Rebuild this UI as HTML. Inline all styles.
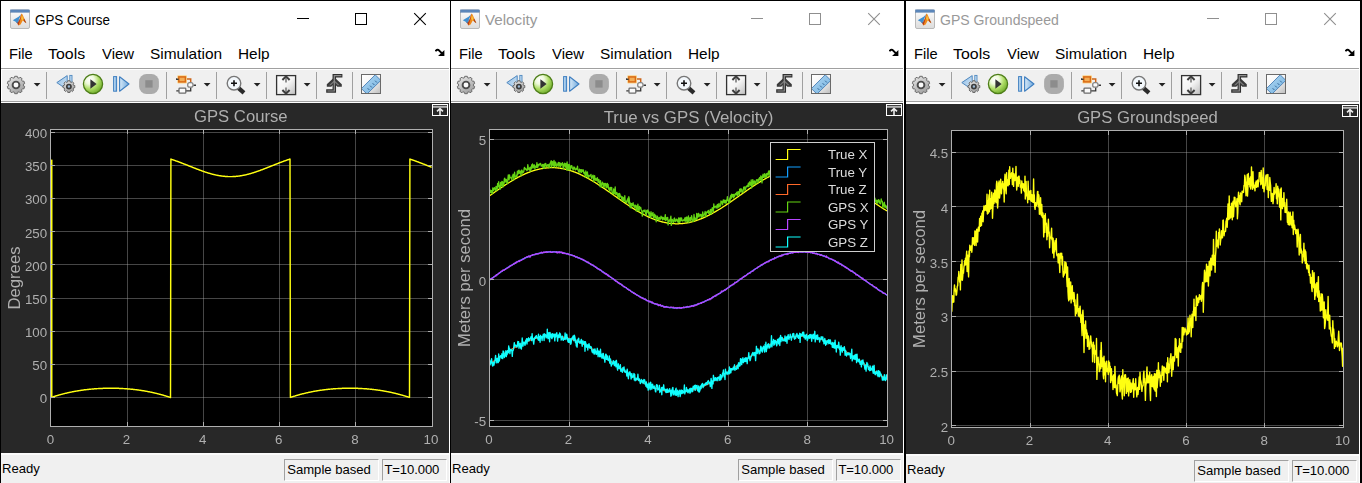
<!DOCTYPE html>
<html><head><meta charset="utf-8"><title>Scopes</title>
<style>
html,body{margin:0;padding:0;}
body{width:1362px;height:483px;overflow:hidden;background:#000;position:relative;font-family:"Liberation Sans",sans-serif;}
.win{position:absolute;top:1px;height:482px;background:#fff;overflow:hidden;}
.titlebar{position:absolute;left:0;top:0;right:0;height:37px;}
.ticon{position:absolute;left:9px;top:8px;}
.ttext{position:absolute;left:33.6px;top:9.6px;font-size:15.3px;line-height:18px;white-space:nowrap;transform-origin:0 0;transform:scaleX(0.89);color:#000;}
.inactive .ttext{color:#999;}
.ctl{position:absolute;top:0;height:36px;}
.menubar{position:absolute;left:0;right:0;top:37px;height:30px;}
.menubar span{position:absolute;top:7.2px;font-size:15px;line-height:18px;color:#000;white-space:nowrap;transform-origin:0 0;}
.mcorner{position:absolute;right:5px;top:9px;}
.tbline{position:absolute;left:0;right:1px;height:1px;}
.toolbar{position:absolute;left:0;right:1px;top:68px;height:32px;background:#f0f0f0;box-shadow:inset 1px 1px 0 #fff;}
.tbsvg{position:absolute;left:-1px;top:0;}
.figure{position:absolute;left:0;right:1px;background:#282828;will-change:transform;}
.fig{position:absolute;left:0;top:0;font-family:"Liberation Sans",sans-serif;}
.status{position:absolute;left:0;right:1px;bottom:0;background:#f0f0f0;border-top:2px solid #fbfbfb;font-size:13.1px;color:#000;}
.status .ready{position:absolute;left:1px;top:6.2px;line-height:15px;}
.panel{position:absolute;top:4px;height:20px;border:1px solid;border-color:#a0a0a0 #fff #fff #a0a0a0;line-height:19px;padding-left:2.2px;white-space:nowrap;box-sizing:content-box;}
.panel .tt{letter-spacing:-0.1px;margin-left:-0.8px;}
</style></head>
<body>
<div class="win" style="left:1px;width:449px;">
<div class="titlebar"><svg class="ticon" width="20" height="20" viewBox="0 0 20 20">
<defs><linearGradient id="mi" x1="0" y1="0" x2="0" y2="1"><stop offset="0" stop-color="#fdfdfd"/><stop offset="1" stop-color="#dcdcdc"/></linearGradient></defs>
<rect x="0.5" y="1" width="19" height="18.5" rx="1.5" fill="url(#mi)" stroke="#b9b9b9"/>
<rect x="0.6" y="0.9" width="18.8" height="2.3" fill="#5d89bc" stroke="#4d76a8" stroke-width="0.5"/>
<polygon points="2.8,11.2 9,7.6 11.2,5 9.4,9.5 7.6,13.2 5.6,12.8" fill="#3f8fd0"/>
<polygon points="5.6,12.8 7.6,13.2 9.6,9.4 8.8,12.6 7.4,14.4" fill="#2a5f9a"/>
<polygon points="11.4,4.4 12.6,5.4 14.2,9.6 16.4,14.2 14.6,13 12.8,11.6 10.6,15.4 8.6,16.6 7.4,14.4 9.2,11.6" fill="#ee8a1c"/>
<polygon points="11.4,4.4 10.4,8.6 8.8,12.6 7.4,14.4 8.4,16.4 9.6,13 10.8,9" fill="#b3371a"/>
<polygon points="12,6 13.4,10 12.4,12 11.2,9.6" fill="#f8c23a"/>
<polygon points="14.2,9.6 16.4,14.2 14.6,13 13.6,11" fill="#a8401c"/>
</svg><div class="ttext" style="transform:scaleX(0.873)">GPS Course</div>
<svg class="ctl" style="left:0" width="449" height="36" viewBox="0 1 449 36">
<path d="M296,18.5 h12" stroke="#000" stroke-width="1"/>
<rect x="354.5" y="13.5" width="11" height="11" fill="none" stroke="#000" stroke-width="1"/>
<path d="M413.2,13.2 l11.6,11.6 M424.8,13.2 l-11.6,11.6" stroke="#000" stroke-width="1.1"/>
</svg></div>
<div class="menubar">
<span style="left:8.0px;transform:scaleX(0.978)">File</span>
<span style="left:47.2px;transform:scaleX(1.060)">Tools</span>
<span style="left:100.6px;transform:scaleX(0.993)">View</span>
<span style="left:149.0px;transform:scaleX(1.029)">Simulation</span>
<span style="left:236.7px;transform:scaleX(1.025)">Help</span>
<svg class="mcorner" width="10" height="10" viewBox="0 0 10 10"><path d="M0.4,4.2 Q1.8,2.4 3.4,2.9 L7,6.4" stroke="#000" stroke-width="2" fill="none"/><polygon points="9.4,8.9 9.4,2.9 3.1,8.9" fill="#000"/></svg>
</div>
<div class="tbline" style="top:67px;background:#a0a0a0"></div>
<div class="toolbar"><svg class="tbsvg" width="449" height="32" viewBox="0 69 449 32">
<defs>
<linearGradient id="gg" x1="0" y1="0" x2="0.6" y2="1"><stop offset="0" stop-color="#ececec"/><stop offset="1" stop-color="#a2a2a2"/></linearGradient>
<radialGradient id="pg" cx="0.33" cy="0.28" r="0.78"><stop offset="0" stop-color="#ffffff"/><stop offset="0.3" stop-color="#eef9dc"/><stop offset="0.6" stop-color="#b0de68"/><stop offset="1" stop-color="#6aa826"/></radialGradient>
<linearGradient id="bg1" x1="0" y1="0" x2="1" y2="0"><stop offset="0" stop-color="#d6e9f8"/><stop offset="1" stop-color="#6fa8dc"/></linearGradient>
<linearGradient id="bg2" x1="0" y1="0" x2="1" y2="1"><stop offset="0" stop-color="#8dbbe4"/><stop offset="1" stop-color="#d9eaf8"/></linearGradient>
<linearGradient id="wg" x1="0" y1="0" x2="1" y2="1"><stop offset="0" stop-color="#ffffff"/><stop offset="0.5" stop-color="#f4f4f4"/><stop offset="1" stop-color="#bdbdbd"/></linearGradient>
<linearGradient id="rg" x1="0" y1="0" x2="1" y2="1"><stop offset="0" stop-color="#b5d9f2"/><stop offset="1" stop-color="#6fb0e0"/></linearGradient>
</defs>
<polygon points="14.68,76.30 17.32,76.30 17.41,77.63 19.19,78.21 20.04,77.18 22.18,78.74 21.47,79.87 22.57,81.39 23.87,81.05 24.68,83.57 23.44,84.06 23.44,85.94 24.68,86.43 23.87,88.95 22.57,88.61 21.47,90.13 22.18,91.26 20.04,92.82 19.19,91.79 17.41,92.37 17.32,93.70 14.68,93.70 14.59,92.37 12.81,91.79 11.96,92.82 9.82,91.26 10.53,90.13 9.43,88.61 8.13,88.95 7.32,86.43 8.56,85.94 8.56,84.06 7.32,83.57 8.13,81.05 9.43,81.39 10.53,79.87 9.82,78.74 11.96,77.18 12.81,78.21 14.59,77.63" fill="url(#gg)" stroke="#6b6b6b" stroke-width="1" stroke-linejoin="round"/><circle cx="16.0" cy="85.0" r="3.4" fill="#fbfbfb" stroke="#4c4c4c" stroke-width="1.9"/>
<polygon points="33.7,82.9 40.5,82.9 37.1,86.5" fill="#222"/>
<rect x="46" y="72" width="1" height="27" fill="#a0a0a0"/>
<polygon points="56.8,82.6 67.2,75.6 67.2,89.6" fill="url(#bg2)" stroke="#4f88bf" stroke-width="1"/>
<rect x="69.8" y="75.4" width="2.2" height="8" fill="#c4dff5" stroke="#4f88bf" stroke-width="0.9"/>
<polygon points="67.78,80.71 70.02,80.71 70.04,81.84 71.46,82.42 72.27,81.64 73.86,83.23 73.08,84.04 73.66,85.46 74.79,85.48 74.79,87.72 73.66,87.74 73.08,89.16 73.86,89.97 72.27,91.56 71.46,90.78 70.04,91.36 70.02,92.49 67.78,92.49 67.76,91.36 66.34,90.78 65.53,91.56 63.94,89.97 64.72,89.16 64.14,87.74 63.01,87.72 63.01,85.48 64.14,85.46 64.72,84.04 63.94,83.23 65.53,81.64 66.34,82.42 67.76,81.84" fill="url(#gg)" stroke="#6b6b6b" stroke-width="1" stroke-linejoin="round"/><circle cx="68.9" cy="86.6" r="2.1" fill="#9db8d2" stroke="#3c3c3c" stroke-width="1.7"/>
<circle cx="93" cy="84" r="9.6" fill="url(#pg)" stroke="#4d7d18" stroke-width="1.3"/>
<polygon points="90.4,79.3 96.6,84 90.4,88.7" fill="#333"/>
<rect x="113.6" y="76.6" width="3" height="14.6" fill="url(#bg1)" stroke="#3f7fc0" stroke-width="1"/>
<polygon points="119.6,76.8 129,84 119.6,91.2" fill="url(#bg1)" stroke="#3f7fc0" stroke-width="1.1" stroke-linejoin="round"/>
<rect x="139.1" y="74.1" width="19.8" height="19.8" rx="7.4" fill="#ababab"/>
<rect x="145.3" y="80.2" width="7.3" height="7.4" fill="#8c8c8c"/>
<rect x="166" y="72" width="1" height="27" fill="#a0a0a0"/>
<path d="M186.5,79 h4.2 v4" stroke="#cc651a" stroke-width="1.5" fill="none"/>
<path d="M176,79.2 h2.4" stroke="#333" stroke-width="1.4" fill="none"/>
<rect x="177.2" y="75.3" width="9.8" height="8.1" rx="1" fill="#fbd48c"/><rect x="178.8" y="76.9" width="6.6" height="5" fill="#f3ad55" stroke="#d96a14" stroke-width="1.5"/>
<path d="M176,79.3 h2.6" stroke="#3a3a3a" stroke-width="1.4" fill="none"/>
<path d="M176.3,90.8 h3 M186,90.8 h4.7 v-3.6 M193.4,85.2 h2.6" stroke="#383838" stroke-width="1.35" fill="none"/>
<rect x="179" y="88.2" width="6.8" height="5" rx="0.8" fill="#fafafa" stroke="#6c6c6c" stroke-width="1.3"/>
<rect x="187.7" y="82.7" width="5.3" height="4.5" rx="2" fill="#fafafa" stroke="#858585" stroke-width="1.3"/>
<polygon points="203.7,82.9 210.5,82.9 207.1,86.5" fill="#222"/>
<rect x="216" y="72" width="1" height="27" fill="#a0a0a0"/>
<line x1="238.6" y1="88.2" x2="242.4" y2="91.5" stroke="#2b2b2b" stroke-width="4.2" stroke-linecap="square"/>
<circle cx="234" cy="83.2" r="6.8" fill="#f3f8fc" stroke="#777" stroke-width="1.4"/>
<path d="M231,83.2 h6 M234,80.2 v6" stroke="#111" stroke-width="1.6" fill="none"/>
<polygon points="253.7,82.9 260.5,82.9 257.1,86.5" fill="#222"/>
<rect x="266" y="72" width="1" height="27" fill="#a0a0a0"/>
<rect x="276.6" y="75.6" width="19" height="19" fill="url(#wg)" stroke="#333" stroke-width="1.3"/>
<path d="M286,77.5 v5" stroke="#7a7a7a" stroke-width="1.6" fill="none"/><path d="M282.4,80 L286,76.4 L289.6,80" stroke="#3c3c3c" stroke-width="2" fill="none"/>
<path d="M286,87.5 v5" stroke="#7a7a7a" stroke-width="1.6" fill="none"/><path d="M282.4,90 L286,93.6 L289.6,90" stroke="#3c3c3c" stroke-width="2" fill="none"/>
<polygon points="303.7,82.9 310.5,82.9 307.1,86.5" fill="#222"/>
<rect x="316" y="72" width="1" height="27" fill="#a0a0a0"/>
<path d="M326.2,91 H334.3 V75.7 H342.4" stroke="#303030" stroke-width="3.5" fill="none" stroke-linejoin="miter"/>
<polygon points="326.8,86.8 326.8,84.2 334.3,77.2 341.8,84.2 341.8,86.8 337.4,86.8 334.3,83.8 331.2,86.8" fill="#3a3a3a"/>
<polygon points="329,85.2 334.3,80.2 339.6,85.2 337.8,85.2 334.3,82 330.8,85.2" fill="#787878"/>
<path d="M327.4,91 H334.3 V75.7 H341.4" stroke="#8e8e8e" stroke-width="1.2" fill="none"/>
<rect x="352" y="72" width="1" height="27" fill="#a0a0a0"/>
<rect x="361.5" y="74.5" width="19" height="19" fill="url(#wg)" stroke="#6a6a6a" stroke-width="1"/>
<clipPath id="rc"><rect x="362" y="75" width="18" height="18"/></clipPath>
<polygon clip-path="url(#rc)" points="361.4,88.6 375.2,74.8 380.8,80.4 367,94" fill="url(#rg)" stroke="#4a7fb5" stroke-width="0.9"/>
<path d="M367.6,88.2 l1.8,1.8 M370.1,85.7 l1.8,1.8 M372.6,83.2 l1.8,1.8 M375.1,80.7 l1.8,1.8" stroke="#2f5f8f" stroke-width="0.9"/>
</svg></div>
<div class="tbline" style="top:100px;background:#a0a0a0"></div>
<div class="figure" style="top:102px;height:350px;">
<svg class="fig" width="448" height="350" viewBox="1 103 448 350">
<rect x="50" y="129" width="383" height="298" fill="#000"/>
<path d="M127.5,129 V427 M203.5,129 V427 M279.5,129 V427 M355.5,129 V427 M50,397.5 H433 M50,364.5 H433 M50,331.5 H433 M50,298.5 H433 M50,264.5 H433 M50,231.5 H433 M50,198.5 H433 M50,165.5 H433 M50,132.5 H433" stroke="#afafaf" stroke-opacity="0.40" stroke-width="1" fill="none"/>
<clipPath id="cp1"><rect x="50" y="129" width="383" height="298"/></clipPath>
<g clip-path="url(#cp1)" fill="none" stroke-linejoin="round">
<polyline points="51.0,159.7 51.0,397.5 51.4,397.4 51.8,397.2 52.1,397.1 52.5,397.0 52.9,396.9 53.3,396.8 53.7,396.6 54.0,396.5 54.4,396.4 54.8,396.3 55.2,396.2 55.6,396.0 55.9,395.9 56.3,395.8 56.7,395.7 57.1,395.6 57.5,395.5 57.9,395.4 58.2,395.3 58.6,395.1 59.0,395.0 59.4,394.9 59.8,394.8 60.1,394.7 60.5,394.6 60.9,394.5 61.3,394.4 61.7,394.3 62.0,394.2 62.4,394.1 62.8,394.0 63.2,393.9 63.6,393.8 63.9,393.7 64.3,393.6 64.7,393.5 65.1,393.4 65.5,393.3 65.8,393.2 66.2,393.2 66.6,393.1 67.0,393.0 67.4,392.9 67.7,392.8 68.1,392.7 68.5,392.6 68.9,392.5 69.3,392.5 69.6,392.4 70.0,392.3 70.4,392.2 70.8,392.1 71.2,392.1 71.6,392.0 71.9,391.9 72.3,391.8 72.7,391.8 73.1,391.7 73.5,391.6 73.8,391.5 74.2,391.5 74.6,391.4 75.0,391.3 75.4,391.3 75.7,391.2 76.1,391.1 76.5,391.1 76.9,391.0 77.3,390.9 77.6,390.9 78.0,390.8 78.4,390.7 78.8,390.7 79.2,390.6 79.5,390.6 79.9,390.5 80.3,390.4 80.7,390.4 81.1,390.3 81.4,390.3 81.8,390.2 82.2,390.2 82.6,390.1 83.0,390.0 83.4,390.0 83.7,389.9 84.1,389.9 84.5,389.8 84.9,389.8 85.3,389.8 85.6,389.7 86.0,389.7 86.4,389.6 86.8,389.6 87.2,389.5 87.5,389.5 87.9,389.4 88.3,389.4 88.7,389.4 89.1,389.3 89.4,389.3 89.8,389.2 90.2,389.2 90.6,389.2 91.0,389.1 91.3,389.1 91.7,389.1 92.1,389.0 92.5,389.0 92.9,389.0 93.2,388.9 93.6,388.9 94.0,388.9 94.4,388.8 94.8,388.8 95.1,388.8 95.5,388.7 95.9,388.7 96.3,388.7 96.7,388.7 97.1,388.6 97.4,388.6 97.8,388.6 98.2,388.6 98.6,388.5 99.0,388.5 99.3,388.5 99.7,388.5 100.1,388.5 100.5,388.4 100.9,388.4 101.2,388.4 101.6,388.4 102.0,388.4 102.4,388.4 102.8,388.4 103.1,388.3 103.5,388.3 103.9,388.3 104.3,388.3 104.7,388.3 105.0,388.3 105.4,388.3 105.8,388.3 106.2,388.2 106.6,388.2 106.9,388.2 107.3,388.2 107.7,388.2 108.1,388.2 108.5,388.2 108.9,388.2 109.2,388.2 109.6,388.2 110.0,388.2 110.4,388.2 110.8,388.2 111.1,388.2 111.5,388.2 111.9,388.2 112.3,388.2 112.7,388.2 113.0,388.2 113.4,388.2 113.8,388.2 114.2,388.2 114.6,388.2 114.9,388.2 115.3,388.2 115.7,388.3 116.1,388.3 116.5,388.3 116.8,388.3 117.2,388.3 117.6,388.3 118.0,388.3 118.4,388.3 118.7,388.3 119.1,388.4 119.5,388.4 119.9,388.4 120.3,388.4 120.6,388.4 121.0,388.4 121.4,388.5 121.8,388.5 122.2,388.5 122.6,388.5 122.9,388.5 123.3,388.6 123.7,388.6 124.1,388.6 124.5,388.6 124.8,388.7 125.2,388.7 125.6,388.7 126.0,388.7 126.4,388.8 126.7,388.8 127.1,388.8 127.5,388.9 127.9,388.9 128.3,388.9 128.6,388.9 129.0,389.0 129.4,389.0 129.8,389.0 130.2,389.1 130.5,389.1 130.9,389.2 131.3,389.2 131.7,389.2 132.1,389.3 132.4,389.3 132.8,389.3 133.2,389.4 133.6,389.4 134.0,389.5 134.4,389.5 134.7,389.6 135.1,389.6 135.5,389.6 135.9,389.7 136.3,389.7 136.6,389.8 137.0,389.8 137.4,389.9 137.8,389.9 138.2,390.0 138.5,390.0 138.9,390.1 139.3,390.1 139.7,390.2 140.1,390.3 140.4,390.3 140.8,390.4 141.2,390.4 141.6,390.5 142.0,390.5 142.3,390.6 142.7,390.7 143.1,390.7 143.5,390.8 143.9,390.8 144.2,390.9 144.6,391.0 145.0,391.0 145.4,391.1 145.8,391.2 146.2,391.2 146.5,391.3 146.9,391.4 147.3,391.5 147.7,391.5 148.1,391.6 148.4,391.7 148.8,391.7 149.2,391.8 149.6,391.9 150.0,392.0 150.3,392.1 150.7,392.1 151.1,392.2 151.5,392.3 151.9,392.4 152.2,392.5 152.6,392.5 153.0,392.6 153.4,392.7 153.8,392.8 154.1,392.9 154.5,393.0 154.9,393.1 155.3,393.1 155.7,393.2 156.0,393.3 156.4,393.4 156.8,393.5 157.2,393.6 157.6,393.7 157.9,393.8 158.3,393.9 158.7,394.0 159.1,394.1 159.5,394.2 159.9,394.3 160.2,394.4 160.6,394.5 161.0,394.6 161.4,394.7 161.8,394.8 162.1,394.9 162.5,395.0 162.9,395.1 163.3,395.2 163.7,395.3 164.0,395.5 164.4,395.6 164.8,395.7 165.2,395.8 165.6,395.9 165.9,396.0 166.3,396.1 166.7,396.3 167.1,396.4 167.5,396.5 167.8,396.6 168.2,396.7 168.6,396.9 169.0,397.0 169.4,397.1 169.7,397.2 170.1,397.4 170.5,397.5 170.9,159.1 171.3,159.2 171.7,159.4 172.0,159.5 172.4,159.6 172.8,159.8 173.2,159.9 173.6,160.0 173.9,160.2 174.3,160.3 174.7,160.4 175.1,160.6 175.5,160.7 175.8,160.8 176.2,161.0 176.6,161.1 177.0,161.2 177.4,161.4 177.7,161.5 178.1,161.7 178.5,161.8 178.9,161.9 179.3,162.1 179.6,162.2 180.0,162.4 180.4,162.5 180.8,162.7 181.2,162.8 181.5,163.0 181.9,163.1 182.3,163.3 182.7,163.4 183.1,163.6 183.4,163.7 183.8,163.8 184.2,164.0 184.6,164.1 185.0,164.3 185.4,164.4 185.7,164.6 186.1,164.7 186.5,164.9 186.9,165.0 187.3,165.2 187.6,165.4 188.0,165.5 188.4,165.7 188.8,165.8 189.2,166.0 189.5,166.1 189.9,166.3 190.3,166.4 190.7,166.6 191.1,166.7 191.4,166.9 191.8,167.0 192.2,167.2 192.6,167.3 193.0,167.5 193.3,167.6 193.7,167.8 194.1,167.9 194.5,168.1 194.9,168.2 195.2,168.4 195.6,168.5 196.0,168.7 196.4,168.8 196.8,169.0 197.2,169.1 197.5,169.3 197.9,169.4 198.3,169.5 198.7,169.7 199.1,169.8 199.4,170.0 199.8,170.1 200.2,170.3 200.6,170.4 201.0,170.5 201.3,170.7 201.7,170.8 202.1,170.9 202.5,171.1 202.9,171.2 203.2,171.4 203.6,171.5 204.0,171.6 204.4,171.7 204.8,171.9 205.1,172.0 205.5,172.1 205.9,172.3 206.3,172.4 206.7,172.5 207.0,172.6 207.4,172.7 207.8,172.9 208.2,173.0 208.6,173.1 208.9,173.2 209.3,173.3 209.7,173.4 210.1,173.5 210.5,173.6 210.9,173.8 211.2,173.9 211.6,174.0 212.0,174.1 212.4,174.2 212.8,174.3 213.1,174.4 213.5,174.5 213.9,174.5 214.3,174.6 214.7,174.7 215.0,174.8 215.4,174.9 215.8,175.0 216.2,175.1 216.6,175.1 216.9,175.2 217.3,175.3 217.7,175.4 218.1,175.4 218.5,175.5 218.8,175.6 219.2,175.6 219.6,175.7 220.0,175.8 220.4,175.8 220.7,175.9 221.1,175.9 221.5,176.0 221.9,176.0 222.3,176.1 222.7,176.1 223.0,176.2 223.4,176.2 223.8,176.3 224.2,176.3 224.6,176.3 224.9,176.4 225.3,176.4 225.7,176.4 226.1,176.5 226.5,176.5 226.8,176.5 227.2,176.5 227.6,176.5 228.0,176.6 228.4,176.6 228.7,176.6 229.1,176.6 229.5,176.6 229.9,176.6 230.3,176.6 230.6,176.6 231.0,176.6 231.4,176.6 231.8,176.6 232.2,176.6 232.5,176.6 232.9,176.5 233.3,176.5 233.7,176.5 234.1,176.5 234.4,176.5 234.8,176.4 235.2,176.4 235.6,176.4 236.0,176.4 236.4,176.3 236.7,176.3 237.1,176.2 237.5,176.2 237.9,176.2 238.3,176.1 238.6,176.1 239.0,176.0 239.4,176.0 239.8,175.9 240.2,175.9 240.5,175.8 240.9,175.7 241.3,175.7 241.7,175.6 242.1,175.5 242.4,175.5 242.8,175.4 243.2,175.3 243.6,175.3 244.0,175.2 244.3,175.1 244.7,175.0 245.1,174.9 245.5,174.9 245.9,174.8 246.2,174.7 246.6,174.6 247.0,174.5 247.4,174.4 247.8,174.3 248.2,174.2 248.5,174.1 248.9,174.0 249.3,173.9 249.7,173.8 250.1,173.7 250.4,173.6 250.8,173.5 251.2,173.4 251.6,173.3 252.0,173.1 252.3,173.0 252.7,172.9 253.1,172.8 253.5,172.7 253.9,172.6 254.2,172.4 254.6,172.3 255.0,172.2 255.4,172.1 255.8,171.9 256.1,171.8 256.5,171.7 256.9,171.5 257.3,171.4 257.7,171.3 258.0,171.1 258.4,171.0 258.8,170.9 259.2,170.7 259.6,170.6 259.9,170.5 260.3,170.3 260.7,170.2 261.1,170.0 261.5,169.9 261.9,169.8 262.2,169.6 262.6,169.5 263.0,169.3 263.4,169.2 263.8,169.0 264.1,168.9 264.5,168.7 264.9,168.6 265.3,168.4 265.7,168.3 266.0,168.1 266.4,168.0 266.8,167.8 267.2,167.7 267.6,167.5 267.9,167.4 268.3,167.2 268.7,167.1 269.1,166.9 269.5,166.8 269.8,166.6 270.2,166.5 270.6,166.3 271.0,166.2 271.4,166.0 271.7,165.9 272.1,165.7 272.5,165.6 272.9,165.4 273.3,165.3 273.7,165.1 274.0,165.0 274.4,164.8 274.8,164.7 275.2,164.5 275.6,164.4 275.9,164.2 276.3,164.1 276.7,163.9 277.1,163.8 277.5,163.6 277.8,163.5 278.2,163.3 278.6,163.2 279.0,163.0 279.4,162.9 279.7,162.7 280.1,162.6 280.5,162.4 280.9,162.3 281.3,162.2 281.6,162.0 282.0,161.9 282.4,161.7 282.8,161.6 283.2,161.5 283.5,161.3 283.9,161.2 284.3,161.0 284.7,160.9 285.1,160.8 285.4,160.6 285.8,160.5 286.2,160.3 286.6,160.2 287.0,160.1 287.4,159.9 287.7,159.8 288.1,159.7 288.5,159.6 288.9,159.4 289.3,159.3 289.6,159.2 290.0,159.0 290.4,397.4 290.8,397.3 291.2,397.2 291.5,397.0 291.9,396.9 292.3,396.8 292.7,396.7 293.1,396.6 293.4,396.4 293.8,396.3 294.2,396.2 294.6,396.1 295.0,396.0 295.3,395.9 295.7,395.7 296.1,395.6 296.5,395.5 296.9,395.4 297.2,395.3 297.6,395.2 298.0,395.1 298.4,395.0 298.8,394.9 299.2,394.8 299.5,394.6 299.9,394.5 300.3,394.4 300.7,394.3 301.1,394.2 301.4,394.1 301.8,394.0 302.2,393.9 302.6,393.8 303.0,393.7 303.3,393.7 303.7,393.6 304.1,393.5 304.5,393.4 304.9,393.3 305.2,393.2 305.6,393.1 306.0,393.0 306.4,392.9 306.8,392.8 307.1,392.7 307.5,392.7 307.9,392.6 308.3,392.5 308.7,392.4 309.0,392.3 309.4,392.2 309.8,392.2 310.2,392.1 310.6,392.0 310.9,391.9 311.3,391.9 311.7,391.8 312.1,391.7 312.5,391.6 312.9,391.6 313.2,391.5 313.6,391.4 314.0,391.3 314.4,391.3 314.8,391.2 315.1,391.1 315.5,391.1 315.9,391.0 316.3,390.9 316.7,390.9 317.0,390.8 317.4,390.8 317.8,390.7 318.2,390.6 318.6,390.6 318.9,390.5 319.3,390.5 319.7,390.4 320.1,390.3 320.5,390.3 320.8,390.2 321.2,390.2 321.6,390.1 322.0,390.1 322.4,390.0 322.7,390.0 323.1,389.9 323.5,389.9 323.9,389.8 324.3,389.8 324.7,389.7 325.0,389.7 325.4,389.6 325.8,389.6 326.2,389.5 326.6,389.5 326.9,389.5 327.3,389.4 327.7,389.4 328.1,389.3 328.5,389.3 328.8,389.2 329.2,389.2 329.6,389.2 330.0,389.1 330.4,389.1 330.7,389.1 331.1,389.0 331.5,389.0 331.9,389.0 332.3,388.9 332.6,388.9 333.0,388.9 333.4,388.8 333.8,388.8 334.2,388.8 334.5,388.8 334.9,388.7 335.3,388.7 335.7,388.7 336.1,388.6 336.5,388.6 336.8,388.6 337.2,388.6 337.6,388.6 338.0,388.5 338.4,388.5 338.7,388.5 339.1,388.5 339.5,388.5 339.9,388.4 340.3,388.4 340.6,388.4 341.0,388.4 341.4,388.4 341.8,388.4 342.2,388.3 342.5,388.3 342.9,388.3 343.3,388.3 343.7,388.3 344.1,388.3 344.4,388.3 344.8,388.3 345.2,388.3 345.6,388.2 346.0,388.2 346.3,388.2 346.7,388.2 347.1,388.2 347.5,388.2 347.9,388.2 348.2,388.2 348.6,388.2 349.0,388.2 349.4,388.2 349.8,388.2 350.2,388.2 350.5,388.2 350.9,388.2 351.3,388.2 351.7,388.2 352.1,388.2 352.4,388.2 352.8,388.2 353.2,388.2 353.6,388.2 354.0,388.2 354.3,388.2 354.7,388.3 355.1,388.3 355.5,388.3 355.9,388.3 356.2,388.3 356.6,388.3 357.0,388.3 357.4,388.3 357.8,388.3 358.1,388.4 358.5,388.4 358.9,388.4 359.3,388.4 359.7,388.4 360.0,388.4 360.4,388.5 360.8,388.5 361.2,388.5 361.6,388.5 362.0,388.5 362.3,388.6 362.7,388.6 363.1,388.6 363.5,388.6 363.9,388.7 364.2,388.7 364.6,388.7 365.0,388.7 365.4,388.8 365.8,388.8 366.1,388.8 366.5,388.8 366.9,388.9 367.3,388.9 367.7,388.9 368.0,389.0 368.4,389.0 368.8,389.0 369.2,389.1 369.6,389.1 369.9,389.1 370.3,389.2 370.7,389.2 371.1,389.3 371.5,389.3 371.8,389.3 372.2,389.4 372.6,389.4 373.0,389.5 373.4,389.5 373.7,389.5 374.1,389.6 374.5,389.6 374.9,389.7 375.3,389.7 375.7,389.8 376.0,389.8 376.4,389.9 376.8,389.9 377.2,390.0 377.6,390.0 377.9,390.1 378.3,390.1 378.7,390.2 379.1,390.2 379.5,390.3 379.8,390.3 380.2,390.4 380.6,390.5 381.0,390.5 381.4,390.6 381.7,390.6 382.1,390.7 382.5,390.8 382.9,390.8 383.3,390.9 383.6,391.0 384.0,391.0 384.4,391.1 384.8,391.2 385.2,391.2 385.5,391.3 385.9,391.4 386.3,391.4 386.7,391.5 387.1,391.6 387.5,391.6 387.8,391.7 388.2,391.8 388.6,391.9 389.0,391.9 389.4,392.0 389.7,392.1 390.1,392.2 390.5,392.3 390.9,392.3 391.3,392.4 391.6,392.5 392.0,392.6 392.4,392.7 392.8,392.8 393.2,392.9 393.5,392.9 393.9,393.0 394.3,393.1 394.7,393.2 395.1,393.3 395.4,393.4 395.8,393.5 396.2,393.6 396.6,393.7 397.0,393.8 397.3,393.9 397.7,394.0 398.1,394.1 398.5,394.2 398.9,394.3 399.2,394.4 399.6,394.5 400.0,394.6 400.4,394.7 400.8,394.8 401.2,394.9 401.5,395.0 401.9,395.1 402.3,395.2 402.7,395.3 403.1,395.4 403.4,395.5 403.8,395.6 404.2,395.8 404.6,395.9 405.0,396.0 405.3,396.1 405.7,396.2 406.1,396.3 406.5,396.5 406.9,396.6 407.2,396.7 407.6,396.8 408.0,396.9 408.4,397.1 408.8,397.2 409.1,397.3 409.5,397.4 409.9,159.1 410.3,159.2 410.7,159.3 411.0,159.5 411.4,159.6 411.8,159.7 412.2,159.8 412.6,160.0 413.0,160.1 413.3,160.2 413.7,160.4 414.1,160.5 414.5,160.6 414.9,160.8 415.2,160.9 415.6,161.1 416.0,161.2 416.4,161.3 416.8,161.5 417.1,161.6 417.5,161.8 417.9,161.9 418.3,162.0 418.7,162.2 419.0,162.3 419.4,162.5 419.8,162.6 420.2,162.8 420.6,162.9 420.9,163.1 421.3,163.2 421.7,163.4 422.1,163.5 422.5,163.7 422.8,163.8 423.2,163.9 423.6,164.1 424.0,164.2 424.4,164.4 424.7,164.5 425.1,164.7 425.5,164.9 425.9,165.0 426.3,165.2 426.7,165.3 427.0,165.5 427.4,165.6 427.8,165.8 428.2,165.9 428.6,166.1 428.9,166.2 429.3,166.4 429.7,166.5 430.1,166.7 430.5,166.8 430.8,167.0 431.2,167.1 431.6,167.3" stroke="#ffff11" stroke-width="1.45"/>
<polyline points="51.5,159.7 51.5,397.5" stroke="#ffff11" stroke-width="2.0"/>
</g>
<rect x="50.5" y="129.5" width="382" height="297" fill="none" stroke="#afafaf" stroke-width="1"/>
<path d="M127.5,426 v-4 M127.5,130 v4 M203.5,426 v-4 M203.5,130 v4 M279.5,426 v-4 M279.5,130 v4 M355.5,426 v-4 M355.5,130 v4 M51,397.5 h4 M432,397.5 h-4 M51,364.5 h4 M432,364.5 h-4 M51,331.5 h4 M432,331.5 h-4 M51,298.5 h4 M432,298.5 h-4 M51,264.5 h4 M432,264.5 h-4 M51,231.5 h4 M432,231.5 h-4 M51,198.5 h4 M432,198.5 h-4 M51,165.5 h4 M432,165.5 h-4 M51,132.5 h4 M432,132.5 h-4" stroke="#afafaf" stroke-width="1" fill="none"/>
<g fill="#afafaf" font-size="13.33px">
<text x="50.4" y="444.1" text-anchor="middle">0</text>
<text x="126.5" y="444.1" text-anchor="middle">2</text>
<text x="202.6" y="444.1" text-anchor="middle">4</text>
<text x="278.8" y="444.1" text-anchor="middle">6</text>
<text x="354.9" y="444.1" text-anchor="middle">8</text>
<text x="431.0" y="444.1" text-anchor="middle">10</text>
<text x="47.2" y="403.1" text-anchor="end">0</text>
<text x="47.2" y="370.0" text-anchor="end">50</text>
<text x="47.2" y="336.9" text-anchor="end">100</text>
<text x="47.2" y="303.7" text-anchor="end">150</text>
<text x="47.2" y="270.6" text-anchor="end">200</text>
<text x="47.2" y="237.5" text-anchor="end">250</text>
<text x="47.2" y="204.3" text-anchor="end">300</text>
<text x="47.2" y="171.2" text-anchor="end">350</text>
<text x="47.2" y="138.1" text-anchor="end">400</text>
</g>
<text x="240.8" y="122.2" text-anchor="middle" fill="#afafaf" font-size="16.67px">GPS Course</text>
<text transform="translate(20.2,278.0) rotate(-90)" text-anchor="middle" fill="#afafaf" font-size="16.67px">Degrees</text>
<rect x="432.5" y="104.5" width="15" height="11" fill="#282828" stroke="#fff" stroke-width="1"/>
<rect x="433" y="105.8" width="14" height="2" fill="#b4b4b4"/>
<path d="M440.0,115.0 v-6.6 M437.0,111.4 l3,-2.8 l3,2.8" stroke="#eee" stroke-width="1.6" fill="none"/>
</svg>
</div>
<div class="status" style="top:452px;">
<div class="ready">Ready</div>
<div class="panel" style="left:283px;width:91px;">Sample based</div>
<div class="panel" style="left:381px;width:61px;"><span class="tt">T=10.000</span></div>
</div>
</div>
<div class="win inactive" style="left:451px;width:453px;">
<div class="titlebar"><svg class="ticon" width="20" height="20" viewBox="0 0 20 20">
<defs><linearGradient id="mi" x1="0" y1="0" x2="0" y2="1"><stop offset="0" stop-color="#fdfdfd"/><stop offset="1" stop-color="#dcdcdc"/></linearGradient></defs>
<rect x="0.5" y="1" width="19" height="18.5" rx="1.5" fill="url(#mi)" stroke="#b9b9b9"/>
<rect x="0.6" y="0.9" width="18.8" height="2.3" fill="#5d89bc" stroke="#4d76a8" stroke-width="0.5"/>
<polygon points="2.8,11.2 9,7.6 11.2,5 9.4,9.5 7.6,13.2 5.6,12.8" fill="#3f8fd0"/>
<polygon points="5.6,12.8 7.6,13.2 9.6,9.4 8.8,12.6 7.4,14.4" fill="#2a5f9a"/>
<polygon points="11.4,4.4 12.6,5.4 14.2,9.6 16.4,14.2 14.6,13 12.8,11.6 10.6,15.4 8.6,16.6 7.4,14.4 9.2,11.6" fill="#ee8a1c"/>
<polygon points="11.4,4.4 10.4,8.6 8.8,12.6 7.4,14.4 8.4,16.4 9.6,13 10.8,9" fill="#b3371a"/>
<polygon points="12,6 13.4,10 12.4,12 11.2,9.6" fill="#f8c23a"/>
<polygon points="14.2,9.6 16.4,14.2 14.6,13 13.6,11" fill="#a8401c"/>
</svg><div class="ttext" style="transform:scaleX(0.993)">Velocity</div>
<svg class="ctl" style="left:0" width="453" height="36" viewBox="0 1 453 36">
<path d="M300,18.5 h12" stroke="#8f8f8f" stroke-width="1"/>
<rect x="358.5" y="13.5" width="11" height="11" fill="none" stroke="#8f8f8f" stroke-width="1"/>
<path d="M417.2,13.2 l11.6,11.6 M428.8,13.2 l-11.6,11.6" stroke="#8f8f8f" stroke-width="1.1"/>
</svg></div>
<div class="menubar">
<span style="left:8.0px;transform:scaleX(0.978)">File</span>
<span style="left:47.2px;transform:scaleX(1.060)">Tools</span>
<span style="left:100.6px;transform:scaleX(0.993)">View</span>
<span style="left:149.0px;transform:scaleX(1.029)">Simulation</span>
<span style="left:236.7px;transform:scaleX(1.025)">Help</span>
<svg class="mcorner" width="10" height="10" viewBox="0 0 10 10"><path d="M0.4,4.2 Q1.8,2.4 3.4,2.9 L7,6.4" stroke="#000" stroke-width="2" fill="none"/><polygon points="9.4,8.9 9.4,2.9 3.1,8.9" fill="#000"/></svg>
</div>
<div class="tbline" style="top:67px;background:#a0a0a0"></div>
<div class="toolbar"><svg class="tbsvg" width="453" height="32" viewBox="0 69 453 32">
<defs>
<linearGradient id="gg" x1="0" y1="0" x2="0.6" y2="1"><stop offset="0" stop-color="#ececec"/><stop offset="1" stop-color="#a2a2a2"/></linearGradient>
<radialGradient id="pg" cx="0.33" cy="0.28" r="0.78"><stop offset="0" stop-color="#ffffff"/><stop offset="0.3" stop-color="#eef9dc"/><stop offset="0.6" stop-color="#b0de68"/><stop offset="1" stop-color="#6aa826"/></radialGradient>
<linearGradient id="bg1" x1="0" y1="0" x2="1" y2="0"><stop offset="0" stop-color="#d6e9f8"/><stop offset="1" stop-color="#6fa8dc"/></linearGradient>
<linearGradient id="bg2" x1="0" y1="0" x2="1" y2="1"><stop offset="0" stop-color="#8dbbe4"/><stop offset="1" stop-color="#d9eaf8"/></linearGradient>
<linearGradient id="wg" x1="0" y1="0" x2="1" y2="1"><stop offset="0" stop-color="#ffffff"/><stop offset="0.5" stop-color="#f4f4f4"/><stop offset="1" stop-color="#bdbdbd"/></linearGradient>
<linearGradient id="rg" x1="0" y1="0" x2="1" y2="1"><stop offset="0" stop-color="#b5d9f2"/><stop offset="1" stop-color="#6fb0e0"/></linearGradient>
</defs>
<polygon points="14.68,76.30 17.32,76.30 17.41,77.63 19.19,78.21 20.04,77.18 22.18,78.74 21.47,79.87 22.57,81.39 23.87,81.05 24.68,83.57 23.44,84.06 23.44,85.94 24.68,86.43 23.87,88.95 22.57,88.61 21.47,90.13 22.18,91.26 20.04,92.82 19.19,91.79 17.41,92.37 17.32,93.70 14.68,93.70 14.59,92.37 12.81,91.79 11.96,92.82 9.82,91.26 10.53,90.13 9.43,88.61 8.13,88.95 7.32,86.43 8.56,85.94 8.56,84.06 7.32,83.57 8.13,81.05 9.43,81.39 10.53,79.87 9.82,78.74 11.96,77.18 12.81,78.21 14.59,77.63" fill="url(#gg)" stroke="#6b6b6b" stroke-width="1" stroke-linejoin="round"/><circle cx="16.0" cy="85.0" r="3.4" fill="#fbfbfb" stroke="#4c4c4c" stroke-width="1.9"/>
<polygon points="33.7,82.9 40.5,82.9 37.1,86.5" fill="#222"/>
<rect x="46" y="72" width="1" height="27" fill="#a0a0a0"/>
<polygon points="56.8,82.6 67.2,75.6 67.2,89.6" fill="url(#bg2)" stroke="#4f88bf" stroke-width="1"/>
<rect x="69.8" y="75.4" width="2.2" height="8" fill="#c4dff5" stroke="#4f88bf" stroke-width="0.9"/>
<polygon points="67.78,80.71 70.02,80.71 70.04,81.84 71.46,82.42 72.27,81.64 73.86,83.23 73.08,84.04 73.66,85.46 74.79,85.48 74.79,87.72 73.66,87.74 73.08,89.16 73.86,89.97 72.27,91.56 71.46,90.78 70.04,91.36 70.02,92.49 67.78,92.49 67.76,91.36 66.34,90.78 65.53,91.56 63.94,89.97 64.72,89.16 64.14,87.74 63.01,87.72 63.01,85.48 64.14,85.46 64.72,84.04 63.94,83.23 65.53,81.64 66.34,82.42 67.76,81.84" fill="url(#gg)" stroke="#6b6b6b" stroke-width="1" stroke-linejoin="round"/><circle cx="68.9" cy="86.6" r="2.1" fill="#9db8d2" stroke="#3c3c3c" stroke-width="1.7"/>
<circle cx="93" cy="84" r="9.6" fill="url(#pg)" stroke="#4d7d18" stroke-width="1.3"/>
<polygon points="90.4,79.3 96.6,84 90.4,88.7" fill="#333"/>
<rect x="113.6" y="76.6" width="3" height="14.6" fill="url(#bg1)" stroke="#3f7fc0" stroke-width="1"/>
<polygon points="119.6,76.8 129,84 119.6,91.2" fill="url(#bg1)" stroke="#3f7fc0" stroke-width="1.1" stroke-linejoin="round"/>
<rect x="139.1" y="74.1" width="19.8" height="19.8" rx="7.4" fill="#ababab"/>
<rect x="145.3" y="80.2" width="7.3" height="7.4" fill="#8c8c8c"/>
<rect x="166" y="72" width="1" height="27" fill="#a0a0a0"/>
<path d="M186.5,79 h4.2 v4" stroke="#cc651a" stroke-width="1.5" fill="none"/>
<path d="M176,79.2 h2.4" stroke="#333" stroke-width="1.4" fill="none"/>
<rect x="177.2" y="75.3" width="9.8" height="8.1" rx="1" fill="#fbd48c"/><rect x="178.8" y="76.9" width="6.6" height="5" fill="#f3ad55" stroke="#d96a14" stroke-width="1.5"/>
<path d="M176,79.3 h2.6" stroke="#3a3a3a" stroke-width="1.4" fill="none"/>
<path d="M176.3,90.8 h3 M186,90.8 h4.7 v-3.6 M193.4,85.2 h2.6" stroke="#383838" stroke-width="1.35" fill="none"/>
<rect x="179" y="88.2" width="6.8" height="5" rx="0.8" fill="#fafafa" stroke="#6c6c6c" stroke-width="1.3"/>
<rect x="187.7" y="82.7" width="5.3" height="4.5" rx="2" fill="#fafafa" stroke="#858585" stroke-width="1.3"/>
<polygon points="203.7,82.9 210.5,82.9 207.1,86.5" fill="#222"/>
<rect x="216" y="72" width="1" height="27" fill="#a0a0a0"/>
<line x1="238.6" y1="88.2" x2="242.4" y2="91.5" stroke="#2b2b2b" stroke-width="4.2" stroke-linecap="square"/>
<circle cx="234" cy="83.2" r="6.8" fill="#f3f8fc" stroke="#777" stroke-width="1.4"/>
<path d="M231,83.2 h6 M234,80.2 v6" stroke="#111" stroke-width="1.6" fill="none"/>
<polygon points="253.7,82.9 260.5,82.9 257.1,86.5" fill="#222"/>
<rect x="266" y="72" width="1" height="27" fill="#a0a0a0"/>
<rect x="276.6" y="75.6" width="19" height="19" fill="url(#wg)" stroke="#333" stroke-width="1.3"/>
<path d="M286,77.5 v5" stroke="#7a7a7a" stroke-width="1.6" fill="none"/><path d="M282.4,80 L286,76.4 L289.6,80" stroke="#3c3c3c" stroke-width="2" fill="none"/>
<path d="M286,87.5 v5" stroke="#7a7a7a" stroke-width="1.6" fill="none"/><path d="M282.4,90 L286,93.6 L289.6,90" stroke="#3c3c3c" stroke-width="2" fill="none"/>
<polygon points="303.7,82.9 310.5,82.9 307.1,86.5" fill="#222"/>
<rect x="316" y="72" width="1" height="27" fill="#a0a0a0"/>
<path d="M326.2,91 H334.3 V75.7 H342.4" stroke="#303030" stroke-width="3.5" fill="none" stroke-linejoin="miter"/>
<polygon points="326.8,86.8 326.8,84.2 334.3,77.2 341.8,84.2 341.8,86.8 337.4,86.8 334.3,83.8 331.2,86.8" fill="#3a3a3a"/>
<polygon points="329,85.2 334.3,80.2 339.6,85.2 337.8,85.2 334.3,82 330.8,85.2" fill="#787878"/>
<path d="M327.4,91 H334.3 V75.7 H341.4" stroke="#8e8e8e" stroke-width="1.2" fill="none"/>
<rect x="352" y="72" width="1" height="27" fill="#a0a0a0"/>
<rect x="361.5" y="74.5" width="19" height="19" fill="url(#wg)" stroke="#6a6a6a" stroke-width="1"/>
<clipPath id="rc"><rect x="362" y="75" width="18" height="18"/></clipPath>
<polygon clip-path="url(#rc)" points="361.4,88.6 375.2,74.8 380.8,80.4 367,94" fill="url(#rg)" stroke="#4a7fb5" stroke-width="0.9"/>
<path d="M367.6,88.2 l1.8,1.8 M370.1,85.7 l1.8,1.8 M372.6,83.2 l1.8,1.8 M375.1,80.7 l1.8,1.8" stroke="#2f5f8f" stroke-width="0.9"/>
</svg></div>
<div class="tbline" style="top:100px;background:#a0a0a0"></div>
<div class="figure" style="top:102px;height:350px;">
<svg class="fig" width="452" height="350" viewBox="451 103 452 350">
<rect x="489" y="129" width="399" height="298" fill="#000"/>
<path d="M569.5,129 V427 M648.5,129 V427 M728.5,129 V427 M807.5,129 V427 M489,420.5 H888 M489,279.5 H888 M489,139.5 H888" stroke="#afafaf" stroke-opacity="0.40" stroke-width="1" fill="none"/>
<clipPath id="cp2"><rect x="489" y="129" width="399" height="298"/></clipPath>
<g clip-path="url(#cp2)" fill="none" stroke-linejoin="round">
<polyline points="489.6,195.7 490.0,195.4 490.4,195.2 490.8,194.9 491.2,194.6 491.6,194.3 492.0,194.0 492.4,193.8 492.8,193.5 493.2,193.2 493.6,192.9 494.0,192.6 494.4,192.4 494.8,192.1 495.2,191.8 495.6,191.5 496.0,191.2 496.4,191.0 496.8,190.7 497.2,190.4 497.6,190.1 497.9,189.9 498.3,189.6 498.7,189.3 499.1,189.1 499.5,188.8 499.9,188.5 500.3,188.2 500.7,188.0 501.1,187.7 501.5,187.4 501.9,187.2 502.3,186.9 502.7,186.6 503.1,186.4 503.5,186.1 503.9,185.8 504.3,185.6 504.7,185.3 505.1,185.1 505.5,184.8 505.9,184.5 506.3,184.3 506.7,184.0 507.1,183.8 507.5,183.5 507.9,183.3 508.3,183.0 508.7,182.8 509.1,182.5 509.5,182.3 509.9,182.0 510.3,181.8 510.7,181.5 511.1,181.3 511.5,181.1 511.9,180.8 512.3,180.6 512.7,180.3 513.1,180.1 513.5,179.9 513.9,179.6 514.3,179.4 514.6,179.2 515.0,179.0 515.4,178.7 515.8,178.5 516.2,178.3 516.6,178.1 517.0,177.9 517.4,177.6 517.8,177.4 518.2,177.2 518.6,177.0 519.0,176.8 519.4,176.6 519.8,176.4 520.2,176.2 520.6,176.0 521.0,175.8 521.4,175.6 521.8,175.4 522.2,175.2 522.6,175.0 523.0,174.8 523.4,174.6 523.8,174.5 524.2,174.3 524.6,174.1 525.0,173.9 525.4,173.7 525.8,173.6 526.2,173.4 526.6,173.2 527.0,173.1 527.4,172.9 527.8,172.7 528.2,172.6 528.6,172.4 529.0,172.3 529.4,172.1 529.8,172.0 530.2,171.8 530.6,171.7 531.0,171.5 531.3,171.4 531.7,171.2 532.1,171.1 532.5,171.0 532.9,170.8 533.3,170.7 533.7,170.6 534.1,170.5 534.5,170.3 534.9,170.2 535.3,170.1 535.7,170.0 536.1,169.9 536.5,169.8 536.9,169.7 537.3,169.6 537.7,169.5 538.1,169.4 538.5,169.3 538.9,169.2 539.3,169.1 539.7,169.0 540.1,168.9 540.5,168.8 540.9,168.8 541.3,168.7 541.7,168.6 542.1,168.5 542.5,168.5 542.9,168.4 543.3,168.3 543.7,168.3 544.1,168.2 544.5,168.2 544.9,168.1 545.3,168.1 545.7,168.0 546.1,168.0 546.5,167.9 546.9,167.9 547.3,167.9 547.6,167.8 548.0,167.8 548.4,167.8 548.8,167.8 549.2,167.7 549.6,167.7 550.0,167.7 550.4,167.7 550.8,167.7 551.2,167.7 551.6,167.7 552.0,167.7 552.4,167.7 552.8,167.7 553.2,167.7 553.6,167.7 554.0,167.7 554.4,167.7 554.8,167.7 555.2,167.7 555.6,167.8 556.0,167.8 556.4,167.8 556.8,167.9 557.2,167.9 557.6,167.9 558.0,168.0 558.4,168.0 558.8,168.1 559.2,168.1 559.6,168.2 560.0,168.2 560.4,168.3 560.8,168.3 561.2,168.4 561.6,168.5 562.0,168.5 562.4,168.6 562.8,168.7 563.2,168.7 563.6,168.8 564.0,168.9 564.3,169.0 564.7,169.1 565.1,169.2 565.5,169.3 565.9,169.4 566.3,169.5 566.7,169.6 567.1,169.7 567.5,169.8 567.9,169.9 568.3,170.0 568.7,170.1 569.1,170.2 569.5,170.3 569.9,170.4 570.3,170.6 570.7,170.7 571.1,170.8 571.5,171.0 571.9,171.1 572.3,171.2 572.7,171.4 573.1,171.5 573.5,171.6 573.9,171.8 574.3,171.9 574.7,172.1 575.1,172.2 575.5,172.4 575.9,172.5 576.3,172.7 576.7,172.9 577.1,173.0 577.5,173.2 577.9,173.4 578.3,173.5 578.7,173.7 579.1,173.9 579.5,174.1 579.9,174.2 580.3,174.4 580.7,174.6 581.0,174.8 581.4,175.0 581.8,175.2 582.2,175.4 582.6,175.6 583.0,175.8 583.4,176.0 583.8,176.2 584.2,176.4 584.6,176.6 585.0,176.8 585.4,177.0 585.8,177.2 586.2,177.4 586.6,177.6 587.0,177.8 587.4,178.0 587.8,178.3 588.2,178.5 588.6,178.7 589.0,178.9 589.4,179.2 589.8,179.4 590.2,179.6 590.6,179.8 591.0,180.1 591.4,180.3 591.8,180.5 592.2,180.8 592.6,181.0 593.0,181.3 593.4,181.5 593.8,181.7 594.2,182.0 594.6,182.2 595.0,182.5 595.4,182.7 595.8,183.0 596.2,183.2 596.6,183.5 597.0,183.7 597.3,184.0 597.7,184.2 598.1,184.5 598.5,184.8 598.9,185.0 599.3,185.3 599.7,185.5 600.1,185.8 600.5,186.1 600.9,186.3 601.3,186.6 601.7,186.9 602.1,187.1 602.5,187.4 602.9,187.7 603.3,187.9 603.7,188.2 604.1,188.5 604.5,188.7 604.9,189.0 605.3,189.3 605.7,189.6 606.1,189.8 606.5,190.1 606.9,190.4 607.3,190.7 607.7,190.9 608.1,191.2 608.5,191.5 608.9,191.8 609.3,192.0 609.7,192.3 610.1,192.6 610.5,192.9 610.9,193.2 611.3,193.4 611.7,193.7 612.1,194.0 612.5,194.3 612.9,194.6 613.3,194.8 613.7,195.1 614.0,195.4 614.4,195.7 614.8,196.0 615.2,196.2 615.6,196.5 616.0,196.8 616.4,197.1 616.8,197.4 617.2,197.6 617.6,197.9 618.0,198.2 618.4,198.5 618.8,198.8 619.2,199.0 619.6,199.3 620.0,199.6 620.4,199.9 620.8,200.1 621.2,200.4 621.6,200.7 622.0,201.0 622.4,201.3 622.8,201.5 623.2,201.8 623.6,202.1 624.0,202.3 624.4,202.6 624.8,202.9 625.2,203.2 625.6,203.4 626.0,203.7 626.4,204.0 626.8,204.2 627.2,204.5 627.6,204.8 628.0,205.0 628.4,205.3 628.8,205.6 629.2,205.8 629.6,206.1 630.0,206.3 630.4,206.6 630.7,206.9 631.1,207.1 631.5,207.4 631.9,207.6 632.3,207.9 632.7,208.1 633.1,208.4 633.5,208.6 633.9,208.9 634.3,209.1 634.7,209.4 635.1,209.6 635.5,209.9 635.9,210.1 636.3,210.3 636.7,210.6 637.1,210.8 637.5,211.1 637.9,211.3 638.3,211.5 638.7,211.8 639.1,212.0 639.5,212.2 639.9,212.4 640.3,212.7 640.7,212.9 641.1,213.1 641.5,213.3 641.9,213.5 642.3,213.8 642.7,214.0 643.1,214.2 643.5,214.4 643.9,214.6 644.3,214.8 644.7,215.0 645.1,215.2 645.5,215.4 645.9,215.6 646.3,215.8 646.7,216.0 647.0,216.2 647.4,216.4 647.8,216.6 648.2,216.8 648.6,217.0 649.0,217.1 649.4,217.3 649.8,217.5 650.2,217.7 650.6,217.8 651.0,218.0 651.4,218.2 651.8,218.4 652.2,218.5 652.6,218.7 653.0,218.8 653.4,219.0 653.8,219.2 654.2,219.3 654.6,219.5 655.0,219.6 655.4,219.8 655.8,219.9 656.2,220.0 656.6,220.2 657.0,220.3 657.4,220.4 657.8,220.6 658.2,220.7 658.6,220.8 659.0,221.0 659.4,221.1 659.8,221.2 660.2,221.3 660.6,221.4 661.0,221.5 661.4,221.6 661.8,221.8 662.2,221.9 662.6,222.0 663.0,222.1 663.4,222.2 663.7,222.2 664.1,222.3 664.5,222.4 664.9,222.5 665.3,222.6 665.7,222.7 666.1,222.7 666.5,222.8 666.9,222.9 667.3,223.0 667.7,223.0 668.1,223.1 668.5,223.1 668.9,223.2 669.3,223.3 669.7,223.3 670.1,223.4 670.5,223.4 670.9,223.5 671.3,223.5 671.7,223.5 672.1,223.6 672.5,223.6 672.9,223.6 673.3,223.7 673.7,223.7 674.1,223.7 674.5,223.7 674.9,223.7 675.3,223.8 675.7,223.8 676.1,223.8 676.5,223.8 676.9,223.8 677.3,223.8 677.7,223.8 678.1,223.8 678.5,223.8 678.9,223.7 679.3,223.7 679.7,223.7 680.1,223.7 680.4,223.7 680.8,223.6 681.2,223.6 681.6,223.6 682.0,223.6 682.4,223.5 682.8,223.5 683.2,223.4 683.6,223.4 684.0,223.3 684.4,223.3 684.8,223.2 685.2,223.2 685.6,223.1 686.0,223.1 686.4,223.0 686.8,222.9 687.2,222.9 687.6,222.8 688.0,222.7 688.4,222.6 688.8,222.5 689.2,222.5 689.6,222.4 690.0,222.3 690.4,222.2 690.8,222.1 691.2,222.0 691.6,221.9 692.0,221.8 692.4,221.7 692.8,221.6 693.2,221.5 693.6,221.4 694.0,221.3 694.4,221.1 694.8,221.0 695.2,220.9 695.6,220.8 696.0,220.6 696.4,220.5 696.7,220.4 697.1,220.2 697.5,220.1 697.9,220.0 698.3,219.8 698.7,219.7 699.1,219.5 699.5,219.4 699.9,219.2 700.3,219.1 700.7,218.9 701.1,218.8 701.5,218.6 701.9,218.4 702.3,218.3 702.7,218.1 703.1,217.9 703.5,217.8 703.9,217.6 704.3,217.4 704.7,217.2 705.1,217.0 705.5,216.9 705.9,216.7 706.3,216.5 706.7,216.3 707.1,216.1 707.5,215.9 707.9,215.7 708.3,215.5 708.7,215.3 709.1,215.1 709.5,214.9 709.9,214.7 710.3,214.5 710.7,214.3 711.1,214.1 711.5,213.9 711.9,213.7 712.3,213.4 712.7,213.2 713.1,213.0 713.4,212.8 713.8,212.5 714.2,212.3 714.6,212.1 715.0,211.9 715.4,211.6 715.8,211.4 716.2,211.2 716.6,210.9 717.0,210.7 717.4,210.5 717.8,210.2 718.2,210.0 718.6,209.7 719.0,209.5 719.4,209.3 719.8,209.0 720.2,208.8 720.6,208.5 721.0,208.3 721.4,208.0 721.8,207.8 722.2,207.5 722.6,207.2 723.0,207.0 723.4,206.7 723.8,206.5 724.2,206.2 724.6,206.0 725.0,205.7 725.4,205.4 725.8,205.2 726.2,204.9 726.6,204.6 727.0,204.4 727.4,204.1 727.8,203.8 728.2,203.6 728.6,203.3 729.0,203.0 729.4,202.7 729.8,202.5 730.1,202.2 730.5,201.9 730.9,201.7 731.3,201.4 731.7,201.1 732.1,200.8 732.5,200.6 732.9,200.3 733.3,200.0 733.7,199.7 734.1,199.4 734.5,199.2 734.9,198.9 735.3,198.6 735.7,198.3 736.1,198.1 736.5,197.8 736.9,197.5 737.3,197.2 737.7,196.9 738.1,196.7 738.5,196.4 738.9,196.1 739.3,195.8 739.7,195.5 740.1,195.2 740.5,195.0 740.9,194.7 741.3,194.4 741.7,194.1 742.1,193.8 742.5,193.6 742.9,193.3 743.3,193.0 743.7,192.7 744.1,192.4 744.5,192.2 744.9,191.9 745.3,191.6 745.7,191.3 746.1,191.1 746.4,190.8 746.8,190.5 747.2,190.2 747.6,190.0 748.0,189.7 748.4,189.4 748.8,189.1 749.2,188.9 749.6,188.6 750.0,188.3 750.4,188.1 750.8,187.8 751.2,187.5 751.6,187.2 752.0,187.0 752.4,186.7 752.8,186.4 753.2,186.2 753.6,185.9 754.0,185.7 754.4,185.4 754.8,185.1 755.2,184.9 755.6,184.6 756.0,184.4 756.4,184.1 756.8,183.8 757.2,183.6 757.6,183.3 758.0,183.1 758.4,182.8 758.8,182.6 759.2,182.3 759.6,182.1 760.0,181.9 760.4,181.6 760.8,181.4 761.2,181.1 761.6,180.9 762.0,180.7 762.4,180.4 762.8,180.2 763.1,179.9 763.5,179.7 763.9,179.5 764.3,179.3 764.7,179.0 765.1,178.8 765.5,178.6 765.9,178.4 766.3,178.1 766.7,177.9 767.1,177.7 767.5,177.5 767.9,177.3 768.3,177.1 768.7,176.9 769.1,176.7 769.5,176.5 769.9,176.3 770.3,176.0 770.7,175.9 771.1,175.7 771.5,175.5 771.9,175.3 772.3,175.1 772.7,174.9 773.1,174.7 773.5,174.5 773.9,174.3 774.3,174.2 774.7,174.0 775.1,173.8 775.5,173.6 775.9,173.4 776.3,173.3 776.7,173.1 777.1,172.9 777.5,172.8 777.9,172.6 778.3,172.5 778.7,172.3 779.1,172.2 779.5,172.0 779.8,171.9 780.2,171.7 780.6,171.6 781.0,171.4 781.4,171.3 781.8,171.1 782.2,171.0 782.6,170.9 783.0,170.8 783.4,170.6 783.8,170.5 784.2,170.4 784.6,170.3 785.0,170.1 785.4,170.0 785.8,169.9 786.2,169.8 786.6,169.7 787.0,169.6 787.4,169.5 787.8,169.4 788.2,169.3 788.6,169.2 789.0,169.1 789.4,169.0 789.8,168.9 790.2,168.9 790.6,168.8 791.0,168.7 791.4,168.6 791.8,168.6 792.2,168.5 792.6,168.4 793.0,168.4 793.4,168.3 793.8,168.2 794.2,168.2 794.6,168.1 795.0,168.1 795.4,168.0 795.8,168.0 796.1,168.0 796.5,167.9 796.9,167.9 797.3,167.8 797.7,167.8 798.1,167.8 798.5,167.8 798.9,167.7 799.3,167.7 799.7,167.7 800.1,167.7 800.5,167.7 800.9,167.7 801.3,167.7 801.7,167.7 802.1,167.7 802.5,167.7 802.9,167.7 803.3,167.7 803.7,167.7 804.1,167.7 804.5,167.7 804.9,167.7 805.3,167.8 805.7,167.8 806.1,167.8 806.5,167.8 806.9,167.9 807.3,167.9 807.7,168.0 808.1,168.0 808.5,168.0 808.9,168.1 809.3,168.1 809.7,168.2 810.1,168.3 810.5,168.3 810.9,168.4 811.3,168.4 811.7,168.5 812.1,168.6 812.5,168.6 812.8,168.7 813.2,168.8 813.6,168.9 814.0,169.0 814.4,169.0 814.8,169.1 815.2,169.2 815.6,169.3 816.0,169.4 816.4,169.5 816.8,169.6 817.2,169.7 817.6,169.8 818.0,169.9 818.4,170.1 818.8,170.2 819.2,170.3 819.6,170.4 820.0,170.5 820.4,170.7 820.8,170.8 821.2,170.9 821.6,171.0 822.0,171.2 822.4,171.3 822.8,171.5 823.2,171.6 823.6,171.7 824.0,171.9 824.4,172.0 824.8,172.2 825.2,172.3 825.6,172.5 826.0,172.7 826.4,172.8 826.8,173.0 827.2,173.1 827.6,173.3 828.0,173.5 828.4,173.7 828.8,173.8 829.2,174.0 829.5,174.2 829.9,174.4 830.3,174.6 830.7,174.7 831.1,174.9 831.5,175.1 831.9,175.3 832.3,175.5 832.7,175.7 833.1,175.9 833.5,176.1 833.9,176.3 834.3,176.5 834.7,176.7 835.1,176.9 835.5,177.1 835.9,177.3 836.3,177.5 836.7,177.8 837.1,178.0 837.5,178.2 837.9,178.4 838.3,178.6 838.7,178.9 839.1,179.1 839.5,179.3 839.9,179.5 840.3,179.8 840.7,180.0 841.1,180.2 841.5,180.5 841.9,180.7 842.3,180.9 842.7,181.2 843.1,181.4 843.5,181.7 843.9,181.9 844.3,182.1 844.7,182.4 845.1,182.6 845.5,182.9 845.8,183.1 846.2,183.4 846.6,183.6 847.0,183.9 847.4,184.2 847.8,184.4 848.2,184.7 848.6,184.9 849.0,185.2 849.4,185.4 849.8,185.7 850.2,186.0 850.6,186.2 851.0,186.5 851.4,186.8 851.8,187.0 852.2,187.3 852.6,187.6 853.0,187.8 853.4,188.1 853.8,188.4 854.2,188.6 854.6,188.9 855.0,189.2 855.4,189.5 855.8,189.7 856.2,190.0 856.6,190.3 857.0,190.6 857.4,190.8 857.8,191.1 858.2,191.4 858.6,191.7 859.0,191.9 859.4,192.2 859.8,192.5 860.2,192.8 860.6,193.1 861.0,193.3 861.4,193.6 861.8,193.9 862.2,194.2 862.5,194.5 862.9,194.7 863.3,195.0 863.7,195.3 864.1,195.6 864.5,195.9 864.9,196.1 865.3,196.4 865.7,196.7 866.1,197.0 866.5,197.3 866.9,197.5 867.3,197.8 867.7,198.1 868.1,198.4 868.5,198.7 868.9,198.9 869.3,199.2 869.7,199.5 870.1,199.8 870.5,200.1 870.9,200.3 871.3,200.6 871.7,200.9 872.1,201.2 872.5,201.4 872.9,201.7 873.3,202.0 873.7,202.3 874.1,202.5 874.5,202.8 874.9,203.1 875.3,203.3 875.7,203.6 876.1,203.9 876.5,204.2 876.9,204.4 877.3,204.7 877.7,205.0 878.1,205.2 878.5,205.5 878.9,205.7 879.2,206.0 879.6,206.3 880.0,206.5 880.4,206.8 880.8,207.0 881.2,207.3 881.6,207.6 882.0,207.8 882.4,208.1 882.8,208.3 883.2,208.6 883.6,208.8 884.0,209.1 884.4,209.3 884.8,209.5 885.2,209.8 885.6,210.0 886.0,210.3 886.4,210.5 886.8,210.7 887.2,211.0" stroke="#ffff11" stroke-width="1.3"/>
<polyline points="489.6,279.9 490.0,279.6 490.4,279.3 490.8,279.1 491.2,278.8 491.6,278.5 492.0,278.2 492.4,277.9 492.8,277.7 493.2,277.4 493.6,277.1 494.0,276.8 494.4,276.5 494.8,276.3 495.2,276.0 495.6,275.7 496.0,275.4 496.4,275.2 496.8,274.9 497.2,274.6 497.6,274.3 497.9,274.1 498.3,273.8 498.7,273.5 499.1,273.2 499.5,273.0 499.9,272.7 500.3,272.4 500.7,272.1 501.1,271.9 501.5,271.6 501.9,271.3 502.3,271.1 502.7,270.8 503.1,270.5 503.5,270.3 503.9,270.0 504.3,269.8 504.7,269.5 505.1,269.2 505.5,269.0 505.9,268.7 506.3,268.5 506.7,268.2 507.1,267.9 507.5,267.7 507.9,267.4 508.3,267.2 508.7,266.9 509.1,266.7 509.5,266.4 509.9,266.2 510.3,266.0 510.7,265.7 511.1,265.5 511.5,265.2 511.9,265.0 512.3,264.8 512.7,264.5 513.1,264.3 513.5,264.1 513.9,263.8 514.3,263.6 514.6,263.4 515.0,263.1 515.4,262.9 515.8,262.7 516.2,262.5 516.6,262.3 517.0,262.0 517.4,261.8 517.8,261.6 518.2,261.4 518.6,261.2 519.0,261.0 519.4,260.8 519.8,260.6 520.2,260.4 520.6,260.2 521.0,260.0 521.4,259.8 521.8,259.6 522.2,259.4 522.6,259.2 523.0,259.0 523.4,258.8 523.8,258.6 524.2,258.5 524.6,258.3 525.0,258.1 525.4,257.9 525.8,257.7 526.2,257.6 526.6,257.4 527.0,257.2 527.4,257.1 527.8,256.9 528.2,256.8 528.6,256.6 529.0,256.4 529.4,256.3 529.8,256.1 530.2,256.0 530.6,255.8 531.0,255.7 531.3,255.6 531.7,255.4 532.1,255.3 532.5,255.2 532.9,255.0 533.3,254.9 533.7,254.8 534.1,254.6 534.5,254.5 534.9,254.4 535.3,254.3 535.7,254.2 536.1,254.1 536.5,254.0 536.9,253.8 537.3,253.7 537.7,253.6 538.1,253.5 538.5,253.5 538.9,253.4 539.3,253.3 539.7,253.2 540.1,253.1 540.5,253.0 540.9,252.9 541.3,252.9 541.7,252.8 542.1,252.7 542.5,252.6 542.9,252.6 543.3,252.5 543.7,252.5 544.1,252.4 544.5,252.3 544.9,252.3 545.3,252.2 545.7,252.2 546.1,252.2 546.5,252.1 546.9,252.1 547.3,252.0 547.6,252.0 548.0,252.0 548.4,252.0 548.8,251.9 549.2,251.9 549.6,251.9 550.0,251.9 550.4,251.9 550.8,251.9 551.2,251.8 551.6,251.8 552.0,251.8 552.4,251.8 552.8,251.8 553.2,251.9 553.6,251.9 554.0,251.9 554.4,251.9 554.8,251.9 555.2,251.9 555.6,252.0 556.0,252.0 556.4,252.0 556.8,252.0 557.2,252.1 557.6,252.1 558.0,252.2 558.4,252.2 558.8,252.2 559.2,252.3 559.6,252.3 560.0,252.4 560.4,252.5 560.8,252.5 561.2,252.6 561.6,252.6 562.0,252.7 562.4,252.8 562.8,252.9 563.2,252.9 563.6,253.0 564.0,253.1 564.3,253.2 564.7,253.3 565.1,253.3 565.5,253.4 565.9,253.5 566.3,253.6 566.7,253.7 567.1,253.8 567.5,253.9 567.9,254.0 568.3,254.2 568.7,254.3 569.1,254.4 569.5,254.5 569.9,254.6 570.3,254.7 570.7,254.9 571.1,255.0 571.5,255.1 571.9,255.3 572.3,255.4 572.7,255.5 573.1,255.7 573.5,255.8 573.9,256.0 574.3,256.1 574.7,256.3 575.1,256.4 575.5,256.6 575.9,256.7 576.3,256.9 576.7,257.0 577.1,257.2 577.5,257.4 577.9,257.5 578.3,257.7 578.7,257.9 579.1,258.1 579.5,258.2 579.9,258.4 580.3,258.6 580.7,258.8 581.0,259.0 581.4,259.2 581.8,259.4 582.2,259.5 582.6,259.7 583.0,259.9 583.4,260.1 583.8,260.3 584.2,260.5 584.6,260.7 585.0,260.9 585.4,261.2 585.8,261.4 586.2,261.6 586.6,261.8 587.0,262.0 587.4,262.2 587.8,262.4 588.2,262.7 588.6,262.9 589.0,263.1 589.4,263.3 589.8,263.6 590.2,263.8 590.6,264.0 591.0,264.3 591.4,264.5 591.8,264.7 592.2,265.0 592.6,265.2 593.0,265.4 593.4,265.7 593.8,265.9 594.2,266.2 594.6,266.4 595.0,266.7 595.4,266.9 595.8,267.2 596.2,267.4 596.6,267.7 597.0,267.9 597.3,268.2 597.7,268.4 598.1,268.7 598.5,268.9 598.9,269.2 599.3,269.5 599.7,269.7 600.1,270.0 600.5,270.2 600.9,270.5 601.3,270.8 601.7,271.0 602.1,271.3 602.5,271.6 602.9,271.8 603.3,272.1 603.7,272.4 604.1,272.6 604.5,272.9 604.9,273.2 605.3,273.5 605.7,273.7 606.1,274.0 606.5,274.3 606.9,274.6 607.3,274.8 607.7,275.1 608.1,275.4 608.5,275.7 608.9,275.9 609.3,276.2 609.7,276.5 610.1,276.8 610.5,277.1 610.9,277.3 611.3,277.6 611.7,277.9 612.1,278.2 612.5,278.5 612.9,278.7 613.3,279.0 613.7,279.3 614.0,279.6 614.4,279.9 614.8,280.1 615.2,280.4 615.6,280.7 616.0,281.0 616.4,281.3 616.8,281.5 617.2,281.8 617.6,282.1 618.0,282.4 618.4,282.7 618.8,282.9 619.2,283.2 619.6,283.5 620.0,283.8 620.4,284.0 620.8,284.3 621.2,284.6 621.6,284.9 622.0,285.2 622.4,285.4 622.8,285.7 623.2,286.0 623.6,286.3 624.0,286.5 624.4,286.8 624.8,287.1 625.2,287.3 625.6,287.6 626.0,287.9 626.4,288.1 626.8,288.4 627.2,288.7 627.6,289.0 628.0,289.2 628.4,289.5 628.8,289.7 629.2,290.0 629.6,290.3 630.0,290.5 630.4,290.8 630.7,291.0 631.1,291.3 631.5,291.6 631.9,291.8 632.3,292.1 632.7,292.3 633.1,292.6 633.5,292.8 633.9,293.1 634.3,293.3 634.7,293.6 635.1,293.8 635.5,294.0 635.9,294.3 636.3,294.5 636.7,294.8 637.1,295.0 637.5,295.2 637.9,295.5 638.3,295.7 638.7,295.9 639.1,296.2 639.5,296.4 639.9,296.6 640.3,296.8 640.7,297.1 641.1,297.3 641.5,297.5 641.9,297.7 642.3,297.9 642.7,298.2 643.1,298.4 643.5,298.6 643.9,298.8 644.3,299.0 644.7,299.2 645.1,299.4 645.5,299.6 645.9,299.8 646.3,300.0 646.7,300.2 647.0,300.4 647.4,300.6 647.8,300.8 648.2,301.0 648.6,301.1 649.0,301.3 649.4,301.5 649.8,301.7 650.2,301.9 650.6,302.0 651.0,302.2 651.4,302.4 651.8,302.5 652.2,302.7 652.6,302.9 653.0,303.0 653.4,303.2 653.8,303.3 654.2,303.5 654.6,303.6 655.0,303.8 655.4,303.9 655.8,304.1 656.2,304.2 656.6,304.4 657.0,304.5 657.4,304.6 657.8,304.8 658.2,304.9 658.6,305.0 659.0,305.1 659.4,305.3 659.8,305.4 660.2,305.5 660.6,305.6 661.0,305.7 661.4,305.8 661.8,305.9 662.2,306.0 662.6,306.1 663.0,306.2 663.4,306.3 663.7,306.4 664.1,306.5 664.5,306.6 664.9,306.7 665.3,306.8 665.7,306.8 666.1,306.9 666.5,307.0 666.9,307.1 667.3,307.1 667.7,307.2 668.1,307.3 668.5,307.3 668.9,307.4 669.3,307.4 669.7,307.5 670.1,307.5 670.5,307.6 670.9,307.6 671.3,307.7 671.7,307.7 672.1,307.8 672.5,307.8 672.9,307.8 673.3,307.8 673.7,307.9 674.1,307.9 674.5,307.9 674.9,307.9 675.3,307.9 675.7,307.9 676.1,308.0 676.5,308.0 676.9,308.0 677.3,308.0 677.7,308.0 678.1,307.9 678.5,307.9 678.9,307.9 679.3,307.9 679.7,307.9 680.1,307.9 680.4,307.9 680.8,307.8 681.2,307.8 681.6,307.8 682.0,307.7 682.4,307.7 682.8,307.7 683.2,307.6 683.6,307.6 684.0,307.5 684.4,307.5 684.8,307.4 685.2,307.4 685.6,307.3 686.0,307.2 686.4,307.2 686.8,307.1 687.2,307.0 687.6,307.0 688.0,306.9 688.4,306.8 688.8,306.7 689.2,306.6 689.6,306.6 690.0,306.5 690.4,306.4 690.8,306.3 691.2,306.2 691.6,306.1 692.0,306.0 692.4,305.9 692.8,305.8 693.2,305.7 693.6,305.5 694.0,305.4 694.4,305.3 694.8,305.2 695.2,305.1 695.6,304.9 696.0,304.8 696.4,304.7 696.7,304.6 697.1,304.4 697.5,304.3 697.9,304.1 698.3,304.0 698.7,303.9 699.1,303.7 699.5,303.6 699.9,303.4 700.3,303.3 700.7,303.1 701.1,302.9 701.5,302.8 701.9,302.6 702.3,302.4 702.7,302.3 703.1,302.1 703.5,301.9 703.9,301.8 704.3,301.6 704.7,301.4 705.1,301.2 705.5,301.0 705.9,300.9 706.3,300.7 706.7,300.5 707.1,300.3 707.5,300.1 707.9,299.9 708.3,299.7 708.7,299.5 709.1,299.3 709.5,299.1 709.9,298.9 710.3,298.7 710.7,298.5 711.1,298.3 711.5,298.0 711.9,297.8 712.3,297.6 712.7,297.4 713.1,297.2 713.4,297.0 713.8,296.7 714.2,296.5 714.6,296.3 715.0,296.0 715.4,295.8 715.8,295.6 716.2,295.4 716.6,295.1 717.0,294.9 717.4,294.6 717.8,294.4 718.2,294.2 718.6,293.9 719.0,293.7 719.4,293.4 719.8,293.2 720.2,292.9 720.6,292.7 721.0,292.4 721.4,292.2 721.8,291.9 722.2,291.7 722.6,291.4 723.0,291.2 723.4,290.9 723.8,290.7 724.2,290.4 724.6,290.1 725.0,289.9 725.4,289.6 725.8,289.3 726.2,289.1 726.6,288.8 727.0,288.5 727.4,288.3 727.8,288.0 728.2,287.7 728.6,287.5 729.0,287.2 729.4,286.9 729.8,286.7 730.1,286.4 730.5,286.1 730.9,285.8 731.3,285.6 731.7,285.3 732.1,285.0 732.5,284.7 732.9,284.5 733.3,284.2 733.7,283.9 734.1,283.6 734.5,283.3 734.9,283.1 735.3,282.8 735.7,282.5 736.1,282.2 736.5,282.0 736.9,281.7 737.3,281.4 737.7,281.1 738.1,280.8 738.5,280.6 738.9,280.3 739.3,280.0 739.7,279.7 740.1,279.4 740.5,279.1 740.9,278.9 741.3,278.6 741.7,278.3 742.1,278.0 742.5,277.7 742.9,277.5 743.3,277.2 743.7,276.9 744.1,276.6 744.5,276.4 744.9,276.1 745.3,275.8 745.7,275.5 746.1,275.2 746.4,275.0 746.8,274.7 747.2,274.4 747.6,274.1 748.0,273.9 748.4,273.6 748.8,273.3 749.2,273.0 749.6,272.8 750.0,272.5 750.4,272.2 750.8,272.0 751.2,271.7 751.6,271.4 752.0,271.2 752.4,270.9 752.8,270.6 753.2,270.4 753.6,270.1 754.0,269.8 754.4,269.6 754.8,269.3 755.2,269.1 755.6,268.8 756.0,268.5 756.4,268.3 756.8,268.0 757.2,267.8 757.6,267.5 758.0,267.3 758.4,267.0 758.8,266.8 759.2,266.5 759.6,266.3 760.0,266.0 760.4,265.8 760.8,265.6 761.2,265.3 761.6,265.1 762.0,264.8 762.4,264.6 762.8,264.4 763.1,264.1 763.5,263.9 763.9,263.7 764.3,263.4 764.7,263.2 765.1,263.0 765.5,262.8 765.9,262.5 766.3,262.3 766.7,262.1 767.1,261.9 767.5,261.7 767.9,261.5 768.3,261.3 768.7,261.0 769.1,260.8 769.5,260.6 769.9,260.4 770.3,260.2 770.7,260.0 771.1,259.8 771.5,259.6 771.9,259.4 772.3,259.3 772.7,259.1 773.1,258.9 773.5,258.7 773.9,258.5 774.3,258.3 774.7,258.2 775.1,258.0 775.5,257.8 775.9,257.6 776.3,257.5 776.7,257.3 777.1,257.1 777.5,257.0 777.9,256.8 778.3,256.6 778.7,256.5 779.1,256.3 779.5,256.2 779.8,256.0 780.2,255.9 780.6,255.7 781.0,255.6 781.4,255.5 781.8,255.3 782.2,255.2 782.6,255.1 783.0,254.9 783.4,254.8 783.8,254.7 784.2,254.6 784.6,254.4 785.0,254.3 785.4,254.2 785.8,254.1 786.2,254.0 786.6,253.9 787.0,253.8 787.4,253.7 787.8,253.6 788.2,253.5 788.6,253.4 789.0,253.3 789.4,253.2 789.8,253.1 790.2,253.0 790.6,253.0 791.0,252.9 791.4,252.8 791.8,252.7 792.2,252.7 792.6,252.6 793.0,252.5 793.4,252.5 793.8,252.4 794.2,252.4 794.6,252.3 795.0,252.3 795.4,252.2 795.8,252.2 796.1,252.1 796.5,252.1 796.9,252.1 797.3,252.0 797.7,252.0 798.1,252.0 798.5,251.9 798.9,251.9 799.3,251.9 799.7,251.9 800.1,251.9 800.5,251.9 800.9,251.8 801.3,251.8 801.7,251.8 802.1,251.8 802.5,251.8 802.9,251.8 803.3,251.9 803.7,251.9 804.1,251.9 804.5,251.9 804.9,251.9 805.3,251.9 805.7,252.0 806.1,252.0 806.5,252.0 806.9,252.1 807.3,252.1 807.7,252.1 808.1,252.2 808.5,252.2 808.9,252.3 809.3,252.3 809.7,252.4 810.1,252.4 810.5,252.5 810.9,252.6 811.3,252.6 811.7,252.7 812.1,252.8 812.5,252.8 812.8,252.9 813.2,253.0 813.6,253.1 814.0,253.1 814.4,253.2 814.8,253.3 815.2,253.4 815.6,253.5 816.0,253.6 816.4,253.7 816.8,253.8 817.2,253.9 817.6,254.0 818.0,254.1 818.4,254.2 818.8,254.3 819.2,254.5 819.6,254.6 820.0,254.7 820.4,254.8 820.8,255.0 821.2,255.1 821.6,255.2 822.0,255.4 822.4,255.5 822.8,255.6 823.2,255.8 823.6,255.9 824.0,256.1 824.4,256.2 824.8,256.4 825.2,256.5 825.6,256.7 826.0,256.8 826.4,257.0 826.8,257.2 827.2,257.3 827.6,257.5 828.0,257.7 828.4,257.8 828.8,258.0 829.2,258.2 829.5,258.4 829.9,258.5 830.3,258.7 830.7,258.9 831.1,259.1 831.5,259.3 831.9,259.5 832.3,259.7 832.7,259.9 833.1,260.1 833.5,260.3 833.9,260.5 834.3,260.7 834.7,260.9 835.1,261.1 835.5,261.3 835.9,261.5 836.3,261.7 836.7,261.9 837.1,262.2 837.5,262.4 837.9,262.6 838.3,262.8 838.7,263.0 839.1,263.3 839.5,263.5 839.9,263.7 840.3,263.9 840.7,264.2 841.1,264.4 841.5,264.6 841.9,264.9 842.3,265.1 842.7,265.4 843.1,265.6 843.5,265.8 843.9,266.1 844.3,266.3 844.7,266.6 845.1,266.8 845.5,267.1 845.8,267.3 846.2,267.6 846.6,267.8 847.0,268.1 847.4,268.3 847.8,268.6 848.2,268.8 848.6,269.1 849.0,269.4 849.4,269.6 849.8,269.9 850.2,270.2 850.6,270.4 851.0,270.7 851.4,270.9 851.8,271.2 852.2,271.5 852.6,271.7 853.0,272.0 853.4,272.3 853.8,272.6 854.2,272.8 854.6,273.1 855.0,273.4 855.4,273.6 855.8,273.9 856.2,274.2 856.6,274.5 857.0,274.7 857.4,275.0 857.8,275.3 858.2,275.6 858.6,275.9 859.0,276.1 859.4,276.4 859.8,276.7 860.2,277.0 860.6,277.2 861.0,277.5 861.4,277.8 861.8,278.1 862.2,278.4 862.5,278.6 862.9,278.9 863.3,279.2 863.7,279.5 864.1,279.8 864.5,280.0 864.9,280.3 865.3,280.6 865.7,280.9 866.1,281.2 866.5,281.4 866.9,281.7 867.3,282.0 867.7,282.3 868.1,282.6 868.5,282.8 868.9,283.1 869.3,283.4 869.7,283.7 870.1,284.0 870.5,284.2 870.9,284.5 871.3,284.8 871.7,285.1 872.1,285.3 872.5,285.6 872.9,285.9 873.3,286.2 873.7,286.4 874.1,286.7 874.5,287.0 874.9,287.3 875.3,287.5 875.7,287.8 876.1,288.1 876.5,288.3 876.9,288.6 877.3,288.9 877.7,289.1 878.1,289.4 878.5,289.7 878.9,289.9 879.2,290.2 879.6,290.4 880.0,290.7 880.4,291.0 880.8,291.2 881.2,291.5 881.6,291.7 882.0,292.0 882.4,292.2 882.8,292.5 883.2,292.7 883.6,293.0 884.0,293.2 884.4,293.5 884.8,293.7 885.2,294.0 885.6,294.2 886.0,294.5 886.4,294.7 886.8,294.9 887.2,295.2" stroke="#139fff" stroke-width="1.3"/>
<polyline points="489.6,364.1 490.0,363.8 490.4,363.5 490.8,363.2 491.2,363.0 491.6,362.7 492.0,362.4 492.4,362.1 492.8,361.8 493.2,361.6 493.6,361.3 494.0,361.0 494.4,360.7 494.8,360.4 495.2,360.2 495.6,359.9 496.0,359.6 496.4,359.3 496.8,359.1 497.2,358.8 497.6,358.5 497.9,358.2 498.3,358.0 498.7,357.7 499.1,357.4 499.5,357.1 499.9,356.9 500.3,356.6 500.7,356.3 501.1,356.1 501.5,355.8 501.9,355.5 502.3,355.3 502.7,355.0 503.1,354.7 503.5,354.5 503.9,354.2 504.3,353.9 504.7,353.7 505.1,353.4 505.5,353.2 505.9,352.9 506.3,352.6 506.7,352.4 507.1,352.1 507.5,351.9 507.9,351.6 508.3,351.4 508.7,351.1 509.1,350.9 509.5,350.6 509.9,350.4 510.3,350.1 510.7,349.9 511.1,349.7 511.5,349.4 511.9,349.2 512.3,348.9 512.7,348.7 513.1,348.5 513.5,348.2 513.9,348.0 514.3,347.8 514.6,347.5 515.0,347.3 515.4,347.1 515.8,346.9 516.2,346.7 516.6,346.4 517.0,346.2 517.4,346.0 517.8,345.8 518.2,345.6 518.6,345.4 519.0,345.2 519.4,345.0 519.8,344.7 520.2,344.5 520.6,344.3 521.0,344.1 521.4,344.0 521.8,343.8 522.2,343.6 522.6,343.4 523.0,343.2 523.4,343.0 523.8,342.8 524.2,342.6 524.6,342.5 525.0,342.3 525.4,342.1 525.8,341.9 526.2,341.8 526.6,341.6 527.0,341.4 527.4,341.3 527.8,341.1 528.2,340.9 528.6,340.8 529.0,340.6 529.4,340.5 529.8,340.3 530.2,340.2 530.6,340.0 531.0,339.9 531.3,339.7 531.7,339.6 532.1,339.5 532.5,339.3 532.9,339.2 533.3,339.1 533.7,338.9 534.1,338.8 534.5,338.7 534.9,338.6 535.3,338.5 535.7,338.4 536.1,338.2 536.5,338.1 536.9,338.0 537.3,337.9 537.7,337.8 538.1,337.7 538.5,337.6 538.9,337.5 539.3,337.5 539.7,337.4 540.1,337.3 540.5,337.2 540.9,337.1 541.3,337.0 541.7,337.0 542.1,336.9 542.5,336.8 542.9,336.8 543.3,336.7 543.7,336.6 544.1,336.6 544.5,336.5 544.9,336.5 545.3,336.4 545.7,336.4 546.1,336.3 546.5,336.3 546.9,336.3 547.3,336.2 547.6,336.2 548.0,336.2 548.4,336.1 548.8,336.1 549.2,336.1 549.6,336.1 550.0,336.1 550.4,336.0 550.8,336.0 551.2,336.0 551.6,336.0 552.0,336.0 552.4,336.0 552.8,336.0 553.2,336.0 553.6,336.0 554.0,336.1 554.4,336.1 554.8,336.1 555.2,336.1 555.6,336.1 556.0,336.2 556.4,336.2 556.8,336.2 557.2,336.3 557.6,336.3 558.0,336.3 558.4,336.4 558.8,336.4 559.2,336.5 559.6,336.5 560.0,336.6 560.4,336.6 560.8,336.7 561.2,336.8 561.6,336.8 562.0,336.9 562.4,337.0 562.8,337.0 563.2,337.1 563.6,337.2 564.0,337.3 564.3,337.4 564.7,337.4 565.1,337.5 565.5,337.6 565.9,337.7 566.3,337.8 566.7,337.9 567.1,338.0 567.5,338.1 567.9,338.2 568.3,338.3 568.7,338.4 569.1,338.6 569.5,338.7 569.9,338.8 570.3,338.9 570.7,339.1 571.1,339.2 571.5,339.3 571.9,339.4 572.3,339.6 572.7,339.7 573.1,339.9 573.5,340.0 573.9,340.1 574.3,340.3 574.7,340.4 575.1,340.6 575.5,340.8 575.9,340.9 576.3,341.1 576.7,341.2 577.1,341.4 577.5,341.6 577.9,341.7 578.3,341.9 578.7,342.1 579.1,342.2 579.5,342.4 579.9,342.6 580.3,342.8 580.7,343.0 581.0,343.2 581.4,343.3 581.8,343.5 582.2,343.7 582.6,343.9 583.0,344.1 583.4,344.3 583.8,344.5 584.2,344.7 584.6,344.9 585.0,345.1 585.4,345.3 585.8,345.5 586.2,345.8 586.6,346.0 587.0,346.2 587.4,346.4 587.8,346.6 588.2,346.8 588.6,347.1 589.0,347.3 589.4,347.5 589.8,347.7 590.2,348.0 590.6,348.2 591.0,348.4 591.4,348.7 591.8,348.9 592.2,349.1 592.6,349.4 593.0,349.6 593.4,349.9 593.8,350.1 594.2,350.3 594.6,350.6 595.0,350.8 595.4,351.1 595.8,351.3 596.2,351.6 596.6,351.8 597.0,352.1 597.3,352.3 597.7,352.6 598.1,352.9 598.5,353.1 598.9,353.4 599.3,353.6 599.7,353.9 600.1,354.2 600.5,354.4 600.9,354.7 601.3,354.9 601.7,355.2 602.1,355.5 602.5,355.7 602.9,356.0 603.3,356.3 603.7,356.6 604.1,356.8 604.5,357.1 604.9,357.4 605.3,357.6 605.7,357.9 606.1,358.2 606.5,358.5 606.9,358.7 607.3,359.0 607.7,359.3 608.1,359.6 608.5,359.8 608.9,360.1 609.3,360.4 609.7,360.7 610.1,361.0 610.5,361.2 610.9,361.5 611.3,361.8 611.7,362.1 612.1,362.4 612.5,362.6 612.9,362.9 613.3,363.2 613.7,363.5 614.0,363.8 614.4,364.0 614.8,364.3 615.2,364.6 615.6,364.9 616.0,365.2 616.4,365.4 616.8,365.7 617.2,366.0 617.6,366.3 618.0,366.6 618.4,366.8 618.8,367.1 619.2,367.4 619.6,367.7 620.0,368.0 620.4,368.2 620.8,368.5 621.2,368.8 621.6,369.1 622.0,369.3 622.4,369.6 622.8,369.9 623.2,370.2 623.6,370.4 624.0,370.7 624.4,371.0 624.8,371.3 625.2,371.5 625.6,371.8 626.0,372.1 626.4,372.3 626.8,372.6 627.2,372.9 627.6,373.1 628.0,373.4 628.4,373.7 628.8,373.9 629.2,374.2 629.6,374.4 630.0,374.7 630.4,375.0 630.7,375.2 631.1,375.5 631.5,375.7 631.9,376.0 632.3,376.2 632.7,376.5 633.1,376.7 633.5,377.0 633.9,377.2 634.3,377.5 634.7,377.7 635.1,378.0 635.5,378.2 635.9,378.5 636.3,378.7 636.7,378.9 637.1,379.2 637.5,379.4 637.9,379.7 638.3,379.9 638.7,380.1 639.1,380.3 639.5,380.6 639.9,380.8 640.3,381.0 640.7,381.2 641.1,381.5 641.5,381.7 641.9,381.9 642.3,382.1 642.7,382.3 643.1,382.5 643.5,382.8 643.9,383.0 644.3,383.2 644.7,383.4 645.1,383.6 645.5,383.8 645.9,384.0 646.3,384.2 646.7,384.4 647.0,384.6 647.4,384.8 647.8,384.9 648.2,385.1 648.6,385.3 649.0,385.5 649.4,385.7 649.8,385.9 650.2,386.0 650.6,386.2 651.0,386.4 651.4,386.5 651.8,386.7 652.2,386.9 652.6,387.0 653.0,387.2 653.4,387.4 653.8,387.5 654.2,387.7 654.6,387.8 655.0,388.0 655.4,388.1 655.8,388.3 656.2,388.4 656.6,388.5 657.0,388.7 657.4,388.8 657.8,388.9 658.2,389.1 658.6,389.2 659.0,389.3 659.4,389.4 659.8,389.6 660.2,389.7 660.6,389.8 661.0,389.9 661.4,390.0 661.8,390.1 662.2,390.2 662.6,390.3 663.0,390.4 663.4,390.5 663.7,390.6 664.1,390.7 664.5,390.8 664.9,390.9 665.3,390.9 665.7,391.0 666.1,391.1 666.5,391.2 666.9,391.3 667.3,391.3 667.7,391.4 668.1,391.4 668.5,391.5 668.9,391.6 669.3,391.6 669.7,391.7 670.1,391.7 670.5,391.8 670.9,391.8 671.3,391.9 671.7,391.9 672.1,391.9 672.5,392.0 672.9,392.0 673.3,392.0 673.7,392.0 674.1,392.1 674.5,392.1 674.9,392.1 675.3,392.1 675.7,392.1 676.1,392.1 676.5,392.1 676.9,392.1 677.3,392.1 677.7,392.1 678.1,392.1 678.5,392.1 678.9,392.1 679.3,392.1 679.7,392.1 680.1,392.1 680.4,392.0 680.8,392.0 681.2,392.0 681.6,391.9 682.0,391.9 682.4,391.9 682.8,391.8 683.2,391.8 683.6,391.7 684.0,391.7 684.4,391.6 684.8,391.6 685.2,391.5 685.6,391.5 686.0,391.4 686.4,391.4 686.8,391.3 687.2,391.2 687.6,391.1 688.0,391.1 688.4,391.0 688.8,390.9 689.2,390.8 689.6,390.7 690.0,390.6 690.4,390.6 690.8,390.5 691.2,390.4 691.6,390.3 692.0,390.2 692.4,390.1 692.8,390.0 693.2,389.8 693.6,389.7 694.0,389.6 694.4,389.5 694.8,389.4 695.2,389.3 695.6,389.1 696.0,389.0 696.4,388.9 696.7,388.7 697.1,388.6 697.5,388.5 697.9,388.3 698.3,388.2 698.7,388.0 699.1,387.9 699.5,387.7 699.9,387.6 700.3,387.4 700.7,387.3 701.1,387.1 701.5,387.0 701.9,386.8 702.3,386.6 702.7,386.5 703.1,386.3 703.5,386.1 703.9,385.9 704.3,385.8 704.7,385.6 705.1,385.4 705.5,385.2 705.9,385.0 706.3,384.8 706.7,384.7 707.1,384.5 707.5,384.3 707.9,384.1 708.3,383.9 708.7,383.7 709.1,383.5 709.5,383.3 709.9,383.1 710.3,382.9 710.7,382.6 711.1,382.4 711.5,382.2 711.9,382.0 712.3,381.8 712.7,381.6 713.1,381.4 713.4,381.1 713.8,380.9 714.2,380.7 714.6,380.5 715.0,380.2 715.4,380.0 715.8,379.8 716.2,379.5 716.6,379.3 717.0,379.1 717.4,378.8 717.8,378.6 718.2,378.3 718.6,378.1 719.0,377.9 719.4,377.6 719.8,377.4 720.2,377.1 720.6,376.9 721.0,376.6 721.4,376.4 721.8,376.1 722.2,375.9 722.6,375.6 723.0,375.3 723.4,375.1 723.8,374.8 724.2,374.6 724.6,374.3 725.0,374.0 725.4,373.8 725.8,373.5 726.2,373.3 726.6,373.0 727.0,372.7 727.4,372.5 727.8,372.2 728.2,371.9 728.6,371.7 729.0,371.4 729.4,371.1 729.8,370.8 730.1,370.6 730.5,370.3 730.9,370.0 731.3,369.7 731.7,369.5 732.1,369.2 732.5,368.9 732.9,368.6 733.3,368.4 733.7,368.1 734.1,367.8 734.5,367.5 734.9,367.2 735.3,367.0 735.7,366.7 736.1,366.4 736.5,366.1 736.9,365.9 737.3,365.6 737.7,365.3 738.1,365.0 738.5,364.7 738.9,364.4 739.3,364.2 739.7,363.9 740.1,363.6 740.5,363.3 740.9,363.0 741.3,362.8 741.7,362.5 742.1,362.2 742.5,361.9 742.9,361.6 743.3,361.4 743.7,361.1 744.1,360.8 744.5,360.5 744.9,360.3 745.3,360.0 745.7,359.7 746.1,359.4 746.4,359.1 746.8,358.9 747.2,358.6 747.6,358.3 748.0,358.0 748.4,357.8 748.8,357.5 749.2,357.2 749.6,357.0 750.0,356.7 750.4,356.4 750.8,356.1 751.2,355.9 751.6,355.6 752.0,355.3 752.4,355.1 752.8,354.8 753.2,354.5 753.6,354.3 754.0,354.0 754.4,353.8 754.8,353.5 755.2,353.2 755.6,353.0 756.0,352.7 756.4,352.5 756.8,352.2 757.2,352.0 757.6,351.7 758.0,351.5 758.4,351.2 758.8,351.0 759.2,350.7 759.6,350.5 760.0,350.2 760.4,350.0 760.8,349.7 761.2,349.5 761.6,349.3 762.0,349.0 762.4,348.8 762.8,348.5 763.1,348.3 763.5,348.1 763.9,347.8 764.3,347.6 764.7,347.4 765.1,347.2 765.5,346.9 765.9,346.7 766.3,346.5 766.7,346.3 767.1,346.1 767.5,345.9 767.9,345.6 768.3,345.4 768.7,345.2 769.1,345.0 769.5,344.8 769.9,344.6 770.3,344.4 770.7,344.2 771.1,344.0 771.5,343.8 771.9,343.6 772.3,343.4 772.7,343.2 773.1,343.1 773.5,342.9 773.9,342.7 774.3,342.5 774.7,342.3 775.1,342.2 775.5,342.0 775.9,341.8 776.3,341.6 776.7,341.5 777.1,341.3 777.5,341.1 777.9,341.0 778.3,340.8 778.7,340.7 779.1,340.5 779.5,340.4 779.8,340.2 780.2,340.1 780.6,339.9 781.0,339.8 781.4,339.6 781.8,339.5 782.2,339.4 782.6,339.2 783.0,339.1 783.4,339.0 783.8,338.9 784.2,338.7 784.6,338.6 785.0,338.5 785.4,338.4 785.8,338.3 786.2,338.2 786.6,338.1 787.0,338.0 787.4,337.9 787.8,337.8 788.2,337.7 788.6,337.6 789.0,337.5 789.4,337.4 789.8,337.3 790.2,337.2 790.6,337.1 791.0,337.1 791.4,337.0 791.8,336.9 792.2,336.9 792.6,336.8 793.0,336.7 793.4,336.7 793.8,336.6 794.2,336.5 794.6,336.5 795.0,336.4 795.4,336.4 795.8,336.4 796.1,336.3 796.5,336.3 796.9,336.2 797.3,336.2 797.7,336.2 798.1,336.1 798.5,336.1 798.9,336.1 799.3,336.1 799.7,336.1 800.1,336.0 800.5,336.0 800.9,336.0 801.3,336.0 801.7,336.0 802.1,336.0 802.5,336.0 802.9,336.0 803.3,336.0 803.7,336.0 804.1,336.1 804.5,336.1 804.9,336.1 805.3,336.1 805.7,336.1 806.1,336.2 806.5,336.2 806.9,336.2 807.3,336.3 807.7,336.3 808.1,336.4 808.5,336.4 808.9,336.5 809.3,336.5 809.7,336.6 810.1,336.6 810.5,336.7 810.9,336.7 811.3,336.8 811.7,336.9 812.1,336.9 812.5,337.0 812.8,337.1 813.2,337.2 813.6,337.2 814.0,337.3 814.4,337.4 814.8,337.5 815.2,337.6 815.6,337.7 816.0,337.8 816.4,337.9 816.8,338.0 817.2,338.1 817.6,338.2 818.0,338.3 818.4,338.4 818.8,338.5 819.2,338.6 819.6,338.8 820.0,338.9 820.4,339.0 820.8,339.1 821.2,339.3 821.6,339.4 822.0,339.5 822.4,339.7 822.8,339.8 823.2,340.0 823.6,340.1 824.0,340.2 824.4,340.4 824.8,340.5 825.2,340.7 825.6,340.9 826.0,341.0 826.4,341.2 826.8,341.3 827.2,341.5 827.6,341.7 828.0,341.8 828.4,342.0 828.8,342.2 829.2,342.4 829.5,342.5 829.9,342.7 830.3,342.9 830.7,343.1 831.1,343.3 831.5,343.5 831.9,343.7 832.3,343.9 832.7,344.1 833.1,344.3 833.5,344.5 833.9,344.7 834.3,344.9 834.7,345.1 835.1,345.3 835.5,345.5 835.9,345.7 836.3,345.9 836.7,346.1 837.1,346.3 837.5,346.6 837.9,346.8 838.3,347.0 838.7,347.2 839.1,347.4 839.5,347.7 839.9,347.9 840.3,348.1 840.7,348.4 841.1,348.6 841.5,348.8 841.9,349.1 842.3,349.3 842.7,349.5 843.1,349.8 843.5,350.0 843.9,350.3 844.3,350.5 844.7,350.8 845.1,351.0 845.5,351.3 845.8,351.5 846.2,351.8 846.6,352.0 847.0,352.3 847.4,352.5 847.8,352.8 848.2,353.0 848.6,353.3 849.0,353.5 849.4,353.8 849.8,354.1 850.2,354.3 850.6,354.6 851.0,354.9 851.4,355.1 851.8,355.4 852.2,355.7 852.6,355.9 853.0,356.2 853.4,356.5 853.8,356.7 854.2,357.0 854.6,357.3 855.0,357.6 855.4,357.8 855.8,358.1 856.2,358.4 856.6,358.6 857.0,358.9 857.4,359.2 857.8,359.5 858.2,359.8 858.6,360.0 859.0,360.3 859.4,360.6 859.8,360.9 860.2,361.1 860.6,361.4 861.0,361.7 861.4,362.0 861.8,362.3 862.2,362.5 862.5,362.8 862.9,363.1 863.3,363.4 863.7,363.7 864.1,363.9 864.5,364.2 864.9,364.5 865.3,364.8 865.7,365.1 866.1,365.3 866.5,365.6 866.9,365.9 867.3,366.2 867.7,366.5 868.1,366.7 868.5,367.0 868.9,367.3 869.3,367.6 869.7,367.9 870.1,368.1 870.5,368.4 870.9,368.7 871.3,369.0 871.7,369.2 872.1,369.5 872.5,369.8 872.9,370.1 873.3,370.3 873.7,370.6 874.1,370.9 874.5,371.2 874.9,371.4 875.3,371.7 875.7,372.0 876.1,372.2 876.5,372.5 876.9,372.8 877.3,373.0 877.7,373.3 878.1,373.6 878.5,373.8 878.9,374.1 879.2,374.4 879.6,374.6 880.0,374.9 880.4,375.1 880.8,375.4 881.2,375.7 881.6,375.9 882.0,376.2 882.4,376.4 882.8,376.7 883.2,376.9 883.6,377.2 884.0,377.4 884.4,377.7 884.8,377.9 885.2,378.1 885.6,378.4 886.0,378.6 886.4,378.9 886.8,379.1 887.2,379.3" stroke="#ff6929" stroke-width="1.3"/>
<polyline points="489.6,188.8 490.0,192.7 490.4,191.4 490.8,190.4 491.2,192.5 491.6,190.7 492.0,190.4 492.4,193.6 492.8,187.8 493.2,188.4 493.6,190.5 494.0,189.3 494.4,187.7 494.8,188.9 495.2,188.6 495.6,190.7 496.0,186.5 496.4,187.1 496.8,186.5 497.2,189.8 497.6,183.3 497.9,185.9 498.3,186.7 498.7,181.7 499.1,185.5 499.5,188.0 499.9,185.7 500.3,189.1 500.7,182.3 501.1,184.9 501.5,185.2 501.9,181.4 502.3,186.5 502.7,181.9 503.1,186.8 503.5,183.8 503.9,184.6 504.3,179.1 504.7,178.2 505.1,182.1 505.5,179.5 505.9,181.2 506.3,179.5 506.7,181.9 507.1,183.5 507.5,183.4 507.9,178.9 508.3,174.9 508.7,178.6 509.1,179.9 509.5,174.9 509.9,177.9 510.3,177.9 510.7,177.4 511.1,177.9 511.5,178.0 511.9,180.0 512.3,175.9 512.7,176.9 513.1,174.1 513.5,177.0 513.9,179.7 514.3,176.0 514.6,172.2 515.0,176.1 515.4,176.8 515.8,177.2 516.2,176.7 516.6,175.0 517.0,176.5 517.4,171.1 517.8,174.3 518.2,173.4 518.6,170.5 519.0,170.2 519.4,173.4 519.8,172.1 520.2,171.1 520.6,172.7 521.0,175.6 521.4,170.7 521.8,170.0 522.2,170.7 522.6,173.2 523.0,171.6 523.4,172.2 523.8,171.4 524.2,168.1 524.6,167.4 525.0,169.0 525.4,169.0 525.8,168.6 526.2,169.8 526.6,169.7 527.0,170.7 527.4,169.4 527.8,164.6 528.2,167.2 528.6,169.4 529.0,169.5 529.4,170.2 529.8,167.6 530.2,167.4 530.6,170.9 531.0,166.9 531.3,168.9 531.7,164.8 532.1,167.1 532.5,164.0 532.9,168.1 533.3,167.6 533.7,166.4 534.1,164.7 534.5,165.6 534.9,169.0 535.3,166.1 535.7,166.3 536.1,167.1 536.5,167.4 536.9,162.6 537.3,166.7 537.7,167.5 538.1,164.5 538.5,165.4 538.9,165.7 539.3,163.9 539.7,164.4 540.1,164.6 540.5,163.3 540.9,164.6 541.3,166.2 541.7,165.7 542.1,165.9 542.5,164.4 542.9,166.9 543.3,168.3 543.7,164.5 544.1,167.2 544.5,168.4 544.9,163.7 545.3,165.8 545.7,163.4 546.1,165.4 546.5,166.5 546.9,166.7 547.3,165.2 547.6,164.7 548.0,165.8 548.4,164.7 548.8,167.1 549.2,164.1 549.6,167.6 550.0,164.4 550.4,162.7 550.8,161.9 551.2,160.7 551.6,167.1 552.0,162.5 552.4,161.6 552.8,162.1 553.2,165.8 553.6,163.2 554.0,160.4 554.4,167.0 554.8,163.1 555.2,161.9 555.6,165.5 556.0,163.0 556.4,166.3 556.8,165.8 557.2,165.9 557.6,163.9 558.0,164.5 558.4,162.5 558.8,166.3 559.2,164.7 559.6,162.6 560.0,163.5 560.4,167.2 560.8,163.4 561.2,165.7 561.6,164.1 562.0,164.3 562.4,162.6 562.8,164.8 563.2,168.7 563.6,167.9 564.0,163.8 564.3,165.9 564.7,163.2 565.1,165.0 565.5,167.1 565.9,163.6 566.3,167.4 566.7,169.9 567.1,162.0 567.5,169.9 567.9,165.0 568.3,164.5 568.7,166.2 569.1,169.9 569.5,164.7 569.9,169.6 570.3,169.6 570.7,167.8 571.1,165.6 571.5,166.7 571.9,165.8 572.3,168.4 572.7,168.0 573.1,170.1 573.5,168.6 573.9,167.0 574.3,168.9 574.7,167.5 575.1,169.7 575.5,169.9 575.9,168.8 576.3,169.4 576.7,168.1 577.1,169.0 577.5,166.1 577.9,170.2 578.3,170.3 578.7,172.1 579.1,170.2 579.5,169.1 579.9,172.1 580.3,170.9 580.7,169.6 581.0,171.4 581.4,172.4 581.8,169.6 582.2,171.5 582.6,171.1 583.0,169.8 583.4,170.1 583.8,173.2 584.2,173.7 584.6,172.4 585.0,173.4 585.4,177.1 585.8,171.0 586.2,173.7 586.6,172.5 587.0,176.5 587.4,171.9 587.8,175.8 588.2,175.0 588.6,177.8 589.0,175.6 589.4,176.0 589.8,176.1 590.2,175.1 590.6,176.1 591.0,174.5 591.4,177.6 591.8,178.8 592.2,177.2 592.6,176.1 593.0,175.2 593.4,176.2 593.8,181.6 594.2,177.6 594.6,175.7 595.0,178.7 595.4,180.1 595.8,178.7 596.2,180.6 596.6,178.6 597.0,180.1 597.3,177.6 597.7,179.6 598.1,182.3 598.5,179.9 598.9,179.5 599.3,182.7 599.7,182.7 600.1,186.7 600.5,180.6 600.9,183.8 601.3,187.1 601.7,186.7 602.1,183.9 602.5,182.2 602.9,184.2 603.3,183.3 603.7,186.7 604.1,187.5 604.5,183.3 604.9,184.4 605.3,185.7 605.7,183.4 606.1,188.0 606.5,187.3 606.9,184.7 607.3,183.4 607.7,187.3 608.1,184.3 608.5,189.0 608.9,187.5 609.3,188.7 609.7,191.8 610.1,188.4 610.5,187.4 610.9,189.8 611.3,189.9 611.7,187.3 612.1,192.8 612.5,193.6 612.9,192.2 613.3,193.5 613.7,188.8 614.0,191.1 614.4,193.7 614.8,193.5 615.2,187.0 615.6,194.1 616.0,194.6 616.4,192.8 616.8,192.5 617.2,193.6 617.6,196.1 618.0,196.8 618.4,193.7 618.8,195.2 619.2,198.6 619.6,193.4 620.0,194.4 620.4,196.7 620.8,197.0 621.2,196.3 621.6,198.4 622.0,200.0 622.4,197.0 622.8,200.7 623.2,197.4 623.6,201.3 624.0,198.9 624.4,199.2 624.8,195.7 625.2,201.6 625.6,202.6 626.0,201.3 626.4,202.5 626.8,201.7 627.2,200.0 627.6,199.6 628.0,198.1 628.4,203.1 628.8,196.7 629.2,198.3 629.6,202.8 630.0,207.2 630.4,203.1 630.7,203.1 631.1,208.0 631.5,203.6 631.9,204.4 632.3,205.8 632.7,203.3 633.1,202.8 633.5,205.9 633.9,204.8 634.3,206.8 634.7,207.3 635.1,205.8 635.5,205.2 635.9,207.6 636.3,211.0 636.7,205.8 637.1,210.3 637.5,207.2 637.9,204.2 638.3,207.9 638.7,210.4 639.1,211.2 639.5,206.3 639.9,208.8 640.3,208.0 640.7,207.4 641.1,209.6 641.5,210.3 641.9,211.8 642.3,216.2 642.7,213.3 643.1,210.7 643.5,211.1 643.9,210.2 644.3,211.4 644.7,211.1 645.1,210.0 645.5,213.5 645.9,212.5 646.3,215.3 646.7,210.5 647.0,212.5 647.4,211.8 647.8,209.9 648.2,211.0 648.6,213.4 649.0,211.9 649.4,216.5 649.8,213.0 650.2,213.8 650.6,217.4 651.0,211.7 651.4,215.9 651.8,213.4 652.2,215.7 652.6,213.1 653.0,212.6 653.4,217.0 653.8,218.5 654.2,215.9 654.6,214.1 655.0,216.7 655.4,217.3 655.8,215.3 656.2,221.8 656.6,217.8 657.0,219.4 657.4,216.2 657.8,218.4 658.2,219.2 658.6,217.9 659.0,220.2 659.4,217.5 659.8,218.9 660.2,218.4 660.6,219.2 661.0,216.1 661.4,218.2 661.8,217.1 662.2,217.3 662.6,219.9 663.0,217.3 663.4,217.8 663.7,218.0 664.1,219.5 664.5,219.6 664.9,217.3 665.3,214.7 665.7,220.7 666.1,218.0 666.5,219.9 666.9,217.7 667.3,218.5 667.7,217.3 668.1,224.9 668.5,220.7 668.9,221.5 669.3,219.8 669.7,221.1 670.1,221.0 670.5,218.4 670.9,216.1 671.3,225.4 671.7,220.5 672.1,219.3 672.5,219.9 672.9,220.7 673.3,222.7 673.7,221.9 674.1,218.6 674.5,218.0 674.9,219.9 675.3,221.7 675.7,219.9 676.1,220.6 676.5,219.1 676.9,219.9 677.3,221.4 677.7,219.8 678.1,222.4 678.5,218.5 678.9,217.8 679.3,222.4 679.7,219.2 680.1,222.0 680.4,217.9 680.8,218.2 681.2,220.4 681.6,218.0 682.0,220.8 682.4,221.1 682.8,220.9 683.2,220.1 683.6,220.4 684.0,219.4 684.4,220.8 684.8,218.1 685.2,217.5 685.6,220.4 686.0,222.2 686.4,217.9 686.8,217.0 687.2,219.5 687.6,221.7 688.0,218.5 688.4,216.0 688.8,222.6 689.2,217.9 689.6,219.3 690.0,220.3 690.4,217.6 690.8,221.0 691.2,217.8 691.6,215.7 692.0,217.8 692.4,219.8 692.8,221.4 693.2,220.4 693.6,221.3 694.0,214.5 694.4,218.0 694.8,219.4 695.2,219.8 695.6,219.2 696.0,217.7 696.4,219.4 696.7,213.4 697.1,218.1 697.5,218.0 697.9,215.7 698.3,213.3 698.7,213.4 699.1,216.8 699.5,215.2 699.9,215.3 700.3,214.4 700.7,214.8 701.1,217.0 701.5,217.4 701.9,214.4 702.3,216.9 702.7,211.8 703.1,214.2 703.5,216.1 703.9,214.6 704.3,214.8 704.7,213.8 705.1,211.5 705.5,216.0 705.9,216.7 706.3,212.2 706.7,213.0 707.1,212.1 707.5,211.4 707.9,212.4 708.3,210.3 708.7,213.4 709.1,211.3 709.5,212.9 709.9,213.3 710.3,209.6 710.7,209.5 711.1,214.2 711.5,212.4 711.9,209.4 712.3,207.7 712.7,210.9 713.1,209.7 713.4,211.9 713.8,204.0 714.2,207.7 714.6,206.7 715.0,206.9 715.4,206.2 715.8,206.6 716.2,208.2 716.6,205.8 717.0,206.9 717.4,204.3 717.8,208.0 718.2,207.4 718.6,204.8 719.0,203.3 719.4,205.3 719.8,206.8 720.2,205.3 720.6,205.8 721.0,200.9 721.4,202.6 721.8,201.6 722.2,203.3 722.6,204.7 723.0,201.0 723.4,199.8 723.8,201.7 724.2,202.6 724.6,200.2 725.0,202.8 725.4,200.3 725.8,202.9 726.2,203.2 726.6,199.9 727.0,200.1 727.4,196.7 727.8,200.7 728.2,199.9 728.6,201.9 729.0,203.0 729.4,202.6 729.8,197.9 730.1,200.9 730.5,196.1 730.9,195.2 731.3,198.3 731.7,194.2 732.1,196.7 732.5,194.7 732.9,197.1 733.3,194.5 733.7,197.9 734.1,194.6 734.5,196.4 734.9,195.5 735.3,193.7 735.7,194.3 736.1,194.5 736.5,192.7 736.9,192.3 737.3,196.3 737.7,192.2 738.1,191.7 738.5,194.2 738.9,191.7 739.3,194.8 739.7,189.1 740.1,192.1 740.5,191.5 740.9,188.7 741.3,191.0 741.7,189.3 742.1,192.3 742.5,191.0 742.9,192.4 743.3,189.8 743.7,187.1 744.1,188.4 744.5,186.8 744.9,190.3 745.3,189.7 745.7,188.6 746.1,186.3 746.4,186.4 746.8,186.9 747.2,185.4 747.6,186.6 748.0,186.1 748.4,183.2 748.8,186.6 749.2,184.9 749.6,181.8 750.0,184.5 750.4,183.0 750.8,185.3 751.2,180.0 751.6,188.0 752.0,185.6 752.4,185.1 752.8,179.6 753.2,181.8 753.6,182.8 754.0,184.5 754.4,181.0 754.8,181.3 755.2,182.6 755.6,183.9 756.0,182.9 756.4,180.0 756.8,179.6 757.2,179.8 757.6,180.0 758.0,182.9 758.4,179.1 758.8,181.0 759.2,178.6 759.6,177.5 760.0,179.5 760.4,180.0 760.8,175.8 761.2,176.8 761.6,178.5 762.0,182.9 762.4,176.9 762.8,175.3 763.1,174.1 763.5,177.4 763.9,177.1 764.3,176.5 764.7,173.7 765.1,177.5 765.5,175.2 765.9,176.5 766.3,174.0 766.7,177.3 767.1,173.3 767.5,174.8 767.9,174.1 768.3,172.4 768.7,171.0 769.1,176.3 769.5,170.8 769.9,171.5 770.3,173.0 770.7,169.4 771.1,171.6 771.5,169.3 771.9,172.8 772.3,173.1 772.7,168.8 773.1,166.8 773.5,169.6 773.9,168.9 774.3,171.4 774.7,172.9 775.1,170.6 775.5,167.0 775.9,173.5 776.3,170.6 776.7,173.2 777.1,169.1 777.5,167.4 777.9,171.4 778.3,169.6 778.7,166.1 779.1,168.7 779.5,170.8 779.8,170.8 780.2,172.0 780.6,166.4 781.0,169.2 781.4,165.6 781.8,165.8 782.2,168.7 782.6,168.3 783.0,165.6 783.4,166.7 783.8,166.3 784.2,170.0 784.6,164.9 785.0,168.2 785.4,170.8 785.8,167.5 786.2,165.3 786.6,161.9 787.0,166.7 787.4,168.5 787.8,161.6 788.2,165.3 788.6,166.1 789.0,167.6 789.4,167.4 789.8,162.4 790.2,165.7 790.6,166.2 791.0,166.1 791.4,161.9 791.8,166.1 792.2,163.6 792.6,164.3 793.0,164.2 793.4,166.4 793.8,163.3 794.2,161.4 794.6,164.6 795.0,166.2 795.4,166.9 795.8,164.0 796.1,164.8 796.5,164.5 796.9,164.2 797.3,167.1 797.7,162.6 798.1,163.7 798.5,164.3 798.9,163.6 799.3,162.3 799.7,163.9 800.1,165.7 800.5,161.7 800.9,164.9 801.3,165.4 801.7,167.1 802.1,164.0 802.5,166.1 802.9,165.0 803.3,163.1 803.7,164.0 804.1,162.1 804.5,163.5 804.9,164.9 805.3,164.8 805.7,165.1 806.1,162.9 806.5,164.2 806.9,165.0 807.3,162.6 807.7,164.1 808.1,165.3 808.5,167.4 808.9,163.6 809.3,164.0 809.7,164.4 810.1,165.5 810.5,166.3 810.9,165.2 811.3,164.3 811.7,165.1 812.1,165.2 812.5,165.9 812.8,164.4 813.2,164.7 813.6,166.7 814.0,163.8 814.4,163.8 814.8,163.9 815.2,165.8 815.6,166.1 816.0,168.0 816.4,164.4 816.8,170.2 817.2,166.8 817.6,166.9 818.0,164.6 818.4,166.4 818.8,168.4 819.2,169.4 819.6,168.2 820.0,166.7 820.4,166.9 820.8,167.5 821.2,168.6 821.6,167.8 822.0,165.6 822.4,169.8 822.8,167.7 823.2,164.8 823.6,167.0 824.0,169.1 824.4,167.1 824.8,170.0 825.2,168.7 825.6,165.8 826.0,165.3 826.4,172.5 826.8,168.0 827.2,165.7 827.6,170.7 828.0,169.3 828.4,167.0 828.8,171.2 829.2,169.5 829.5,170.7 829.9,174.5 830.3,170.2 830.7,171.4 831.1,169.5 831.5,167.4 831.9,170.3 832.3,172.6 832.7,171.2 833.1,171.8 833.5,170.4 833.9,175.5 834.3,175.1 834.7,177.1 835.1,172.1 835.5,173.5 835.9,174.9 836.3,175.3 836.7,175.2 837.1,176.1 837.5,175.2 837.9,175.7 838.3,172.3 838.7,174.6 839.1,177.0 839.5,176.8 839.9,173.5 840.3,175.2 840.7,175.8 841.1,175.2 841.5,173.7 841.9,179.4 842.3,178.8 842.7,180.9 843.1,176.8 843.5,178.8 843.9,179.6 844.3,180.0 844.7,177.4 845.1,179.3 845.5,180.3 845.8,177.0 846.2,181.8 846.6,182.5 847.0,175.2 847.4,181.2 847.8,181.8 848.2,182.5 848.6,181.5 849.0,180.0 849.4,180.3 849.8,181.0 850.2,182.9 850.6,185.5 851.0,182.3 851.4,180.1 851.8,181.3 852.2,184.0 852.6,182.3 853.0,184.9 853.4,184.6 853.8,187.2 854.2,185.6 854.6,185.0 855.0,185.9 855.4,184.3 855.8,182.4 856.2,183.8 856.6,187.2 857.0,188.4 857.4,188.5 857.8,189.4 858.2,187.7 858.6,187.2 859.0,187.9 859.4,188.2 859.8,188.5 860.2,189.4 860.6,190.9 861.0,186.3 861.4,187.9 861.8,192.0 862.2,192.3 862.5,192.0 862.9,191.0 863.3,188.9 863.7,189.7 864.1,189.8 864.5,190.1 864.9,190.3 865.3,191.3 865.7,192.2 866.1,193.6 866.5,197.0 866.9,194.2 867.3,190.6 867.7,195.5 868.1,196.0 868.5,193.0 868.9,195.1 869.3,196.5 869.7,192.8 870.1,194.9 870.5,194.9 870.9,197.8 871.3,196.0 871.7,196.5 872.1,196.0 872.5,195.5 872.9,195.9 873.3,198.0 873.7,197.3 874.1,201.1 874.5,197.9 874.9,198.1 875.3,200.5 875.7,201.5 876.1,200.4 876.5,202.9 876.9,200.1 877.3,200.5 877.7,203.2 878.1,201.5 878.5,199.7 878.9,200.0 879.2,200.4 879.6,202.9 880.0,203.5 880.4,203.9 880.8,202.2 881.2,199.0 881.6,201.1 882.0,201.0 882.4,201.8 882.8,207.8 883.2,205.3 883.6,206.0 884.0,203.0 884.4,202.3 884.8,207.2 885.2,206.1 885.6,205.3 886.0,207.6 886.4,208.1 886.8,208.4 887.2,205.6" stroke="#64d413" stroke-width="1.3"/>
<polyline points="489.6,280.2 490.0,279.2 490.4,279.3 490.8,278.8 491.2,278.3 491.6,278.7 492.0,278.5 492.4,277.8 492.8,278.0 493.2,277.6 493.6,277.1 494.0,276.8 494.4,277.0 494.8,276.4 495.2,275.8 495.6,275.3 496.0,276.1 496.4,274.7 496.8,274.6 497.2,275.0 497.6,274.8 497.9,273.9 498.3,273.9 498.7,273.5 499.1,272.9 499.5,273.1 499.9,272.6 500.3,272.3 500.7,271.8 501.1,271.3 501.5,271.0 501.9,271.3 502.3,271.2 502.7,270.0 503.1,270.3 503.5,270.1 503.9,270.4 504.3,269.5 504.7,269.8 505.1,269.4 505.5,269.4 505.9,268.9 506.3,268.4 506.7,268.7 507.1,268.2 507.5,267.7 507.9,267.9 508.3,267.6 508.7,267.2 509.1,267.2 509.5,266.2 509.9,266.5 510.3,265.7 510.7,265.4 511.1,265.9 511.5,265.2 511.9,265.2 512.3,265.1 512.7,264.6 513.1,264.4 513.5,263.8 513.9,263.5 514.3,264.0 514.6,263.5 515.0,263.0 515.4,262.5 515.8,263.5 516.2,262.0 516.6,262.3 517.0,261.5 517.4,262.0 517.8,261.9 518.2,261.4 518.6,260.8 519.0,261.0 519.4,261.6 519.8,260.3 520.2,260.9 520.6,260.5 521.0,260.4 521.4,260.4 521.8,260.0 522.2,259.7 522.6,259.4 523.0,259.0 523.4,258.9 523.8,259.1 524.2,258.5 524.6,257.9 525.0,257.8 525.4,257.9 525.8,257.5 526.2,257.3 526.6,256.9 527.0,256.7 527.4,257.2 527.8,257.0 528.2,256.3 528.6,256.1 529.0,255.9 529.4,257.1 529.8,256.2 530.2,257.1 530.6,255.6 531.0,255.7 531.3,255.5 531.7,255.5 532.1,254.8 532.5,255.3 532.9,254.7 533.3,254.7 533.7,254.6 534.1,254.5 534.5,254.5 534.9,254.8 535.3,254.0 535.7,253.9 536.1,254.1 536.5,253.7 536.9,253.5 537.3,254.2 537.7,253.7 538.1,253.7 538.5,253.8 538.9,253.3 539.3,253.6 539.7,253.3 540.1,253.0 540.5,252.9 540.9,252.8 541.3,252.1 541.7,253.0 542.1,252.6 542.5,253.1 542.9,252.4 543.3,252.1 543.7,252.1 544.1,252.6 544.5,252.4 544.9,251.9 545.3,252.3 545.7,251.9 546.1,252.5 546.5,251.7 546.9,251.7 547.3,251.9 547.6,252.3 548.0,252.0 548.4,251.9 548.8,251.8 549.2,251.9 549.6,252.0 550.0,251.8 550.4,251.4 550.8,252.5 551.2,252.3 551.6,252.4 552.0,252.1 552.4,252.4 552.8,251.7 553.2,251.8 553.6,251.9 554.0,252.1 554.4,251.8 554.8,251.8 555.2,251.8 555.6,252.2 556.0,251.8 556.4,252.5 556.8,251.6 557.2,253.1 557.6,252.3 558.0,252.6 558.4,251.9 558.8,252.7 559.2,251.7 559.6,252.9 560.0,251.7 560.4,252.3 560.8,252.5 561.2,252.4 561.6,251.9 562.0,252.4 562.4,253.5 562.8,252.4 563.2,252.8 563.6,253.5 564.0,252.8 564.3,253.6 564.7,253.2 565.1,253.3 565.5,253.7 565.9,253.3 566.3,254.0 566.7,253.7 567.1,254.0 567.5,254.0 567.9,253.4 568.3,254.1 568.7,254.6 569.1,254.4 569.5,254.8 569.9,254.6 570.3,254.7 570.7,254.8 571.1,255.0 571.5,255.3 571.9,255.1 572.3,255.0 572.7,255.7 573.1,255.7 573.5,255.8 573.9,255.5 574.3,255.8 574.7,256.5 575.1,256.4 575.5,257.1 575.9,257.1 576.3,256.9 576.7,256.8 577.1,256.9 577.5,257.5 577.9,258.0 578.3,257.6 578.7,258.0 579.1,257.9 579.5,258.2 579.9,258.2 580.3,258.4 580.7,258.5 581.0,259.1 581.4,258.8 581.8,259.5 582.2,259.5 582.6,259.1 583.0,259.8 583.4,260.5 583.8,259.8 584.2,260.2 584.6,260.4 585.0,260.9 585.4,261.0 585.8,261.4 586.2,261.8 586.6,261.3 587.0,262.1 587.4,262.4 587.8,262.6 588.2,262.0 588.6,262.6 589.0,263.2 589.4,263.3 589.8,263.4 590.2,263.5 590.6,264.6 591.0,263.9 591.4,264.6 591.8,265.0 592.2,265.1 592.6,264.9 593.0,264.8 593.4,265.6 593.8,265.7 594.2,266.4 594.6,266.2 595.0,266.4 595.4,267.4 595.8,267.3 596.2,267.1 596.6,268.2 597.0,268.0 597.3,268.0 597.7,269.0 598.1,268.8 598.5,268.9 598.9,268.9 599.3,269.9 599.7,269.3 600.1,269.9 600.5,269.8 600.9,270.1 601.3,270.7 601.7,270.9 602.1,271.9 602.5,272.0 602.9,272.2 603.3,272.2 603.7,272.1 604.1,273.2 604.5,273.0 604.9,273.6 605.3,274.0 605.7,273.2 606.1,274.0 606.5,273.7 606.9,274.2 607.3,275.1 607.7,275.7 608.1,274.7 608.5,275.8 608.9,276.3 609.3,276.0 609.7,276.5 610.1,277.0 610.5,277.2 610.9,277.3 611.3,277.6 611.7,277.6 612.1,278.3 612.5,278.6 612.9,278.5 613.3,278.9 613.7,278.9 614.0,279.7 614.4,279.9 614.8,280.5 615.2,279.9 615.6,281.2 616.0,280.9 616.4,281.6 616.8,281.4 617.2,281.6 617.6,282.6 618.0,282.4 618.4,283.2 618.8,282.5 619.2,283.4 619.6,284.0 620.0,284.0 620.4,283.6 620.8,283.8 621.2,284.2 621.6,285.1 622.0,285.2 622.4,284.9 622.8,286.0 623.2,286.1 623.6,286.6 624.0,286.9 624.4,286.4 624.8,286.9 625.2,287.2 625.6,287.4 626.0,287.5 626.4,287.6 626.8,288.4 627.2,288.8 627.6,289.3 628.0,288.9 628.4,289.7 628.8,290.2 629.2,290.1 629.6,290.3 630.0,290.2 630.4,290.4 630.7,291.3 631.1,291.6 631.5,291.7 631.9,292.2 632.3,292.1 632.7,292.2 633.1,292.6 633.5,293.4 633.9,293.5 634.3,292.9 634.7,293.9 635.1,293.6 635.5,293.8 635.9,294.4 636.3,294.9 636.7,294.7 637.1,295.3 637.5,295.3 637.9,295.4 638.3,295.9 638.7,296.0 639.1,296.3 639.5,296.8 639.9,296.7 640.3,297.1 640.7,297.7 641.1,297.4 641.5,297.6 641.9,297.9 642.3,298.6 642.7,297.9 643.1,298.1 643.5,298.4 643.9,298.7 644.3,299.4 644.7,299.2 645.1,299.7 645.5,298.9 645.9,300.0 646.3,299.8 646.7,300.7 647.0,300.8 647.4,300.8 647.8,300.5 648.2,300.8 648.6,301.0 649.0,301.9 649.4,301.1 649.8,302.0 650.2,301.3 650.6,301.4 651.0,301.9 651.4,302.0 651.8,303.0 652.2,301.8 652.6,302.8 653.0,302.7 653.4,303.5 653.8,303.4 654.2,303.9 654.6,303.7 655.0,303.8 655.4,303.8 655.8,303.6 656.2,304.1 656.6,304.3 657.0,304.5 657.4,303.9 657.8,305.0 658.2,304.5 658.6,305.7 659.0,305.4 659.4,305.1 659.8,305.4 660.2,304.5 660.6,304.7 661.0,306.2 661.4,306.2 661.8,306.0 662.2,305.5 662.6,305.8 663.0,306.1 663.4,306.8 663.7,306.7 664.1,307.4 664.5,307.1 664.9,306.5 665.3,306.5 665.7,307.3 666.1,306.9 666.5,306.5 666.9,307.0 667.3,307.2 667.7,307.0 668.1,307.1 668.5,307.3 668.9,307.6 669.3,307.6 669.7,307.5 670.1,307.7 670.5,307.1 670.9,307.3 671.3,307.3 671.7,307.0 672.1,307.2 672.5,307.3 672.9,307.7 673.3,307.9 673.7,307.1 674.1,308.1 674.5,308.1 674.9,308.2 675.3,307.9 675.7,307.8 676.1,307.6 676.5,308.0 676.9,308.5 677.3,307.9 677.7,307.6 678.1,307.9 678.5,308.0 678.9,307.7 679.3,307.4 679.7,307.9 680.1,308.4 680.4,308.0 680.8,307.9 681.2,308.4 681.6,307.5 682.0,308.0 682.4,307.5 682.8,307.6 683.2,307.7 683.6,307.0 684.0,307.7 684.4,307.7 684.8,307.3 685.2,307.1 685.6,307.3 686.0,307.6 686.4,306.9 686.8,306.9 687.2,306.3 687.6,307.0 688.0,306.8 688.4,307.0 688.8,307.2 689.2,306.6 689.6,306.3 690.0,306.8 690.4,306.6 690.8,306.7 691.2,305.7 691.6,306.3 692.0,305.8 692.4,306.2 692.8,305.7 693.2,305.9 693.6,306.3 694.0,305.4 694.4,305.1 694.8,305.9 695.2,305.1 695.6,305.1 696.0,305.2 696.4,304.8 696.7,305.2 697.1,304.3 697.5,303.9 697.9,304.6 698.3,304.0 698.7,303.4 699.1,303.7 699.5,303.7 699.9,303.7 700.3,303.2 700.7,303.1 701.1,302.7 701.5,303.3 701.9,302.3 702.3,302.6 702.7,302.1 703.1,302.4 703.5,302.4 703.9,302.0 704.3,301.9 704.7,301.5 705.1,301.0 705.5,300.7 705.9,300.8 706.3,300.8 706.7,300.6 707.1,300.1 707.5,299.7 707.9,300.0 708.3,299.7 708.7,299.8 709.1,299.2 709.5,298.8 709.9,299.9 710.3,298.6 710.7,298.7 711.1,299.0 711.5,297.9 711.9,297.9 712.3,297.5 712.7,297.9 713.1,296.5 713.4,296.9 713.8,296.8 714.2,296.0 714.6,296.1 715.0,295.8 715.4,295.4 715.8,296.3 716.2,294.8 716.6,295.2 717.0,294.8 717.4,294.3 717.8,294.6 718.2,294.1 718.6,293.7 719.0,293.7 719.4,293.3 719.8,293.7 720.2,293.3 720.6,293.1 721.0,292.3 721.4,290.9 721.8,291.8 722.2,291.7 722.6,291.4 723.0,290.8 723.4,290.7 723.8,291.0 724.2,290.0 724.6,290.1 725.0,289.6 725.4,290.3 725.8,289.9 726.2,288.9 726.6,289.4 727.0,288.4 727.4,288.2 727.8,288.0 728.2,287.6 728.6,287.4 729.0,287.0 729.4,287.1 729.8,286.7 730.1,285.4 730.5,285.7 730.9,285.6 731.3,285.4 731.7,285.5 732.1,284.9 732.5,284.8 732.9,284.1 733.3,284.5 733.7,284.7 734.1,283.8 734.5,283.1 734.9,282.2 735.3,282.4 735.7,282.8 736.1,282.3 736.5,282.3 736.9,281.7 737.3,281.7 737.7,281.7 738.1,280.7 738.5,280.5 738.9,280.3 739.3,279.9 739.7,279.0 740.1,279.4 740.5,279.3 740.9,278.6 741.3,279.1 741.7,278.1 742.1,278.3 742.5,278.0 742.9,277.4 743.3,276.6 743.7,277.2 744.1,276.3 744.5,276.2 744.9,276.5 745.3,275.5 745.7,275.8 746.1,275.7 746.4,275.2 746.8,274.9 747.2,274.2 747.6,274.4 748.0,273.4 748.4,273.5 748.8,273.6 749.2,273.3 749.6,272.7 750.0,273.2 750.4,273.0 750.8,272.3 751.2,271.5 751.6,271.4 752.0,271.2 752.4,271.0 752.8,271.4 753.2,270.5 753.6,270.7 754.0,269.6 754.4,269.6 754.8,269.3 755.2,268.9 755.6,268.7 756.0,268.5 756.4,268.2 756.8,268.2 757.2,268.2 757.6,267.4 758.0,266.8 758.4,266.7 758.8,266.8 759.2,266.3 759.6,266.4 760.0,265.9 760.4,266.0 760.8,265.5 761.2,264.6 761.6,264.8 762.0,264.3 762.4,264.9 762.8,264.6 763.1,264.1 763.5,263.7 763.9,263.7 764.3,263.1 764.7,263.4 765.1,262.5 765.5,262.4 765.9,262.9 766.3,262.1 766.7,262.2 767.1,261.5 767.5,261.9 767.9,261.4 768.3,261.1 768.7,262.0 769.1,261.5 769.5,260.6 769.9,260.5 770.3,259.9 770.7,260.0 771.1,260.3 771.5,259.5 771.9,259.7 772.3,259.3 772.7,259.2 773.1,258.8 773.5,259.2 773.9,258.9 774.3,259.1 774.7,257.4 775.1,258.3 775.5,258.1 775.9,258.0 776.3,257.7 776.7,257.4 777.1,256.9 777.5,256.9 777.9,256.7 778.3,256.8 778.7,256.5 779.1,255.9 779.5,256.2 779.8,255.9 780.2,256.6 780.6,255.6 781.0,255.5 781.4,255.0 781.8,256.3 782.2,255.2 782.6,255.1 783.0,254.9 783.4,255.0 783.8,254.6 784.2,254.3 784.6,254.4 785.0,254.4 785.4,254.3 785.8,254.2 786.2,254.0 786.6,254.1 787.0,254.5 787.4,253.2 787.8,254.2 788.2,253.5 788.6,253.8 789.0,253.4 789.4,253.5 789.8,253.2 790.2,253.3 790.6,253.4 791.0,252.8 791.4,252.4 791.8,252.6 792.2,252.6 792.6,253.0 793.0,252.6 793.4,252.3 793.8,252.7 794.2,252.1 794.6,252.3 795.0,252.2 795.4,252.4 795.8,252.4 796.1,252.1 796.5,252.0 796.9,252.0 797.3,252.4 797.7,252.3 798.1,252.0 798.5,252.6 798.9,251.6 799.3,251.8 799.7,251.9 800.1,252.1 800.5,251.6 800.9,252.0 801.3,251.2 801.7,251.7 802.1,252.4 802.5,251.6 802.9,252.0 803.3,252.1 803.7,252.0 804.1,251.9 804.5,251.8 804.9,251.7 805.3,251.8 805.7,252.2 806.1,252.5 806.5,252.3 806.9,252.0 807.3,251.8 807.7,251.6 808.1,252.7 808.5,252.2 808.9,252.4 809.3,252.5 809.7,252.4 810.1,252.5 810.5,252.6 810.9,252.8 811.3,252.5 811.7,252.3 812.1,252.2 812.5,253.0 812.8,253.3 813.2,253.1 813.6,253.4 814.0,252.8 814.4,253.5 814.8,253.3 815.2,253.9 815.6,253.6 816.0,253.6 816.4,253.2 816.8,254.1 817.2,253.8 817.6,254.7 818.0,254.5 818.4,254.5 818.8,254.5 819.2,254.3 819.6,254.4 820.0,255.3 820.4,254.7 820.8,255.4 821.2,254.5 821.6,255.1 822.0,255.3 822.4,255.6 822.8,255.7 823.2,255.8 823.6,256.2 824.0,255.8 824.4,256.1 824.8,256.1 825.2,256.6 825.6,256.5 826.0,257.1 826.4,255.8 826.8,257.4 827.2,257.5 827.6,257.2 828.0,257.3 828.4,258.1 828.8,258.6 829.2,258.7 829.5,258.7 829.9,258.8 830.3,258.8 830.7,258.6 831.1,258.8 831.5,259.5 831.9,259.3 832.3,259.4 832.7,259.4 833.1,260.1 833.5,260.5 833.9,260.2 834.3,260.2 834.7,261.1 835.1,260.5 835.5,260.7 835.9,261.6 836.3,262.3 836.7,262.2 837.1,262.3 837.5,262.2 837.9,263.2 838.3,262.0 838.7,262.3 839.1,263.5 839.5,264.1 839.9,263.8 840.3,263.8 840.7,263.7 841.1,264.2 841.5,264.7 841.9,265.6 842.3,265.0 842.7,265.1 843.1,265.7 843.5,265.8 843.9,266.0 844.3,266.4 844.7,267.0 845.1,266.7 845.5,267.6 845.8,266.9 846.2,267.9 846.6,267.7 847.0,268.4 847.4,268.2 847.8,268.7 848.2,268.7 848.6,269.4 849.0,269.9 849.4,269.7 849.8,270.0 850.2,270.7 850.6,270.7 851.0,271.3 851.4,270.9 851.8,271.4 852.2,271.5 852.6,270.9 853.0,272.0 853.4,272.2 853.8,272.4 854.2,272.9 854.6,273.3 855.0,273.1 855.4,273.3 855.8,274.9 856.2,274.3 856.6,274.6 857.0,275.0 857.4,274.6 857.8,275.5 858.2,275.3 858.6,276.1 859.0,276.3 859.4,276.2 859.8,277.0 860.2,277.0 860.6,277.6 861.0,277.8 861.4,277.6 861.8,277.9 862.2,278.8 862.5,279.1 862.9,278.1 863.3,279.4 863.7,279.8 864.1,279.6 864.5,280.3 864.9,280.5 865.3,280.3 865.7,280.6 866.1,281.3 866.5,281.0 866.9,281.8 867.3,282.1 867.7,282.3 868.1,282.7 868.5,282.7 868.9,283.1 869.3,283.7 869.7,283.6 870.1,284.2 870.5,284.5 870.9,284.6 871.3,284.5 871.7,285.0 872.1,284.9 872.5,285.1 872.9,285.9 873.3,286.4 873.7,286.7 874.1,286.6 874.5,286.7 874.9,286.7 875.3,288.0 875.7,287.5 876.1,287.7 876.5,287.5 876.9,288.6 877.3,288.9 877.7,289.7 878.1,289.7 878.5,290.1 878.9,290.3 879.2,290.5 879.6,291.0 880.0,290.8 880.4,290.9 880.8,291.0 881.2,291.5 881.6,291.4 882.0,291.6 882.4,292.8 882.8,292.6 883.2,293.2 883.6,293.3 884.0,293.2 884.4,293.5 884.8,293.3 885.2,293.3 885.6,294.1 886.0,294.5 886.4,294.8 886.8,295.0 887.2,295.0" stroke="#b746ff" stroke-width="1.2"/>
<polyline points="489.6,366.0 490.0,362.6 490.4,364.2 490.8,360.9 491.2,359.9 491.6,358.7 492.0,362.9 492.4,365.5 492.8,366.0 493.2,362.4 493.6,364.8 494.0,365.1 494.4,361.7 494.8,362.9 495.2,358.7 495.6,355.4 496.0,360.3 496.4,358.7 496.8,362.9 497.2,358.5 497.6,360.3 497.9,361.0 498.3,362.5 498.7,354.0 499.1,361.4 499.5,360.1 499.9,357.0 500.3,356.0 500.7,355.7 501.1,355.9 501.5,358.0 501.9,353.8 502.3,354.9 502.7,358.6 503.1,351.0 503.5,355.4 503.9,352.0 504.3,357.5 504.7,356.6 505.1,354.9 505.5,354.9 505.9,350.6 506.3,356.6 506.7,352.1 507.1,354.6 507.5,350.7 507.9,351.2 508.3,352.8 508.7,345.9 509.1,351.1 509.5,348.1 509.9,353.6 510.3,350.5 510.7,349.8 511.1,349.4 511.5,350.3 511.9,351.2 512.3,356.4 512.7,350.1 513.1,350.7 513.5,348.9 513.9,346.0 514.3,342.6 514.6,346.3 515.0,345.0 515.4,345.7 515.8,345.2 516.2,345.3 516.6,347.1 517.0,347.0 517.4,345.3 517.8,341.5 518.2,343.8 518.6,341.6 519.0,348.3 519.4,344.4 519.8,343.8 520.2,343.3 520.6,347.7 521.0,348.6 521.4,349.0 521.8,344.7 522.2,338.0 522.6,342.9 523.0,346.1 523.4,342.2 523.8,343.6 524.2,342.2 524.6,343.5 525.0,345.4 525.4,343.4 525.8,340.2 526.2,341.0 526.6,338.7 527.0,344.0 527.4,338.8 527.8,340.9 528.2,340.5 528.6,337.8 529.0,340.9 529.4,339.8 529.8,338.8 530.2,338.6 530.6,338.0 531.0,336.8 531.3,338.4 531.7,340.6 532.1,333.6 532.5,339.3 532.9,338.2 533.3,340.8 533.7,344.1 534.1,340.6 534.5,338.5 534.9,337.2 535.3,338.3 535.7,336.4 536.1,335.8 536.5,335.7 536.9,337.9 537.3,337.6 537.7,338.2 538.1,339.7 538.5,334.1 538.9,340.4 539.3,337.5 539.7,336.7 540.1,342.3 540.5,335.3 540.9,337.9 541.3,336.4 541.7,337.7 542.1,340.5 542.5,336.3 542.9,336.4 543.3,334.2 543.7,335.4 544.1,340.5 544.5,333.8 544.9,334.5 545.3,334.5 545.7,335.1 546.1,337.9 546.5,334.9 546.9,337.0 547.3,329.2 547.6,336.7 548.0,338.7 548.4,336.8 548.8,332.6 549.2,337.3 549.6,341.8 550.0,332.4 550.4,335.2 550.8,337.1 551.2,334.2 551.6,338.1 552.0,338.7 552.4,333.6 552.8,337.2 553.2,334.7 553.6,335.9 554.0,334.0 554.4,335.7 554.8,340.9 555.2,334.4 555.6,337.2 556.0,333.9 556.4,335.8 556.8,332.7 557.2,336.9 557.6,341.1 558.0,337.0 558.4,335.0 558.8,337.1 559.2,337.5 559.6,332.9 560.0,336.8 560.4,334.0 560.8,336.2 561.2,340.1 561.6,339.0 562.0,337.5 562.4,336.1 562.8,338.9 563.2,340.4 563.6,339.5 564.0,338.4 564.3,339.4 564.7,338.7 565.1,333.0 565.5,336.9 565.9,339.6 566.3,337.7 566.7,334.1 567.1,336.4 567.5,338.3 567.9,341.4 568.3,342.3 568.7,339.2 569.1,338.7 569.5,342.5 569.9,341.9 570.3,338.9 570.7,344.3 571.1,343.2 571.5,339.4 571.9,338.0 572.3,338.7 572.7,337.3 573.1,336.0 573.5,337.8 573.9,340.7 574.3,335.1 574.7,336.3 575.1,338.3 575.5,342.6 575.9,339.9 576.3,346.0 576.7,341.9 577.1,347.2 577.5,342.5 577.9,339.2 578.3,341.7 578.7,338.1 579.1,342.1 579.5,342.1 579.9,343.2 580.3,341.4 580.7,342.9 581.0,340.2 581.4,339.4 581.8,342.5 582.2,346.3 582.6,342.5 583.0,340.8 583.4,342.6 583.8,343.7 584.2,342.3 584.6,341.6 585.0,351.2 585.4,341.6 585.8,343.6 586.2,344.5 586.6,347.2 587.0,345.5 587.4,344.8 587.8,350.0 588.2,344.9 588.6,346.8 589.0,343.6 589.4,345.8 589.8,348.0 590.2,347.7 590.6,346.5 591.0,347.9 591.4,347.2 591.8,350.5 592.2,352.0 592.6,350.6 593.0,352.9 593.4,351.6 593.8,349.1 594.2,354.1 594.6,353.4 595.0,348.9 595.4,352.2 595.8,351.2 596.2,354.4 596.6,354.2 597.0,352.7 597.3,348.3 597.7,351.4 598.1,356.7 598.5,351.9 598.9,351.0 599.3,351.8 599.7,356.7 600.1,354.2 600.5,349.2 600.9,356.8 601.3,354.0 601.7,356.9 602.1,358.4 602.5,356.6 602.9,353.4 603.3,353.4 603.7,358.5 604.1,357.8 604.5,359.1 604.9,362.2 605.3,356.0 605.7,354.1 606.1,354.5 606.5,359.4 606.9,355.4 607.3,356.3 607.7,359.9 608.1,359.4 608.5,360.6 608.9,359.4 609.3,355.9 609.7,362.7 610.1,363.6 610.5,359.0 610.9,361.2 611.3,366.1 611.7,364.3 612.1,364.2 612.5,363.9 612.9,362.0 613.3,360.6 613.7,363.7 614.0,363.2 614.4,365.6 614.8,361.7 615.2,361.2 615.6,365.3 616.0,366.7 616.4,360.3 616.8,363.3 617.2,367.9 617.6,370.1 618.0,367.1 618.4,363.8 618.8,368.2 619.2,367.8 619.6,368.7 620.0,366.2 620.4,364.7 620.8,371.3 621.2,369.3 621.6,369.3 622.0,370.6 622.4,372.3 622.8,367.7 623.2,369.6 623.6,368.5 624.0,366.9 624.4,371.6 624.8,369.8 625.2,372.3 625.6,371.8 626.0,371.1 626.4,372.5 626.8,376.0 627.2,369.1 627.6,372.6 628.0,375.9 628.4,378.7 628.8,373.8 629.2,372.4 629.6,371.8 630.0,371.8 630.4,375.7 630.7,373.5 631.1,379.0 631.5,375.2 631.9,373.6 632.3,377.5 632.7,376.7 633.1,376.3 633.5,376.5 633.9,373.5 634.3,379.9 634.7,374.3 635.1,380.8 635.5,379.6 635.9,380.1 636.3,378.7 636.7,379.9 637.1,377.8 637.5,379.2 637.9,374.2 638.3,378.8 638.7,380.5 639.1,379.2 639.5,378.9 639.9,381.0 640.3,383.5 640.7,383.0 641.1,380.8 641.5,379.5 641.9,380.5 642.3,382.1 642.7,380.8 643.1,383.5 643.5,381.9 643.9,379.4 644.3,380.3 644.7,379.9 645.1,384.3 645.5,383.1 645.9,386.2 646.3,381.8 646.7,385.2 647.0,387.5 647.4,385.7 647.8,384.1 648.2,390.2 648.6,388.5 649.0,382.9 649.4,385.2 649.8,385.8 650.2,389.7 650.6,382.2 651.0,383.7 651.4,384.7 651.8,389.2 652.2,385.3 652.6,384.1 653.0,387.8 653.4,387.8 653.8,388.4 654.2,386.0 654.6,388.2 655.0,388.5 655.4,391.4 655.8,392.0 656.2,386.0 656.6,384.6 657.0,386.4 657.4,385.2 657.8,390.0 658.2,389.0 658.6,388.1 659.0,389.5 659.4,385.3 659.8,392.5 660.2,390.9 660.6,390.4 661.0,391.4 661.4,387.8 661.8,394.7 662.2,387.3 662.6,388.0 663.0,389.5 663.4,387.0 663.7,384.8 664.1,390.1 664.5,388.8 664.9,389.7 665.3,389.5 665.7,392.0 666.1,392.6 666.5,389.5 666.9,392.3 667.3,388.9 667.7,389.3 668.1,392.3 668.5,390.4 668.9,391.2 669.3,391.7 669.7,388.7 670.1,391.4 670.5,391.0 670.9,396.2 671.3,390.2 671.7,395.1 672.1,392.6 672.5,387.9 672.9,387.5 673.3,392.7 673.7,394.8 674.1,390.9 674.5,392.8 674.9,391.0 675.3,395.1 675.7,389.2 676.1,388.2 676.5,395.3 676.9,393.7 677.3,393.5 677.7,390.1 678.1,396.6 678.5,391.4 678.9,392.4 679.3,393.7 679.7,390.1 680.1,396.5 680.4,395.0 680.8,393.6 681.2,390.0 681.6,392.5 682.0,393.6 682.4,390.5 682.8,392.7 683.2,393.1 683.6,392.2 684.0,390.6 684.4,385.0 684.8,393.9 685.2,390.6 685.6,391.6 686.0,391.8 686.4,387.5 686.8,389.2 687.2,389.3 687.6,391.9 688.0,392.8 688.4,390.0 688.8,391.3 689.2,391.9 689.6,388.8 690.0,393.2 690.4,392.0 690.8,388.3 691.2,390.3 691.6,388.4 692.0,391.9 692.4,388.1 692.8,391.3 693.2,386.3 693.6,387.5 694.0,388.2 694.4,385.5 694.8,388.2 695.2,390.4 695.6,385.1 696.0,387.8 696.4,385.6 696.7,388.0 697.1,385.5 697.5,390.2 697.9,391.0 698.3,391.2 698.7,385.9 699.1,392.2 699.5,391.6 699.9,390.6 700.3,386.5 700.7,385.9 701.1,388.7 701.5,384.7 701.9,385.7 702.3,383.4 702.7,383.8 703.1,387.6 703.5,385.3 703.9,386.0 704.3,384.3 704.7,384.7 705.1,385.0 705.5,383.1 705.9,384.5 706.3,382.7 706.7,384.2 707.1,384.5 707.5,381.7 707.9,381.4 708.3,380.5 708.7,381.8 709.1,383.6 709.5,382.4 709.9,382.3 710.3,386.7 710.7,384.9 711.1,378.4 711.5,382.0 711.9,388.4 712.3,381.7 712.7,380.8 713.1,383.9 713.4,375.3 713.8,377.8 714.2,378.4 714.6,380.5 715.0,378.7 715.4,377.6 715.8,378.2 716.2,380.7 716.6,378.5 717.0,378.4 717.4,377.7 717.8,380.7 718.2,377.3 718.6,377.7 719.0,376.9 719.4,376.8 719.8,380.4 720.2,374.7 720.6,374.7 721.0,379.5 721.4,376.2 721.8,377.8 722.2,376.6 722.6,372.9 723.0,373.8 723.4,370.0 723.8,374.3 724.2,376.9 724.6,373.7 725.0,379.5 725.4,369.2 725.8,372.6 726.2,371.9 726.6,372.3 727.0,374.5 727.4,372.5 727.8,373.8 728.2,372.9 728.6,370.6 729.0,374.0 729.4,367.0 729.8,373.2 730.1,368.4 730.5,371.6 730.9,372.8 731.3,368.6 731.7,368.9 732.1,369.6 732.5,368.9 732.9,370.0 733.3,367.2 733.7,369.1 734.1,367.6 734.5,364.8 734.9,370.3 735.3,368.2 735.7,368.2 736.1,368.2 736.5,369.3 736.9,366.4 737.3,365.2 737.7,365.5 738.1,368.7 738.5,363.1 738.9,362.7 739.3,364.0 739.7,366.2 740.1,365.6 740.5,358.7 740.9,358.9 741.3,361.6 741.7,364.6 742.1,359.2 742.5,361.5 742.9,357.7 743.3,362.7 743.7,360.0 744.1,361.3 744.5,358.7 744.9,361.7 745.3,357.8 745.7,360.6 746.1,361.5 746.4,357.8 746.8,358.3 747.2,363.6 747.6,358.4 748.0,357.8 748.4,357.3 748.8,352.6 749.2,358.7 749.6,357.0 750.0,360.7 750.4,359.9 750.8,357.5 751.2,356.2 751.6,356.1 752.0,353.8 752.4,353.3 752.8,352.4 753.2,354.9 753.6,353.1 754.0,355.7 754.4,352.9 754.8,352.4 755.2,354.4 755.6,360.6 756.0,354.3 756.4,346.3 756.8,352.4 757.2,353.5 757.6,351.5 758.0,348.8 758.4,350.4 758.8,351.4 759.2,353.8 759.6,351.2 760.0,353.1 760.4,349.1 760.8,346.2 761.2,347.0 761.6,350.7 762.0,351.4 762.4,352.1 762.8,347.5 763.1,347.0 763.5,346.2 763.9,347.1 764.3,350.5 764.7,352.0 765.1,344.5 765.5,349.0 765.9,342.2 766.3,351.6 766.7,348.9 767.1,348.3 767.5,345.3 767.9,344.1 768.3,346.8 768.7,343.8 769.1,348.2 769.5,346.0 769.9,347.5 770.3,345.8 770.7,345.8 771.1,343.3 771.5,335.7 771.9,346.9 772.3,344.0 772.7,341.7 773.1,342.9 773.5,339.5 773.9,345.2 774.3,340.7 774.7,344.2 775.1,340.3 775.5,341.6 775.9,341.3 776.3,343.1 776.7,345.9 777.1,344.0 777.5,339.5 777.9,341.7 778.3,339.1 778.7,343.9 779.1,339.0 779.5,338.0 779.8,345.5 780.2,339.4 780.6,335.4 781.0,341.6 781.4,337.3 781.8,339.5 782.2,337.4 782.6,340.2 783.0,341.0 783.4,340.0 783.8,339.8 784.2,340.2 784.6,340.8 785.0,335.9 785.4,339.8 785.8,341.2 786.2,340.4 786.6,336.9 787.0,343.3 787.4,336.7 787.8,336.1 788.2,334.7 788.6,338.7 789.0,339.5 789.4,337.0 789.8,337.0 790.2,334.1 790.6,337.0 791.0,338.1 791.4,340.2 791.8,337.4 792.2,336.7 792.6,334.0 793.0,336.5 793.4,333.5 793.8,333.7 794.2,338.4 794.6,339.2 795.0,338.0 795.4,337.0 795.8,338.3 796.1,334.7 796.5,334.7 796.9,333.4 797.3,335.5 797.7,337.2 798.1,335.2 798.5,338.3 798.9,335.7 799.3,337.9 799.7,333.3 800.1,342.4 800.5,334.0 800.9,333.9 801.3,336.1 801.7,335.2 802.1,335.5 802.5,332.9 802.9,332.1 803.3,336.0 803.7,332.2 804.1,337.6 804.5,335.1 804.9,335.1 805.3,339.1 805.7,335.4 806.1,337.8 806.5,334.3 806.9,338.4 807.3,340.5 807.7,339.4 808.1,336.3 808.5,335.7 808.9,335.6 809.3,338.3 809.7,334.7 810.1,337.9 810.5,337.2 810.9,334.4 811.3,337.2 811.7,341.3 812.1,335.2 812.5,337.0 812.8,338.0 813.2,334.1 813.6,338.7 814.0,335.8 814.4,337.1 814.8,331.3 815.2,341.9 815.6,337.2 816.0,337.0 816.4,335.3 816.8,339.0 817.2,339.6 817.6,334.9 818.0,339.3 818.4,337.8 818.8,338.7 819.2,337.7 819.6,342.0 820.0,340.2 820.4,339.1 820.8,338.9 821.2,336.7 821.6,338.2 822.0,338.2 822.4,339.8 822.8,336.8 823.2,341.4 823.6,340.3 824.0,343.8 824.4,342.9 824.8,338.5 825.2,340.8 825.6,345.3 826.0,341.1 826.4,341.8 826.8,344.1 827.2,340.7 827.6,342.3 828.0,341.8 828.4,339.8 828.8,343.7 829.2,339.8 829.5,343.2 829.9,343.4 830.3,339.9 830.7,342.2 831.1,344.3 831.5,343.8 831.9,343.2 832.3,347.3 832.7,342.5 833.1,344.3 833.5,347.6 833.9,346.9 834.3,342.8 834.7,348.1 835.1,340.2 835.5,348.0 835.9,345.2 836.3,352.0 836.7,346.3 837.1,347.6 837.5,345.4 837.9,346.3 838.3,347.8 838.7,342.1 839.1,345.7 839.5,349.5 839.9,347.1 840.3,355.1 840.7,349.8 841.1,345.7 841.5,350.2 841.9,348.8 842.3,352.1 842.7,347.7 843.1,349.6 843.5,350.1 843.9,348.1 844.3,346.7 844.7,348.9 845.1,355.2 845.5,350.4 845.8,351.0 846.2,354.6 846.6,356.0 847.0,353.4 847.4,353.4 847.8,353.1 848.2,354.9 848.6,353.0 849.0,353.0 849.4,354.6 849.8,353.3 850.2,355.9 850.6,358.5 851.0,355.0 851.4,353.2 851.8,349.1 852.2,360.9 852.6,357.3 853.0,358.4 853.4,356.0 853.8,359.0 854.2,356.9 854.6,355.1 855.0,359.5 855.4,358.1 855.8,354.4 856.2,356.4 856.6,362.6 857.0,354.1 857.4,361.0 857.8,358.9 858.2,360.9 858.6,361.2 859.0,362.1 859.4,359.2 859.8,362.8 860.2,364.3 860.6,362.9 861.0,361.8 861.4,366.9 861.8,360.5 862.2,364.4 862.5,361.2 862.9,359.9 863.3,362.7 863.7,362.5 864.1,365.1 864.5,365.9 864.9,369.1 865.3,365.4 865.7,366.5 866.1,371.1 866.5,365.1 866.9,362.4 867.3,365.3 867.7,363.8 868.1,367.5 868.5,369.6 868.9,367.3 869.3,368.5 869.7,370.7 870.1,365.8 870.5,368.1 870.9,370.4 871.3,368.6 871.7,369.7 872.1,368.2 872.5,366.1 872.9,371.6 873.3,373.3 873.7,367.4 874.1,365.3 874.5,372.7 874.9,373.7 875.3,374.7 875.7,372.1 876.1,372.1 876.5,373.2 876.9,370.9 877.3,375.1 877.7,374.8 878.1,376.6 878.5,370.6 878.9,371.6 879.2,371.3 879.6,376.7 880.0,371.8 880.4,374.5 880.8,373.8 881.2,374.3 881.6,376.7 882.0,376.6 882.4,380.1 882.8,378.0 883.2,377.5 883.6,380.0 884.0,377.2 884.4,374.7 884.8,379.1 885.2,380.5 885.6,380.5 886.0,378.2 886.4,374.8 886.8,378.8 887.2,379.3" stroke="#0fffff" stroke-width="1.35"/>
</g>
<rect x="489.5" y="129.5" width="398" height="297" fill="none" stroke="#afafaf" stroke-width="1"/>
<path d="M569.5,426 v-4 M569.5,130 v4 M648.5,426 v-4 M648.5,130 v4 M728.5,426 v-4 M728.5,130 v4 M807.5,426 v-4 M807.5,130 v4 M490,420.5 h4 M887,420.5 h-4 M490,279.5 h4 M887,279.5 h-4 M490,139.5 h4 M887,139.5 h-4" stroke="#afafaf" stroke-width="1" fill="none"/>
<g fill="#afafaf" font-size="13.33px">
<text x="489.0" y="444.1" text-anchor="middle">0</text>
<text x="568.5" y="444.1" text-anchor="middle">2</text>
<text x="648.0" y="444.1" text-anchor="middle">4</text>
<text x="727.6" y="444.1" text-anchor="middle">6</text>
<text x="807.1" y="444.1" text-anchor="middle">8</text>
<text x="886.6" y="444.1" text-anchor="middle">10</text>
<text x="486.2" y="425.8" text-anchor="end">-5</text>
<text x="486.2" y="285.5" text-anchor="end">0</text>
<text x="486.2" y="145.2" text-anchor="end">5</text>
</g>
<text x="688.5" y="122.9" text-anchor="middle" fill="#afafaf" font-size="16.85px">True vs GPS (Velocity)</text>
<text transform="translate(470.2,278.0) rotate(-90)" text-anchor="middle" fill="#afafaf" font-size="16.67px">Meters per second</text>
<rect x="770.5" y="142.5" width="104" height="109" fill="#000" stroke="#cfcfcf" stroke-width="1"/>
<g font-size="13.33px" fill="#dcdcdc">
<path d="M775.6,159.5 H787.6 V149.5 H800.6" stroke="#ffff11" stroke-width="1.2" fill="none"/>
<text x="828.0" y="159.2">True X</text>
<path d="M775.6,177.0 H787.6 V167.0 H800.6" stroke="#139fff" stroke-width="1.2" fill="none"/>
<text x="828.0" y="176.7">True Y</text>
<path d="M775.6,194.5 H787.6 V184.5 H800.6" stroke="#ff6929" stroke-width="1.2" fill="none"/>
<text x="828.0" y="194.2">True Z</text>
<path d="M775.6,212.0 H787.6 V202.0 H800.6" stroke="#64d413" stroke-width="1.2" fill="none"/>
<text x="828.0" y="211.7">GPS X</text>
<path d="M775.6,229.5 H787.6 V219.5 H800.6" stroke="#b746ff" stroke-width="1.2" fill="none"/>
<text x="828.0" y="229.2">GPS Y</text>
<path d="M775.6,247.0 H787.6 V237.0 H800.6" stroke="#0fffff" stroke-width="1.2" fill="none"/>
<text x="828.0" y="246.7">GPS Z</text>
</g>
<rect x="886.5" y="104.5" width="15" height="11" fill="#282828" stroke="#fff" stroke-width="1"/>
<rect x="887" y="105.8" width="14" height="2" fill="#b4b4b4"/>
<path d="M894.0,115.0 v-6.6 M891.0,111.4 l3,-2.8 l3,2.8" stroke="#eee" stroke-width="1.6" fill="none"/>
</svg>
</div>
<div class="status" style="top:452px;">
<div class="ready">Ready</div>
<div class="panel" style="left:287px;width:91px;">Sample based</div>
<div class="panel" style="left:385px;width:61px;"><span class="tt">T=10.000</span></div>
</div>
</div>
<div class="win inactive" style="left:906px;width:454px;">
<div class="titlebar"><svg class="ticon" width="20" height="20" viewBox="0 0 20 20">
<defs><linearGradient id="mi" x1="0" y1="0" x2="0" y2="1"><stop offset="0" stop-color="#fdfdfd"/><stop offset="1" stop-color="#dcdcdc"/></linearGradient></defs>
<rect x="0.5" y="1" width="19" height="18.5" rx="1.5" fill="url(#mi)" stroke="#b9b9b9"/>
<rect x="0.6" y="0.9" width="18.8" height="2.3" fill="#5d89bc" stroke="#4d76a8" stroke-width="0.5"/>
<polygon points="2.8,11.2 9,7.6 11.2,5 9.4,9.5 7.6,13.2 5.6,12.8" fill="#3f8fd0"/>
<polygon points="5.6,12.8 7.6,13.2 9.6,9.4 8.8,12.6 7.4,14.4" fill="#2a5f9a"/>
<polygon points="11.4,4.4 12.6,5.4 14.2,9.6 16.4,14.2 14.6,13 12.8,11.6 10.6,15.4 8.6,16.6 7.4,14.4 9.2,11.6" fill="#ee8a1c"/>
<polygon points="11.4,4.4 10.4,8.6 8.8,12.6 7.4,14.4 8.4,16.4 9.6,13 10.8,9" fill="#b3371a"/>
<polygon points="12,6 13.4,10 12.4,12 11.2,9.6" fill="#f8c23a"/>
<polygon points="14.2,9.6 16.4,14.2 14.6,13 13.6,11" fill="#a8401c"/>
</svg><div class="ttext" style="transform:scaleX(0.919)">GPS Groundspeed</div>
<svg class="ctl" style="left:0" width="454" height="36" viewBox="0 1 454 36">
<path d="M301,18.5 h12" stroke="#8f8f8f" stroke-width="1"/>
<rect x="359.5" y="13.5" width="11" height="11" fill="none" stroke="#8f8f8f" stroke-width="1"/>
<path d="M418.2,13.2 l11.6,11.6 M429.8,13.2 l-11.6,11.6" stroke="#8f8f8f" stroke-width="1.1"/>
</svg></div>
<div class="menubar">
<span style="left:8.0px;transform:scaleX(0.978)">File</span>
<span style="left:47.2px;transform:scaleX(1.060)">Tools</span>
<span style="left:100.6px;transform:scaleX(0.993)">View</span>
<span style="left:149.0px;transform:scaleX(1.029)">Simulation</span>
<span style="left:236.7px;transform:scaleX(1.025)">Help</span>
<svg class="mcorner" width="10" height="10" viewBox="0 0 10 10"><path d="M0.4,4.2 Q1.8,2.4 3.4,2.9 L7,6.4" stroke="#000" stroke-width="2" fill="none"/><polygon points="9.4,8.9 9.4,2.9 3.1,8.9" fill="#000"/></svg>
</div>
<div class="tbline" style="top:67px;background:#a0a0a0"></div>
<div class="toolbar"><svg class="tbsvg" width="454" height="32" viewBox="0 69 454 32">
<defs>
<linearGradient id="gg" x1="0" y1="0" x2="0.6" y2="1"><stop offset="0" stop-color="#ececec"/><stop offset="1" stop-color="#a2a2a2"/></linearGradient>
<radialGradient id="pg" cx="0.33" cy="0.28" r="0.78"><stop offset="0" stop-color="#ffffff"/><stop offset="0.3" stop-color="#eef9dc"/><stop offset="0.6" stop-color="#b0de68"/><stop offset="1" stop-color="#6aa826"/></radialGradient>
<linearGradient id="bg1" x1="0" y1="0" x2="1" y2="0"><stop offset="0" stop-color="#d6e9f8"/><stop offset="1" stop-color="#6fa8dc"/></linearGradient>
<linearGradient id="bg2" x1="0" y1="0" x2="1" y2="1"><stop offset="0" stop-color="#8dbbe4"/><stop offset="1" stop-color="#d9eaf8"/></linearGradient>
<linearGradient id="wg" x1="0" y1="0" x2="1" y2="1"><stop offset="0" stop-color="#ffffff"/><stop offset="0.5" stop-color="#f4f4f4"/><stop offset="1" stop-color="#bdbdbd"/></linearGradient>
<linearGradient id="rg" x1="0" y1="0" x2="1" y2="1"><stop offset="0" stop-color="#b5d9f2"/><stop offset="1" stop-color="#6fb0e0"/></linearGradient>
</defs>
<polygon points="14.68,76.30 17.32,76.30 17.41,77.63 19.19,78.21 20.04,77.18 22.18,78.74 21.47,79.87 22.57,81.39 23.87,81.05 24.68,83.57 23.44,84.06 23.44,85.94 24.68,86.43 23.87,88.95 22.57,88.61 21.47,90.13 22.18,91.26 20.04,92.82 19.19,91.79 17.41,92.37 17.32,93.70 14.68,93.70 14.59,92.37 12.81,91.79 11.96,92.82 9.82,91.26 10.53,90.13 9.43,88.61 8.13,88.95 7.32,86.43 8.56,85.94 8.56,84.06 7.32,83.57 8.13,81.05 9.43,81.39 10.53,79.87 9.82,78.74 11.96,77.18 12.81,78.21 14.59,77.63" fill="url(#gg)" stroke="#6b6b6b" stroke-width="1" stroke-linejoin="round"/><circle cx="16.0" cy="85.0" r="3.4" fill="#fbfbfb" stroke="#4c4c4c" stroke-width="1.9"/>
<polygon points="33.7,82.9 40.5,82.9 37.1,86.5" fill="#222"/>
<rect x="46" y="72" width="1" height="27" fill="#a0a0a0"/>
<polygon points="56.8,82.6 67.2,75.6 67.2,89.6" fill="url(#bg2)" stroke="#4f88bf" stroke-width="1"/>
<rect x="69.8" y="75.4" width="2.2" height="8" fill="#c4dff5" stroke="#4f88bf" stroke-width="0.9"/>
<polygon points="67.78,80.71 70.02,80.71 70.04,81.84 71.46,82.42 72.27,81.64 73.86,83.23 73.08,84.04 73.66,85.46 74.79,85.48 74.79,87.72 73.66,87.74 73.08,89.16 73.86,89.97 72.27,91.56 71.46,90.78 70.04,91.36 70.02,92.49 67.78,92.49 67.76,91.36 66.34,90.78 65.53,91.56 63.94,89.97 64.72,89.16 64.14,87.74 63.01,87.72 63.01,85.48 64.14,85.46 64.72,84.04 63.94,83.23 65.53,81.64 66.34,82.42 67.76,81.84" fill="url(#gg)" stroke="#6b6b6b" stroke-width="1" stroke-linejoin="round"/><circle cx="68.9" cy="86.6" r="2.1" fill="#9db8d2" stroke="#3c3c3c" stroke-width="1.7"/>
<circle cx="93" cy="84" r="9.6" fill="url(#pg)" stroke="#4d7d18" stroke-width="1.3"/>
<polygon points="90.4,79.3 96.6,84 90.4,88.7" fill="#333"/>
<rect x="113.6" y="76.6" width="3" height="14.6" fill="url(#bg1)" stroke="#3f7fc0" stroke-width="1"/>
<polygon points="119.6,76.8 129,84 119.6,91.2" fill="url(#bg1)" stroke="#3f7fc0" stroke-width="1.1" stroke-linejoin="round"/>
<rect x="139.1" y="74.1" width="19.8" height="19.8" rx="7.4" fill="#ababab"/>
<rect x="145.3" y="80.2" width="7.3" height="7.4" fill="#8c8c8c"/>
<rect x="166" y="72" width="1" height="27" fill="#a0a0a0"/>
<path d="M186.5,79 h4.2 v4" stroke="#cc651a" stroke-width="1.5" fill="none"/>
<path d="M176,79.2 h2.4" stroke="#333" stroke-width="1.4" fill="none"/>
<rect x="177.2" y="75.3" width="9.8" height="8.1" rx="1" fill="#fbd48c"/><rect x="178.8" y="76.9" width="6.6" height="5" fill="#f3ad55" stroke="#d96a14" stroke-width="1.5"/>
<path d="M176,79.3 h2.6" stroke="#3a3a3a" stroke-width="1.4" fill="none"/>
<path d="M176.3,90.8 h3 M186,90.8 h4.7 v-3.6 M193.4,85.2 h2.6" stroke="#383838" stroke-width="1.35" fill="none"/>
<rect x="179" y="88.2" width="6.8" height="5" rx="0.8" fill="#fafafa" stroke="#6c6c6c" stroke-width="1.3"/>
<rect x="187.7" y="82.7" width="5.3" height="4.5" rx="2" fill="#fafafa" stroke="#858585" stroke-width="1.3"/>
<polygon points="203.7,82.9 210.5,82.9 207.1,86.5" fill="#222"/>
<rect x="216" y="72" width="1" height="27" fill="#a0a0a0"/>
<line x1="238.6" y1="88.2" x2="242.4" y2="91.5" stroke="#2b2b2b" stroke-width="4.2" stroke-linecap="square"/>
<circle cx="234" cy="83.2" r="6.8" fill="#f3f8fc" stroke="#777" stroke-width="1.4"/>
<path d="M231,83.2 h6 M234,80.2 v6" stroke="#111" stroke-width="1.6" fill="none"/>
<polygon points="253.7,82.9 260.5,82.9 257.1,86.5" fill="#222"/>
<rect x="266" y="72" width="1" height="27" fill="#a0a0a0"/>
<rect x="276.6" y="75.6" width="19" height="19" fill="url(#wg)" stroke="#333" stroke-width="1.3"/>
<path d="M286,77.5 v5" stroke="#7a7a7a" stroke-width="1.6" fill="none"/><path d="M282.4,80 L286,76.4 L289.6,80" stroke="#3c3c3c" stroke-width="2" fill="none"/>
<path d="M286,87.5 v5" stroke="#7a7a7a" stroke-width="1.6" fill="none"/><path d="M282.4,90 L286,93.6 L289.6,90" stroke="#3c3c3c" stroke-width="2" fill="none"/>
<polygon points="303.7,82.9 310.5,82.9 307.1,86.5" fill="#222"/>
<rect x="316" y="72" width="1" height="27" fill="#a0a0a0"/>
<path d="M326.2,91 H334.3 V75.7 H342.4" stroke="#303030" stroke-width="3.5" fill="none" stroke-linejoin="miter"/>
<polygon points="326.8,86.8 326.8,84.2 334.3,77.2 341.8,84.2 341.8,86.8 337.4,86.8 334.3,83.8 331.2,86.8" fill="#3a3a3a"/>
<polygon points="329,85.2 334.3,80.2 339.6,85.2 337.8,85.2 334.3,82 330.8,85.2" fill="#787878"/>
<path d="M327.4,91 H334.3 V75.7 H341.4" stroke="#8e8e8e" stroke-width="1.2" fill="none"/>
<rect x="352" y="72" width="1" height="27" fill="#a0a0a0"/>
<rect x="361.5" y="74.5" width="19" height="19" fill="url(#wg)" stroke="#6a6a6a" stroke-width="1"/>
<clipPath id="rc"><rect x="362" y="75" width="18" height="18"/></clipPath>
<polygon clip-path="url(#rc)" points="361.4,88.6 375.2,74.8 380.8,80.4 367,94" fill="url(#rg)" stroke="#4a7fb5" stroke-width="0.9"/>
<path d="M367.6,88.2 l1.8,1.8 M370.1,85.7 l1.8,1.8 M372.6,83.2 l1.8,1.8 M375.1,80.7 l1.8,1.8" stroke="#2f5f8f" stroke-width="0.9"/>
</svg></div>
<div class="tbline" style="top:100px;background:#a0a0a0"></div>
<div class="figure" style="top:103px;height:350px;">
<svg class="fig" width="453" height="350" viewBox="906 104 453 350">
<rect x="951" y="130" width="393" height="298" fill="#000"/>
<path d="M1030.5,130 V428 M1108.5,130 V428 M1186.5,130 V428 M1264.5,130 V428 M951,425.5 H1344 M951,371.5 H1344 M951,316.5 H1344 M951,261.5 H1344 M951,206.5 H1344 M951,152.5 H1344" stroke="#afafaf" stroke-opacity="0.40" stroke-width="1" fill="none"/>
<clipPath id="cp3"><rect x="951" y="130" width="393" height="298"/></clipPath>
<g clip-path="url(#cp3)" fill="none" stroke-linejoin="round">
<polyline points="951.8,311.8 952.2,299.0 952.6,295.7 953.0,302.3 953.4,298.4 953.8,302.0 954.1,290.5 954.5,284.9 954.9,290.9 955.3,288.8 955.7,291.1 956.1,295.1 956.5,295.0 956.9,291.1 957.3,286.1 957.7,285.9 958.1,277.2 958.5,278.1 958.8,271.4 959.2,275.6 959.6,282.0 960.0,278.3 960.4,289.9 960.8,264.4 961.2,280.0 961.6,277.5 962.0,259.9 962.4,280.2 962.8,275.7 963.1,270.4 963.5,273.1 963.9,267.0 964.3,264.8 964.7,260.7 965.1,265.1 965.5,258.1 965.9,264.5 966.3,256.4 966.7,251.1 967.1,271.5 967.4,259.3 967.8,255.1 968.2,269.3 968.6,276.9 969.0,250.9 969.4,256.8 969.8,245.2 970.2,250.0 970.6,248.9 971.0,250.3 971.4,245.9 971.8,252.3 972.1,248.3 972.5,237.6 972.9,244.2 973.3,237.6 973.7,240.3 974.1,241.7 974.5,245.3 974.9,230.9 975.3,242.2 975.7,232.3 976.1,245.6 976.4,231.0 976.8,229.2 977.2,235.8 977.6,242.0 978.0,230.2 978.4,227.3 978.8,231.0 979.2,231.1 979.6,218.4 980.0,225.0 980.4,226.3 980.7,216.1 981.1,221.5 981.5,225.6 981.9,213.1 982.3,221.3 982.7,210.9 983.1,221.8 983.5,213.6 983.9,206.0 984.3,210.9 984.7,209.7 985.1,209.2 985.4,205.4 985.8,210.2 986.2,206.7 986.6,210.9 987.0,194.2 987.4,214.1 987.8,200.7 988.2,213.3 988.6,201.3 989.0,194.8 989.4,211.8 989.7,190.1 990.1,209.4 990.5,207.6 990.9,198.5 991.3,208.3 991.7,192.3 992.1,195.2 992.5,218.2 992.9,208.0 993.3,202.2 993.7,193.2 994.0,203.5 994.4,200.3 994.8,189.9 995.2,201.2 995.6,191.1 996.0,202.8 996.4,184.8 996.8,181.2 997.2,199.6 997.6,208.0 998.0,202.5 998.4,182.6 998.7,193.4 999.1,181.0 999.5,198.1 999.9,194.7 1000.3,188.3 1000.7,179.2 1001.1,188.2 1001.5,193.7 1001.9,183.6 1002.3,184.8 1002.7,181.4 1003.0,186.1 1003.4,189.0 1003.8,183.9 1004.2,202.0 1004.6,181.5 1005.0,174.2 1005.4,178.9 1005.8,189.7 1006.2,193.7 1006.6,172.6 1007.0,185.7 1007.4,183.3 1007.7,180.0 1008.1,185.8 1008.5,181.0 1008.9,170.1 1009.3,184.6 1009.7,166.8 1010.1,177.9 1010.5,178.3 1010.9,173.6 1011.3,173.7 1011.7,172.7 1012.0,176.3 1012.4,184.6 1012.8,168.3 1013.2,181.4 1013.6,186.4 1014.0,173.7 1014.4,175.6 1014.8,180.6 1015.2,179.9 1015.6,176.2 1016.0,166.5 1016.3,181.2 1016.7,190.0 1017.1,185.1 1017.5,177.3 1017.9,182.7 1018.3,186.2 1018.7,176.2 1019.1,176.3 1019.5,183.4 1019.9,180.1 1020.3,187.1 1020.7,187.1 1021.0,185.4 1021.4,193.1 1021.8,181.0 1022.2,184.3 1022.6,187.8 1023.0,183.6 1023.4,183.8 1023.8,190.6 1024.2,189.8 1024.6,191.7 1025.0,176.3 1025.3,199.0 1025.7,187.7 1026.1,181.4 1026.5,195.9 1026.9,195.5 1027.3,196.1 1027.7,202.7 1028.1,181.3 1028.5,192.3 1028.9,199.3 1029.3,196.4 1029.6,191.1 1030.0,195.3 1030.4,200.1 1030.8,190.4 1031.2,201.2 1031.6,198.2 1032.0,194.7 1032.4,201.9 1032.8,196.6 1033.2,202.5 1033.6,178.9 1034.0,202.2 1034.3,194.8 1034.7,206.8 1035.1,209.4 1035.5,202.8 1035.9,205.2 1036.3,205.9 1036.7,204.3 1037.1,198.4 1037.5,191.6 1037.9,191.5 1038.3,206.7 1038.6,194.5 1039.0,196.2 1039.4,214.2 1039.8,214.0 1040.2,212.0 1040.6,197.7 1041.0,214.0 1041.4,215.6 1041.8,204.5 1042.2,216.9 1042.6,217.6 1042.9,212.9 1043.3,216.9 1043.7,236.9 1044.1,229.2 1044.5,215.8 1044.9,232.4 1045.3,213.8 1045.7,224.3 1046.1,222.9 1046.5,223.6 1046.9,239.8 1047.3,232.8 1047.6,236.3 1048.0,227.8 1048.4,219.3 1048.8,233.1 1049.2,232.0 1049.6,247.8 1050.0,237.2 1050.4,237.3 1050.8,237.9 1051.2,233.1 1051.6,228.2 1051.9,239.7 1052.3,237.7 1052.7,253.1 1053.1,238.2 1053.5,243.5 1053.9,257.7 1054.3,243.4 1054.7,251.8 1055.1,240.6 1055.5,245.7 1055.9,249.6 1056.3,238.6 1056.6,253.5 1057.0,255.7 1057.4,254.2 1057.8,254.7 1058.2,262.9 1058.6,253.6 1059.0,255.8 1059.4,263.8 1059.8,272.5 1060.2,253.3 1060.6,253.5 1060.9,257.6 1061.3,258.1 1061.7,253.2 1062.1,265.0 1062.5,256.5 1062.9,270.6 1063.3,277.0 1063.7,271.6 1064.1,275.1 1064.5,270.2 1064.9,261.6 1065.2,273.0 1065.6,269.4 1066.0,262.6 1066.4,266.1 1066.8,279.8 1067.2,286.6 1067.6,267.0 1068.0,291.8 1068.4,298.4 1068.8,300.8 1069.2,278.5 1069.6,299.2 1069.9,291.3 1070.3,291.5 1070.7,282.0 1071.1,302.9 1071.5,293.5 1071.9,292.8 1072.3,285.7 1072.7,299.0 1073.1,296.3 1073.5,301.5 1073.9,292.4 1074.2,294.6 1074.6,305.6 1075.0,299.7 1075.4,315.8 1075.8,305.4 1076.2,313.6 1076.6,311.2 1077.0,301.7 1077.4,294.3 1077.8,309.7 1078.2,313.3 1078.5,315.8 1078.9,308.8 1079.3,316.7 1079.7,309.2 1080.1,306.1 1080.5,313.8 1080.9,322.4 1081.3,314.9 1081.7,326.6 1082.1,335.6 1082.5,315.1 1082.9,310.3 1083.2,315.7 1083.6,329.1 1084.0,352.6 1084.4,333.9 1084.8,324.8 1085.2,333.3 1085.6,321.0 1086.0,338.3 1086.4,329.6 1086.8,332.5 1087.2,333.2 1087.5,346.5 1087.9,337.7 1088.3,335.9 1088.7,341.7 1089.1,349.4 1089.5,344.1 1089.9,348.5 1090.3,339.7 1090.7,335.9 1091.1,341.5 1091.5,342.1 1091.8,347.0 1092.2,345.0 1092.6,361.8 1093.0,347.6 1093.4,342.3 1093.8,353.6 1094.2,345.3 1094.6,362.5 1095.0,351.7 1095.4,354.2 1095.8,350.1 1096.2,353.2 1096.5,338.4 1096.9,379.4 1097.3,367.2 1097.7,362.2 1098.1,357.1 1098.5,363.3 1098.9,364.2 1099.3,371.6 1099.7,370.7 1100.1,367.7 1100.5,350.5 1100.8,368.5 1101.2,342.5 1101.6,355.8 1102.0,366.5 1102.4,358.8 1102.8,357.9 1103.2,375.0 1103.6,378.7 1104.0,356.2 1104.4,374.9 1104.8,361.8 1105.2,363.7 1105.5,381.8 1105.9,365.0 1106.3,366.2 1106.7,361.3 1107.1,371.6 1107.5,368.4 1107.9,369.5 1108.3,374.5 1108.7,361.0 1109.1,366.5 1109.5,362.6 1109.8,371.9 1110.2,366.3 1110.6,382.5 1111.0,380.5 1111.4,368.7 1111.8,378.3 1112.2,380.0 1112.6,376.2 1113.0,389.6 1113.4,376.9 1113.8,374.8 1114.1,381.2 1114.5,387.6 1114.9,366.4 1115.3,376.7 1115.7,387.8 1116.1,384.9 1116.5,392.8 1116.9,394.1 1117.3,395.6 1117.7,387.9 1118.1,378.8 1118.5,376.7 1118.8,383.3 1119.2,375.1 1119.6,378.7 1120.0,391.8 1120.4,389.7 1120.8,381.5 1121.2,378.8 1121.6,376.0 1122.0,394.5 1122.4,399.0 1122.8,369.6 1123.1,386.9 1123.5,377.6 1123.9,384.9 1124.3,395.7 1124.7,375.0 1125.1,382.1 1125.5,374.7 1125.9,381.4 1126.3,393.4 1126.7,386.4 1127.1,378.8 1127.4,391.5 1127.8,385.1 1128.2,377.9 1128.6,395.9 1129.0,389.6 1129.4,385.6 1129.8,379.8 1130.2,387.7 1130.6,392.4 1131.0,383.0 1131.4,391.8 1131.8,384.2 1132.1,384.7 1132.5,388.8 1132.9,381.0 1133.3,378.7 1133.7,397.2 1134.1,383.6 1134.5,388.8 1134.9,389.8 1135.3,386.9 1135.7,378.8 1136.1,388.6 1136.4,389.9 1136.8,396.9 1137.2,388.7 1137.6,387.5 1138.0,394.5 1138.4,389.7 1138.8,383.8 1139.2,377.0 1139.6,389.4 1140.0,372.3 1140.4,379.7 1140.7,380.6 1141.1,382.5 1141.5,386.1 1141.9,391.4 1142.3,387.1 1142.7,386.1 1143.1,385.2 1143.5,374.8 1143.9,371.3 1144.3,382.0 1144.7,378.4 1145.1,390.9 1145.4,400.4 1145.8,386.2 1146.2,383.5 1146.6,374.7 1147.0,367.0 1147.4,382.8 1147.8,374.9 1148.2,376.2 1148.6,382.7 1149.0,377.9 1149.4,381.0 1149.7,372.1 1150.1,391.3 1150.5,400.5 1150.9,382.0 1151.3,375.9 1151.7,374.7 1152.1,386.5 1152.5,378.0 1152.9,386.7 1153.3,376.5 1153.7,386.8 1154.1,389.0 1154.4,373.8 1154.8,389.8 1155.2,391.1 1155.6,374.0 1156.0,378.9 1156.4,396.5 1156.8,370.2 1157.2,387.8 1157.6,381.7 1158.0,378.8 1158.4,362.7 1158.7,377.5 1159.1,370.2 1159.5,377.6 1159.9,372.4 1160.3,386.3 1160.7,375.4 1161.1,379.6 1161.5,382.1 1161.9,372.0 1162.3,366.0 1162.7,369.8 1163.0,375.2 1163.4,367.0 1163.8,380.2 1164.2,369.2 1164.6,367.2 1165.0,371.2 1165.4,372.0 1165.8,368.7 1166.2,373.3 1166.6,370.2 1167.0,362.6 1167.4,381.8 1167.7,357.7 1168.1,363.0 1168.5,364.3 1168.9,372.8 1169.3,367.8 1169.7,368.6 1170.1,358.5 1170.5,358.3 1170.9,353.8 1171.3,361.3 1171.7,376.2 1172.0,367.7 1172.4,362.6 1172.8,356.8 1173.2,369.8 1173.6,359.5 1174.0,356.8 1174.4,361.1 1174.8,357.4 1175.2,338.4 1175.6,354.7 1176.0,339.2 1176.3,351.3 1176.7,357.6 1177.1,347.6 1177.5,353.9 1177.9,350.6 1178.3,366.0 1178.7,346.0 1179.1,352.1 1179.5,338.7 1179.9,345.4 1180.3,348.2 1180.7,352.4 1181.0,343.6 1181.4,345.7 1181.8,347.9 1182.2,327.5 1182.6,341.5 1183.0,333.0 1183.4,327.8 1183.8,334.8 1184.2,332.3 1184.6,332.3 1185.0,328.0 1185.3,330.0 1185.7,329.6 1186.1,331.3 1186.5,335.0 1186.9,333.7 1187.3,334.2 1187.7,327.1 1188.1,318.0 1188.5,333.6 1188.9,330.2 1189.3,331.9 1189.6,324.1 1190.0,315.2 1190.4,324.2 1190.8,318.4 1191.2,336.8 1191.6,319.8 1192.0,314.1 1192.4,321.1 1192.8,327.6 1193.2,311.2 1193.6,314.3 1194.0,299.1 1194.3,315.6 1194.7,311.5 1195.1,312.1 1195.5,307.4 1195.9,320.5 1196.3,296.0 1196.7,300.3 1197.1,305.5 1197.5,305.4 1197.9,297.9 1198.3,297.9 1198.6,302.6 1199.0,299.6 1199.4,294.7 1199.8,299.3 1200.2,297.5 1200.6,297.1 1201.0,295.5 1201.4,301.2 1201.8,297.5 1202.2,286.7 1202.6,282.5 1203.0,287.6 1203.3,312.3 1203.7,295.8 1204.1,280.8 1204.5,270.3 1204.9,272.7 1205.3,281.9 1205.7,281.9 1206.1,281.3 1206.5,264.3 1206.9,274.1 1207.3,281.5 1207.6,266.6 1208.0,266.4 1208.4,286.1 1208.8,274.8 1209.2,261.7 1209.6,261.2 1210.0,275.9 1210.4,265.7 1210.8,258.1 1211.2,260.9 1211.6,270.0 1211.9,262.5 1212.3,255.1 1212.7,255.3 1213.1,264.8 1213.5,239.5 1213.9,253.9 1214.3,265.4 1214.7,255.7 1215.1,272.3 1215.5,256.1 1215.9,250.3 1216.3,231.3 1216.6,246.4 1217.0,244.0 1217.4,240.1 1217.8,243.0 1218.2,247.9 1218.6,232.5 1219.0,237.6 1219.4,229.0 1219.8,231.7 1220.2,245.0 1220.6,240.5 1220.9,239.1 1221.3,237.9 1221.7,230.8 1222.1,234.3 1222.5,237.8 1222.9,220.3 1223.3,220.1 1223.7,228.7 1224.1,235.7 1224.5,231.5 1224.9,231.6 1225.2,231.6 1225.6,231.2 1226.0,221.4 1226.4,220.1 1226.8,218.2 1227.2,227.2 1227.6,217.3 1228.0,204.0 1228.4,215.9 1228.8,219.6 1229.2,196.0 1229.6,212.7 1229.9,218.6 1230.3,206.8 1230.7,217.5 1231.1,214.2 1231.5,203.3 1231.9,214.3 1232.3,219.8 1232.7,203.1 1233.1,201.3 1233.5,216.7 1233.9,208.4 1234.2,197.2 1234.6,202.5 1235.0,197.5 1235.4,203.7 1235.8,206.7 1236.2,205.4 1236.6,202.9 1237.0,198.6 1237.4,218.8 1237.8,212.5 1238.2,197.8 1238.5,192.3 1238.9,201.3 1239.3,195.8 1239.7,203.1 1240.1,204.7 1240.5,192.9 1240.9,193.9 1241.3,196.6 1241.7,201.8 1242.1,191.2 1242.5,191.7 1242.9,192.5 1243.2,191.0 1243.6,192.3 1244.0,185.4 1244.4,185.8 1244.8,175.3 1245.2,177.6 1245.6,187.7 1246.0,195.8 1246.4,182.0 1246.8,190.5 1247.2,174.7 1247.5,196.1 1247.9,188.1 1248.3,173.5 1248.7,184.3 1249.1,178.7 1249.5,178.9 1249.9,186.9 1250.3,177.0 1250.7,189.1 1251.1,184.9 1251.5,167.0 1251.9,183.4 1252.2,179.1 1252.6,189.3 1253.0,171.7 1253.4,187.8 1253.8,186.4 1254.2,185.2 1254.6,187.5 1255.0,190.8 1255.4,182.6 1255.8,183.9 1256.2,181.0 1256.5,187.3 1256.9,186.6 1257.3,182.4 1257.7,180.0 1258.1,186.7 1258.5,180.2 1258.9,181.7 1259.3,172.4 1259.7,175.4 1260.1,176.4 1260.5,172.8 1260.8,184.7 1261.2,170.4 1261.6,178.9 1262.0,183.9 1262.4,177.6 1262.8,188.3 1263.2,167.9 1263.6,179.0 1264.0,191.8 1264.4,189.3 1264.8,185.1 1265.2,185.6 1265.5,178.5 1265.9,175.7 1266.3,174.9 1266.7,178.6 1267.1,189.5 1267.5,175.0 1267.9,174.5 1268.3,197.6 1268.7,188.1 1269.1,186.9 1269.5,190.3 1269.8,177.5 1270.2,182.1 1270.6,185.3 1271.0,194.9 1271.4,201.4 1271.8,193.7 1272.2,193.4 1272.6,194.4 1273.0,203.6 1273.4,199.8 1273.8,192.4 1274.1,187.4 1274.5,194.1 1274.9,192.5 1275.3,191.9 1275.7,192.4 1276.1,183.8 1276.5,198.8 1276.9,192.1 1277.3,203.7 1277.7,186.2 1278.1,190.1 1278.5,188.8 1278.8,195.8 1279.2,198.1 1279.6,207.1 1280.0,196.3 1280.4,189.4 1280.8,219.9 1281.2,187.9 1281.6,207.2 1282.0,198.5 1282.4,208.6 1282.8,204.5 1283.1,198.2 1283.5,206.2 1283.9,192.6 1284.3,206.1 1284.7,202.5 1285.1,212.4 1285.5,212.4 1285.9,212.5 1286.3,206.8 1286.7,199.2 1287.1,211.8 1287.4,222.2 1287.8,218.2 1288.2,224.5 1288.6,212.0 1289.0,216.2 1289.4,225.0 1289.8,220.7 1290.2,212.3 1290.6,216.6 1291.0,225.0 1291.4,216.4 1291.8,219.9 1292.1,227.7 1292.5,223.3 1292.9,212.0 1293.3,234.5 1293.7,220.1 1294.1,229.5 1294.5,224.9 1294.9,227.6 1295.3,229.4 1295.7,233.6 1296.1,233.5 1296.4,229.6 1296.8,232.2 1297.2,247.1 1297.6,234.3 1298.0,229.1 1298.4,233.2 1298.8,239.2 1299.2,255.0 1299.6,238.5 1300.0,239.1 1300.4,234.4 1300.8,253.0 1301.1,248.8 1301.5,252.0 1301.9,251.2 1302.3,262.9 1302.7,254.9 1303.1,255.7 1303.5,256.4 1303.9,243.2 1304.3,260.5 1304.7,260.3 1305.1,250.0 1305.4,263.4 1305.8,251.7 1306.2,258.2 1306.6,267.2 1307.0,268.9 1307.4,263.9 1307.8,267.4 1308.2,266.5 1308.6,272.5 1309.0,265.1 1309.4,275.4 1309.7,275.1 1310.1,274.1 1310.5,283.1 1310.9,277.4 1311.3,277.7 1311.7,287.9 1312.1,291.5 1312.5,270.6 1312.9,282.7 1313.3,282.9 1313.7,287.7 1314.1,272.7 1314.4,286.8 1314.8,299.4 1315.2,284.0 1315.6,295.8 1316.0,286.7 1316.4,291.9 1316.8,282.8 1317.2,289.7 1317.6,297.0 1318.0,285.0 1318.4,276.6 1318.7,301.5 1319.1,290.7 1319.5,297.0 1319.9,297.6 1320.3,311.0 1320.7,310.1 1321.1,293.8 1321.5,304.1 1321.9,310.1 1322.3,294.2 1322.7,299.5 1323.0,304.1 1323.4,317.7 1323.8,311.7 1324.2,301.9 1324.6,328.5 1325.0,326.3 1325.4,321.6 1325.8,309.7 1326.2,316.1 1326.6,315.4 1327.0,318.4 1327.4,320.1 1327.7,313.1 1328.1,296.5 1328.5,320.4 1328.9,315.2 1329.3,329.0 1329.7,315.1 1330.1,327.1 1330.5,327.4 1330.9,333.0 1331.3,336.2 1331.7,335.6 1332.0,339.6 1332.4,342.9 1332.8,320.8 1333.2,332.0 1333.6,328.9 1334.0,333.3 1334.4,348.4 1334.8,338.6 1335.2,346.3 1335.6,346.5 1336.0,342.3 1336.3,341.1 1336.7,342.5 1337.1,343.1 1337.5,346.9 1337.9,345.4 1338.3,337.2 1338.7,331.1 1339.1,339.8 1339.5,350.5 1339.9,346.7 1340.3,343.3 1340.7,343.7 1341.0,342.9 1341.4,343.5 1341.8,350.4 1342.2,356.2 1342.6,366.2 1343.0,347.7" stroke="#ffff11" stroke-width="1.4"/>
</g>
<rect x="951.5" y="130.5" width="392" height="297" fill="none" stroke="#afafaf" stroke-width="1"/>
<path d="M1030.5,427 v-4 M1030.5,131 v4 M1108.5,427 v-4 M1108.5,131 v4 M1186.5,427 v-4 M1186.5,131 v4 M1264.5,427 v-4 M1264.5,131 v4 M952,425.5 h4 M1343,425.5 h-4 M952,371.5 h4 M1343,371.5 h-4 M952,316.5 h4 M1343,316.5 h-4 M952,261.5 h4 M1343,261.5 h-4 M952,206.5 h4 M1343,206.5 h-4 M952,152.5 h4 M1343,152.5 h-4" stroke="#afafaf" stroke-width="1" fill="none"/>
<g fill="#afafaf" font-size="13.33px">
<text x="951.2" y="445.1" text-anchor="middle">0</text>
<text x="1029.4" y="445.1" text-anchor="middle">2</text>
<text x="1107.7" y="445.1" text-anchor="middle">4</text>
<text x="1185.9" y="445.1" text-anchor="middle">6</text>
<text x="1264.2" y="445.1" text-anchor="middle">8</text>
<text x="1342.4" y="445.1" text-anchor="middle">10</text>
<text x="948.2" y="431.5" text-anchor="end">2</text>
<text x="948.2" y="376.9" text-anchor="end">2.5</text>
<text x="948.2" y="322.2" text-anchor="end">3</text>
<text x="948.2" y="267.6" text-anchor="end">3.5</text>
<text x="948.2" y="212.9" text-anchor="end">4</text>
<text x="948.2" y="158.3" text-anchor="end">4.5</text>
</g>
<text x="1147.5" y="123.2" text-anchor="middle" fill="#afafaf" font-size="16.67px">GPS Groundspeed</text>
<text transform="translate(925.4,279.0) rotate(-90)" text-anchor="middle" fill="#afafaf" font-size="16.67px">Meters per second</text>
<rect x="1342.5" y="105.5" width="15" height="11" fill="#282828" stroke="#fff" stroke-width="1"/>
<rect x="1343" y="106.8" width="14" height="2" fill="#b4b4b4"/>
<path d="M1350.0,116.0 v-6.6 M1347.0,112.4 l3,-2.8 l3,2.8" stroke="#eee" stroke-width="1.6" fill="none"/>
</svg>
</div>
<div class="status" style="top:453px;">
<div class="ready">Ready</div>
<div class="panel" style="left:288px;width:91px;">Sample based</div>
<div class="panel" style="left:386px;width:61px;"><span class="tt">T=10.000</span></div>
</div>
</div>
</body></html>
